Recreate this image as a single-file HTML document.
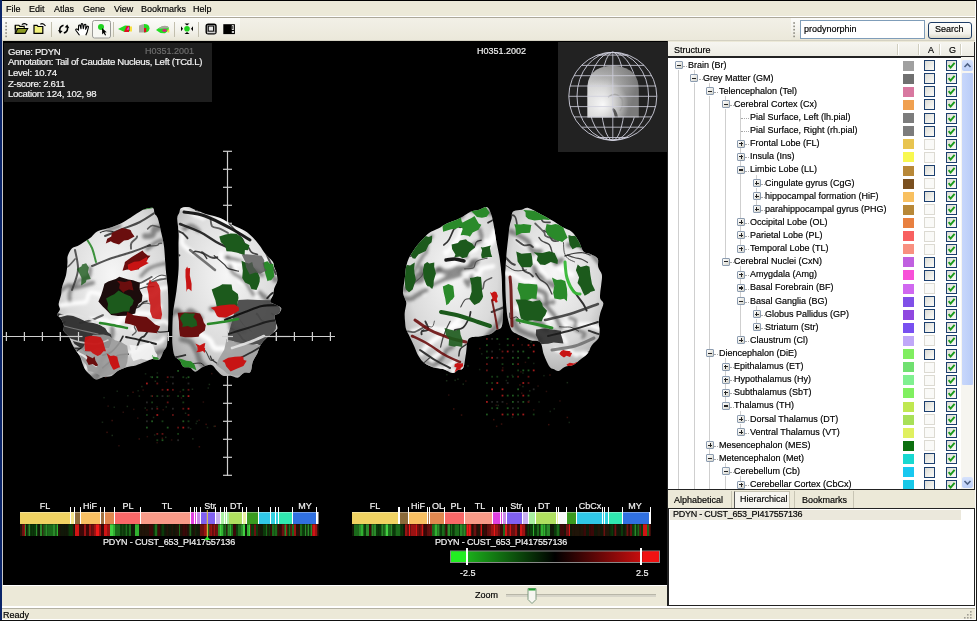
<!DOCTYPE html><html><head><meta charset="utf-8"><style>
*{margin:0;padding:0;box-sizing:border-box}
html,body{width:977px;height:621px;overflow:hidden;background:#ece9d8}
body{position:relative;font-family:"Liberation Sans",sans-serif;font-size:9px;color:#000}
.ab{position:absolute}
.t{position:absolute;white-space:nowrap;line-height:1;will-change:transform;-webkit-text-stroke:0.18px currentColor}
.sw{position:absolute;width:11px;height:10px}
.cb{position:absolute;width:11px;height:11px;border:1px solid #1c3f6e;background:linear-gradient(135deg,#dcdcd6,#fbfbf8)}
.cbf{position:absolute;width:11px;height:11px;border:1px solid #dcdad2;background:#fafaf8}
.ex{position:absolute;width:8px;height:8px;border:1px solid #8c9cb0;border-radius:1px;background:linear-gradient(135deg,#fff,#d4d4cc)}
.ex:after{content:"";position:absolute;left:1px;top:2.5px;width:4px;height:1.2px;background:#222}
.ex.p:before{content:"";position:absolute;left:2.5px;top:1px;width:1.2px;height:4px;background:#222}
.vl{position:absolute;width:1px;background:#cfcfcf}
.hl{position:absolute;height:1px;border-top:1px dotted #a8a8a8}
svg{position:absolute;overflow:visible}
</style></head><body>
<div class="ab" style="left:0px;top:0px;width:977px;height:1px;background:#000"></div>
<div class="ab" style="left:0px;top:0px;width:2px;height:621px;background:#0a2468"></div>
<div class="ab" style="left:976px;top:0px;width:1px;height:621px;background:#1a1a1a"></div>
<div class="ab" style="left:975px;top:1px;width:1px;height:619px;background:#fbfbf8"></div>
<div class="ab" style="left:0px;top:620px;width:977px;height:1px;background:#111"></div>
<div class="ab" style="left:2px;top:1px;width:973px;height:15px;background:#ece9d8"></div>
<div class="ab" style="left:2px;top:16px;width:973px;height:1px;background:#fff"></div>
<div class="ab" style="left:2px;top:17px;width:973px;height:1px;background:#aca899"></div>
<div class="t" style="left:6px;top:4.9px;">File</div>
<div class="t" style="left:29px;top:4.9px;">Edit</div>
<div class="t" style="left:54px;top:4.9px;">Atlas</div>
<div class="t" style="left:83px;top:4.9px;">Gene</div>
<div class="t" style="left:114px;top:4.9px;">View</div>
<div class="t" style="left:141px;top:4.9px;">Bookmarks</div>
<div class="t" style="left:193px;top:4.9px;">Help</div>
<div class="ab" style="left:2px;top:18px;width:973px;height:23px;background:linear-gradient(#f2f0e7,#ebe8da)"></div>
<div class="ab" style="left:2px;top:18px;width:238px;height:23px;background:linear-gradient(#fcfcfa,#f3f2eb 55%,#e7e4d4)"></div>
<div class="ab" style="left:791px;top:18px;width:184px;height:23px;background:linear-gradient(#fcfcfa,#f3f2eb 55%,#e7e4d4)"></div>
<div class="ab" style="left:2px;top:40px;width:973px;height:1px;background:#d4d1c2"></div>

<svg width="977" height="41" style="left:0;top:0">
 <g fill="#8c8a80">
  <rect x="5.3" y="22.20" width="1.6" height="1.6"/><rect x="5.3" y="25.55" width="1.6" height="1.6"/><rect x="5.3" y="28.90" width="1.6" height="1.6"/><rect x="5.3" y="32.25" width="1.6" height="1.6"/><rect x="5.3" y="35.60" width="1.6" height="1.6"/><rect x="793.3" y="22.20" width="1.6" height="1.6"/><rect x="793.3" y="25.55" width="1.6" height="1.6"/><rect x="793.3" y="28.90" width="1.6" height="1.6"/><rect x="793.3" y="32.25" width="1.6" height="1.6"/><rect x="793.3" y="35.60" width="1.6" height="1.6"/>
 </g>
 <g stroke="#c2bfae" stroke-width="1">
  <line x1="51.5" y1="22" x2="51.5" y2="37"/><line x1="113.5" y1="22" x2="113.5" y2="37"/>
  <line x1="174.5" y1="22" x2="174.5" y2="37"/><line x1="198.5" y1="22" x2="198.5" y2="37"/>
 </g>
 <!-- open folder -->
 <path d="M15.3 25.3 h3.6 l1 1.1 h4.3 v2.6 h-8.9 z" fill="#f6f6b0" stroke="#000" stroke-width="1.1"/>
 <path d="M15.3 33.4 l2.4 -4.9 h10 l-2.6 4.9 z" fill="#8c9a24" stroke="#000" stroke-width="1.1"/>
 <path d="M15.3 25.3 v8.1" stroke="#000" stroke-width="1.1"/>
 <path d="M21.8 24.6 q2.2 -1.6 4.2 -0.6" stroke="#000" stroke-width="1.1" fill="none"/>
 <circle cx="26.6" cy="24.6" r="0.9" fill="#000"/>
 <!-- closed folder -->
 <path d="M34 25.4 h3 l1 1.1 h4.8 v6.9 h-8.8 z" fill="#f2f27c" stroke="#000" stroke-width="1.2"/>
 <path d="M40.3 24.2 q2.8 -1.6 5.2 1.8" stroke="#000" stroke-width="1.1" fill="none"/>
 <!-- refresh -->
 <path d="M63.5 25.3 Q59.3 26.5 59.8 30.8" stroke="#000" stroke-width="1.5" fill="none"/>
 <path d="M58 30 L60 33.8 L62.6 31 Z" fill="#000"/>
 <path d="M63.8 33 Q68 31.8 67.5 27.5" stroke="#000" stroke-width="1.5" fill="none"/>
 <path d="M69.3 28.3 L67.3 24.5 L64.7 27.3 Z" fill="#000"/>
 <!-- hand -->
 <path d="M79.5 35.3 L76 30.5 Q75.3 29.3 76.5 29 Q77.5 28.9 78.5 30.2 L78.6 25.8 Q79 24.7 80 25.2 L81 28.8 L81.2 24.2 Q81.8 23.2 82.7 24 L83.3 28.6 L84.3 24.6 Q85.2 23.9 85.9 24.8 L85.6 29.2 L87 26.4 Q88 25.8 88.5 26.8 L87.2 32 L85.8 35.3" fill="#fff" stroke="#000" stroke-width="1.1" stroke-linejoin="round"/>
 <!-- selected button -->
 <rect x="92.5" y="20.5" width="18" height="17.5" rx="2" fill="#f7f7f3" stroke="#9a9a96" stroke-width="1"/>
 <circle cx="101" cy="27" r="3" fill="#1ed21e"/>
 <path d="M102 28 l0.2 6.5 l1.4 -1.4 l1.5 2.4 l1 -0.6 l-1.4 -2.3 l2 -0.3 z" fill="#000"/>
 <!-- brain icons -->
 <path d="M118 29 l7 -3.5 l5 0.2 l0 5.5 l-6 0.5 z" fill="#22dd22"/>
 <path d="M124 32 l2.5 -6 l3 0 l-0.5 6 z" fill="#e01020"/>
 <path d="M126.5 30 l2 -3.5 l1 3 z" fill="#ff30e0"/>
 <rect x="130" y="26.5" width="2" height="5" fill="#f8e040"/>
 <path d="M139 25.5 q3 -1.5 6 -1.5 v8.5 h-6 z" fill="#a8a49c"/>
 <path d="M144 24 q5.5 0 5.5 4.3 q0 4.2 -5.5 4.2 z" fill="#22dd22"/>
 <rect x="144" y="28" width="2.2" height="4.2" fill="#e01020"/>
 <path d="M156 30 q6 -5.5 12.5 -3 l0.5 3.3 l-4 3 q-5 0.5 -9 -3.3 z" fill="#22dd22"/>
 <path d="M159 28 q4 -3.5 9 -1.8 l0.3 2 l-9 0.5 z" fill="#a8a49c"/>
 <ellipse cx="164.5" cy="30.5" rx="2.2" ry="1.4" fill="#e01880"/>
 <rect x="167.5" y="29.5" width="1.8" height="3" fill="#f0e040"/>
 <!-- move -->
 <circle cx="187" cy="28.7" r="2.8" fill="#1ed21e"/>
 <path d="M184.5 23.5 h5 l-2.5 2 z M184.5 34 h5 l-2.5 -2 z M181 26.2 v5 l2 -2.5 z M193 26.2 v5 l-2 -2.5 z" fill="#000"/>
 <!-- square icon -->
 <rect x="206.2" y="24.2" width="9.8" height="9.6" rx="2" fill="#9a9a9a" stroke="#000" stroke-width="1.4"/>
 <rect x="208.3" y="26.1" width="5.2" height="5" fill="#e8e8e8" stroke="#000" stroke-width="0.9"/>
 <line x1="207" y1="32.8" x2="215.5" y2="32.8" stroke="#fff" stroke-width="0.8"/>
 <!-- black panel icon -->
 <rect x="223.3" y="24.2" width="11.6" height="9.9" fill="#000"/>
 <rect x="231.8" y="25.2" width="2" height="4.8" fill="#fff"/>
 <rect x="232.4" y="26" width="0.8" height="3.2" fill="#000"/>
 <rect x="231.8" y="31.2" width="2.2" height="1.6" fill="#fff"/>
</svg>

<div class="ab" style="left:800px;top:20px;width:125px;height:19px;background:#fff;border:1px solid #7f9db9"></div>
<div class="t" style="left:804px;top:24.6px;">prodynorphin</div>
<div class="ab" style="left:928px;top:21.5px;width:44px;height:17.5px;background:linear-gradient(#fefefd,#f2f1ea 70%,#dcd9c9);border:1px solid #1e3d66;border-radius:3px"></div>
<div class="t" style="left:935px;top:25.4px;">Search</div>
<div class="ab" style="left:2px;top:41px;width:666px;height:544px;background:#000"></div>
<div class="ab" style="left:2px;top:41px;width:1px;height:544px;background:#c8c8c8"></div>
<div class="ab" style="left:4px;top:43px;width:208px;height:59px;background:#1e1e1e"></div>
<div class="t" style="left:7.6px;top:46.6px;color:#f4f4f4;font-size:9.6px;letter-spacing:-0.3px">Gene: PDYN</div>
<div class="t" style="left:7.6px;top:57.32px;color:#f4f4f4;font-size:9.6px;letter-spacing:-0.3px">Annotation: Tail of Caudate Nucleus, Left (TCd.L)</div>
<div class="t" style="left:7.6px;top:68.04px;color:#f4f4f4;font-size:9.6px;letter-spacing:-0.3px">Level: 10.74</div>
<div class="t" style="left:7.6px;top:78.76px;color:#f4f4f4;font-size:9.6px;letter-spacing:-0.3px">Z-score: 2.611</div>
<div class="t" style="left:7.6px;top:89.48px;color:#f4f4f4;font-size:9.6px;letter-spacing:-0.3px">Location: 124, 102, 98</div>
<div class="t" style="left:145px;top:46.9px;color:#6e6e6e">H0351.2001</div>
<div class="t" style="left:476.5px;top:46.6px;color:#f0f0f0">H0351.2002</div>
<div class="ab" style="left:558px;top:42px;width:109px;height:110px;background:#222"></div>
<svg width="110" height="111" style="left:558px;top:42px"><defs><linearGradient id="hg" x1="0" y1="0" x2="1" y2="0.3"><stop offset="0" stop-color="#d8d8d8"/><stop offset="0.45" stop-color="#c4c4c4"/><stop offset="1" stop-color="#7a7a7a"/></linearGradient><radialGradient id="hg2" cx="0.3" cy="0.75" r="0.5"><stop offset="0" stop-color="#ffffff" stop-opacity="0.9"/><stop offset="1" stop-color="#ffffff" stop-opacity="0"/></radialGradient><linearGradient id="hg3" x1="0" y1="0" x2="0" y2="1"><stop offset="0" stop-color="#606060" stop-opacity="0.5"/><stop offset="0.4" stop-color="#606060" stop-opacity="0"/></linearGradient></defs><g stroke="#cfcfdc" stroke-width="0.9" fill="none"><circle cx="54.8" cy="54.3" r="44"/><ellipse cx="54.8" cy="54.3" rx="12.0" ry="44"/><ellipse cx="54.8" cy="54.3" rx="24.5" ry="44"/><ellipse cx="54.8" cy="54.3" rx="35.8" ry="44"/></g><path d="M29.4 75.5 L29.4 44 Q30 34 38 28 Q46 23.8 56 23.8 Q69 24.5 76 32 Q80.8 38 80.8 48 L80.8 75.5 Z" fill="url(#hg)"/><path d="M29.4 75.5 L29.4 44 Q30 34 38 28 Q46 23.8 56 23.8 Q69 24.5 76 32 Q80.8 38 80.8 48 L80.8 75.5 Z" fill="url(#hg2)"/><path d="M29.4 75.5 L29.4 44 Q30 34 38 28 Q46 23.8 56 23.8 Q69 24.5 76 32 Q80.8 38 80.8 48 L80.8 75.5 Z" fill="url(#hg3)"/><path d="M50 55 q8 -6 14 2 q2 6 -2 12" stroke="#9a9a9a" stroke-width="1.5" fill="none" opacity="0.7"/><path d="M55 66 q4 2 5 9.5 h-3 q-1 -5 -3 -8 z" fill="#3a3a3a" opacity="0.8"/><g stroke="#cfcfdc" stroke-width="0.9" fill="none" opacity="0.9"><line x1="39.4" y1="13.1" x2="70.2" y2="13.1"/><line x1="23.5" y1="23.4" x2="86.1" y2="23.4"/><line x1="15.9" y1="33.7" x2="93.7" y2="33.7"/><line x1="12.0" y1="44.0" x2="97.6" y2="44.0"/><line x1="10.8" y1="54.3" x2="98.8" y2="54.3"/><line x1="12.0" y1="64.6" x2="97.6" y2="64.6"/><line x1="15.9" y1="74.9" x2="93.7" y2="74.9"/><line x1="23.5" y1="85.2" x2="86.1" y2="85.2"/><line x1="39.4" y1="95.5" x2="70.2" y2="95.5"/><line x1="54.8" y1="10.299999999999997" x2="54.8" y2="98.3"/></g></svg>
<svg width="977" height="621" style="left:0;top:0"><g stroke="#cfcfcf" stroke-width="1.2"><line x1="227.5" y1="151" x2="227.5" y2="476"/><line x1="223" y1="151.3" x2="232" y2="151.3"/><line x1="223" y1="169.3" x2="232" y2="169.3"/><line x1="223" y1="187.3" x2="232" y2="187.3"/><line x1="223" y1="205.3" x2="232" y2="205.3"/><line x1="223" y1="223.3" x2="232" y2="223.3"/><line x1="223" y1="241.3" x2="232" y2="241.3"/><line x1="223" y1="259.3" x2="232" y2="259.3"/><line x1="223" y1="277.3" x2="232" y2="277.3"/><line x1="223" y1="295.3" x2="232" y2="295.3"/><line x1="223" y1="313.3" x2="232" y2="313.3"/><line x1="223" y1="331.3" x2="232" y2="331.3"/><line x1="223" y1="349.3" x2="232" y2="349.3"/><line x1="223" y1="367.3" x2="232" y2="367.3"/><line x1="223" y1="385.3" x2="232" y2="385.3"/><line x1="223" y1="403.3" x2="232" y2="403.3"/><line x1="223" y1="421.3" x2="232" y2="421.3"/><line x1="223" y1="439.3" x2="232" y2="439.3"/><line x1="223" y1="457.3" x2="232" y2="457.3"/><line x1="223" y1="475.3" x2="232" y2="475.3"/><line x1="3" y1="336.5" x2="335" y2="336.5"/><line x1="6.4" y1="332" x2="6.4" y2="341"/><line x1="24.4" y1="332" x2="24.4" y2="341"/><line x1="42.4" y1="332" x2="42.4" y2="341"/><line x1="60.4" y1="332" x2="60.4" y2="341"/><line x1="78.4" y1="332" x2="78.4" y2="341"/><line x1="96.4" y1="332" x2="96.4" y2="341"/><line x1="114.4" y1="332" x2="114.4" y2="341"/><line x1="132.4" y1="332" x2="132.4" y2="341"/><line x1="150.4" y1="332" x2="150.4" y2="341"/><line x1="168.4" y1="332" x2="168.4" y2="341"/><line x1="186.4" y1="332" x2="186.4" y2="341"/><line x1="204.4" y1="332" x2="204.4" y2="341"/><line x1="222.4" y1="332" x2="222.4" y2="341"/><line x1="240.4" y1="332" x2="240.4" y2="341"/><line x1="258.4" y1="332" x2="258.4" y2="341"/><line x1="276.4" y1="332" x2="276.4" y2="341"/><line x1="294.4" y1="332" x2="294.4" y2="341"/><line x1="312.4" y1="332" x2="312.4" y2="341"/><line x1="330.4" y1="332" x2="330.4" y2="341"/></g></svg>
<svg width="977" height="621" style="left:0;top:0"><defs><radialGradient id="bg1" cx="0.5" cy="0.4" r="0.7"><stop offset="0" stop-color="#f6f6f6"/><stop offset="0.6" stop-color="#dadada"/><stop offset="1" stop-color="#9a9a9a"/></radialGradient><linearGradient id="tg" x1="0" y1="0" x2="0" y2="1"><stop offset="0" stop-color="#5a5a5a"/><stop offset="1" stop-color="#bdbdbd"/></linearGradient><filter id="soft" x="-20%" y="-20%" width="140%" height="140%"><feGaussianBlur stdDeviation="1.6"/></filter></defs><clipPath id="cL1"><path d="M153.9,207.6 C151.2,206.3 146.8,208.4 141.7,210.7 C136.6,213.0 130.5,218.1 123.4,221.4 C116.3,224.7 105.5,227.0 98.9,230.6 C92.3,234.2 88.2,239.8 83.6,242.8 C79.0,245.9 74.2,245.3 71.4,248.9 C68.6,252.5 68.3,258.1 66.8,264.2 C65.3,270.3 63.5,279.0 62.2,285.6 C60.9,292.2 60.0,299.1 59.2,303.9 C58.4,308.7 57.1,311.8 57.6,314.6 C58.1,317.4 61.2,317.9 62.2,320.7 C63.2,323.5 62.3,327.6 63.8,331.4 C65.3,335.2 68.6,339.5 71.4,343.6 C74.2,347.7 78.0,351.3 80.6,355.9 C83.1,360.5 84.2,367.3 86.7,371.1 C89.2,374.9 91.7,378.0 95.8,378.8 C99.9,379.6 106.0,377.7 111.1,375.7 C116.2,373.7 120.8,368.9 126.4,366.6 C132.0,364.3 139.1,363.3 144.7,362.0 C150.3,360.7 156.2,362.0 160.0,358.9 C163.8,355.8 166.4,354.8 167.7,343.6 C169.0,332.4 168.3,308.0 167.7,291.7 C167.1,275.4 165.6,258.0 164.0,245.8 C162.4,233.6 159.7,224.7 158.0,218.3 C156.3,211.9 156.6,208.9 153.9,207.6 Z"/></clipPath><clipPath id="cR1"><path d="M180.3,207.6 C183.4,206.1 189.0,207.4 195.6,209.2 C202.2,211.0 211.8,214.7 220.0,218.3 C228.2,221.9 237.9,226.0 244.5,230.6 C251.1,235.2 255.1,240.7 259.7,245.8 C264.3,250.9 269.2,256.4 272.0,261.0 C274.8,265.6 276.1,268.7 276.6,273.3 C277.1,277.9 276.0,284.0 275.0,288.6 C274.0,293.2 269.4,297.6 270.4,300.9 C271.4,304.2 280.3,306.0 281.1,308.5 C281.9,311.0 275.8,312.8 275.0,316.1 C274.2,319.4 278.1,324.8 276.6,328.4 C275.1,332.0 269.2,333.4 265.9,337.5 C262.6,341.6 259.2,347.2 256.7,352.8 C254.1,358.4 253.7,367.0 250.6,371.1 C247.5,375.2 242.9,376.5 238.3,377.3 C233.7,378.1 227.6,377.8 223.0,375.7 C218.4,373.6 215.4,365.8 210.8,365.0 C206.2,364.2 200.2,370.8 195.6,371.1 C191.0,371.4 186.9,369.1 183.3,366.6 C179.7,364.1 176.0,361.2 174.2,355.9 C172.4,350.5 172.3,345.2 172.6,334.5 C172.8,323.8 174.7,306.5 175.7,291.7 C176.7,276.9 178.6,258.0 178.8,245.8 C179.1,233.6 176.9,224.7 177.2,218.3 C177.4,211.9 177.2,209.1 180.3,207.6 Z"/></clipPath><clipPath id="cL2"><path d="M487.7,207.2 C483.9,205.3 477.1,208.9 470.3,211.6 C463.5,214.3 453.9,219.8 447.1,223.2 C440.4,226.6 434.6,228.5 429.8,231.9 C425.0,235.3 421.6,239.2 418.2,243.5 C414.8,247.8 411.7,252.6 409.5,257.9 C407.3,263.2 406.1,269.5 405.1,275.3 C404.1,281.1 403.4,287.9 403.7,292.7 C403.9,297.5 406.4,299.5 406.6,304.3 C406.8,309.1 404.6,316.4 405.1,321.7 C405.6,327.0 407.3,330.4 409.5,336.2 C411.7,342.0 414.3,351.1 418.2,356.4 C422.1,361.7 426.9,365.3 432.7,368.0 C438.5,370.7 447.8,372.4 452.9,372.4 C458.0,372.4 460.4,373.6 463.1,368.0 C465.8,362.4 464.3,344.8 468.9,339.0 C473.5,333.2 485.2,335.5 490.6,333.3 C496.0,331.1 499.1,332.3 501.0,326.0 C502.9,319.7 502.3,306.9 502.0,295.6 C501.7,284.3 500.5,270.1 499.0,258.0 C497.5,245.9 494.9,231.7 493.0,223.2 C491.1,214.7 491.5,209.1 487.7,207.2 Z"/></clipPath><clipPath id="cR2"><path d="M514.5,211.6 C517.4,210.1 522.7,207.2 529.0,208.7 C535.3,210.1 544.9,216.4 552.1,220.3 C559.3,224.2 567.1,226.6 572.4,231.9 C577.7,237.2 579.9,247.8 584.0,252.1 C588.1,256.4 594.1,254.1 597.0,258.0 C599.9,261.9 600.9,269.5 601.4,275.3 C601.9,281.1 599.8,287.9 600.0,292.7 C600.2,297.5 603.0,299.5 602.8,304.3 C602.5,309.1 599.2,315.9 598.5,321.7 C597.8,327.5 600.4,333.7 598.5,339.0 C596.6,344.3 591.4,349.2 587.0,353.5 C582.6,357.8 577.2,362.1 572.4,365.0 C567.6,367.9 561.9,370.7 558.0,371.0 C554.1,371.3 552.1,371.4 549.2,366.6 C546.3,361.8 544.9,347.1 540.6,342.0 C536.3,336.9 528.0,338.1 523.2,336.2 C518.4,334.3 514.5,334.8 511.6,330.4 C508.7,326.0 506.8,319.7 505.8,310.0 C504.8,300.3 505.3,284.9 505.8,272.4 C506.3,259.9 507.7,244.0 508.7,234.8 C509.7,225.6 510.6,221.3 511.6,217.4 C512.6,213.5 511.6,213.1 514.5,211.6 Z"/></clipPath><rect x="177.2" y="370.0" width="1.8" height="1.8" fill="#1f561f"/><rect x="151.2" y="376.3" width="1.8" height="1.8" fill="#1f561f"/><rect x="156.4" y="376.3" width="1.8" height="1.8" fill="#1f561f"/><rect x="166.8" y="376.3" width="1.8" height="1.8" fill="#601212"/><rect x="172.0" y="376.3" width="1.8" height="1.8" fill="#262626"/><rect x="182.4" y="376.3" width="1.8" height="1.8" fill="#163c16"/><rect x="187.6" y="376.3" width="1.8" height="1.8" fill="#1f561f"/><rect x="146.0" y="382.6" width="1.8" height="1.8" fill="#a01a1a"/><rect x="156.4" y="382.6" width="1.8" height="1.8" fill="#601212"/><rect x="172.0" y="382.6" width="1.8" height="1.8" fill="#262626"/><rect x="187.6" y="382.6" width="1.8" height="1.8" fill="#262626"/><rect x="161.6" y="388.9" width="1.8" height="1.8" fill="#601212"/><rect x="166.8" y="388.9" width="1.8" height="1.8" fill="#a01a1a"/><rect x="172.0" y="388.9" width="1.8" height="1.8" fill="#601212"/><rect x="182.4" y="388.9" width="1.8" height="1.8" fill="#163c16"/><rect x="187.6" y="388.9" width="1.8" height="1.8" fill="#601212"/><rect x="151.2" y="395.2" width="1.8" height="1.8" fill="#601212"/><rect x="156.4" y="395.2" width="1.8" height="1.8" fill="#163c16"/><rect x="161.6" y="395.2" width="1.8" height="1.8" fill="#262626"/><rect x="166.8" y="395.2" width="1.8" height="1.8" fill="#163c16"/><rect x="177.2" y="395.2" width="1.8" height="1.8" fill="#163c16"/><rect x="182.4" y="395.2" width="1.8" height="1.8" fill="#1f561f"/><rect x="187.6" y="395.2" width="1.8" height="1.8" fill="#a01a1a"/><rect x="146.0" y="401.5" width="1.8" height="1.8" fill="#262626"/><rect x="151.2" y="401.5" width="1.8" height="1.8" fill="#163c16"/><rect x="166.8" y="401.5" width="1.8" height="1.8" fill="#601212"/><rect x="182.4" y="401.5" width="1.8" height="1.8" fill="#163c16"/><rect x="151.2" y="407.8" width="1.8" height="1.8" fill="#262626"/><rect x="156.4" y="407.8" width="1.8" height="1.8" fill="#601212"/><rect x="172.0" y="407.8" width="1.8" height="1.8" fill="#262626"/><rect x="182.4" y="407.8" width="1.8" height="1.8" fill="#601212"/><rect x="187.6" y="407.8" width="1.8" height="1.8" fill="#a01a1a"/><rect x="146.0" y="414.1" width="1.8" height="1.8" fill="#163c16"/><rect x="156.4" y="414.1" width="1.8" height="1.8" fill="#a01a1a"/><rect x="172.0" y="414.1" width="1.8" height="1.8" fill="#601212"/><rect x="187.6" y="414.1" width="1.8" height="1.8" fill="#601212"/><rect x="146.0" y="420.4" width="1.8" height="1.8" fill="#262626"/><rect x="151.2" y="420.4" width="1.8" height="1.8" fill="#1f561f"/><rect x="161.6" y="420.4" width="1.8" height="1.8" fill="#163c16"/><rect x="182.4" y="420.4" width="1.8" height="1.8" fill="#1f561f"/><rect x="187.6" y="420.4" width="1.8" height="1.8" fill="#163c16"/><rect x="146.0" y="426.7" width="1.8" height="1.8" fill="#1f561f"/><rect x="166.8" y="426.7" width="1.8" height="1.8" fill="#1f561f"/><rect x="177.2" y="426.7" width="1.8" height="1.8" fill="#601212"/><rect x="182.4" y="426.7" width="1.8" height="1.8" fill="#a01a1a"/><rect x="187.6" y="426.7" width="1.8" height="1.8" fill="#262626"/><rect x="156.4" y="433.0" width="1.8" height="1.8" fill="#601212"/><rect x="161.6" y="433.0" width="1.8" height="1.8" fill="#601212"/><rect x="177.2" y="433.0" width="1.8" height="1.8" fill="#163c16"/><rect x="156.4" y="439.3" width="1.8" height="1.8" fill="#163c16"/><rect x="161.6" y="439.3" width="1.8" height="1.8" fill="#1f561f"/><rect x="177.2" y="439.3" width="1.8" height="1.8" fill="#262626"/><rect x="486.0" y="338.0" width="1.8" height="1.8" fill="#601212"/><rect x="491.2" y="338.0" width="1.8" height="1.8" fill="#262626"/><rect x="496.4" y="338.0" width="1.8" height="1.8" fill="#1f561f"/><rect x="506.8" y="338.0" width="1.8" height="1.8" fill="#1f561f"/><rect x="517.2" y="338.0" width="1.8" height="1.8" fill="#601212"/><rect x="527.6" y="338.0" width="1.8" height="1.8" fill="#163c16"/><rect x="532.8" y="338.0" width="1.8" height="1.8" fill="#601212"/><rect x="486.0" y="344.3" width="1.8" height="1.8" fill="#1f561f"/><rect x="506.8" y="344.3" width="1.8" height="1.8" fill="#163c16"/><rect x="512.0" y="344.3" width="1.8" height="1.8" fill="#601212"/><rect x="527.6" y="344.3" width="1.8" height="1.8" fill="#a01a1a"/><rect x="532.8" y="344.3" width="1.8" height="1.8" fill="#a01a1a"/><rect x="486.0" y="350.6" width="1.8" height="1.8" fill="#163c16"/><rect x="491.2" y="350.6" width="1.8" height="1.8" fill="#262626"/><rect x="501.6" y="350.6" width="1.8" height="1.8" fill="#601212"/><rect x="506.8" y="350.6" width="1.8" height="1.8" fill="#a01a1a"/><rect x="512.0" y="350.6" width="1.8" height="1.8" fill="#262626"/><rect x="517.2" y="350.6" width="1.8" height="1.8" fill="#1f561f"/><rect x="522.4" y="350.6" width="1.8" height="1.8" fill="#1f561f"/><rect x="532.8" y="350.6" width="1.8" height="1.8" fill="#a01a1a"/><rect x="486.0" y="356.9" width="1.8" height="1.8" fill="#1f561f"/><rect x="491.2" y="356.9" width="1.8" height="1.8" fill="#a01a1a"/><rect x="496.4" y="356.9" width="1.8" height="1.8" fill="#262626"/><rect x="501.6" y="356.9" width="1.8" height="1.8" fill="#601212"/><rect x="512.0" y="356.9" width="1.8" height="1.8" fill="#1f561f"/><rect x="517.2" y="356.9" width="1.8" height="1.8" fill="#1f561f"/><rect x="527.6" y="356.9" width="1.8" height="1.8" fill="#1f561f"/><rect x="486.0" y="363.2" width="1.8" height="1.8" fill="#601212"/><rect x="501.6" y="363.2" width="1.8" height="1.8" fill="#163c16"/><rect x="512.0" y="363.2" width="1.8" height="1.8" fill="#1f561f"/><rect x="517.2" y="363.2" width="1.8" height="1.8" fill="#601212"/><rect x="486.0" y="369.5" width="1.8" height="1.8" fill="#601212"/><rect x="501.6" y="369.5" width="1.8" height="1.8" fill="#601212"/><rect x="517.2" y="369.5" width="1.8" height="1.8" fill="#163c16"/><rect x="522.4" y="369.5" width="1.8" height="1.8" fill="#1f561f"/><rect x="527.6" y="369.5" width="1.8" height="1.8" fill="#1f561f"/><rect x="532.8" y="369.5" width="1.8" height="1.8" fill="#a01a1a"/><rect x="491.2" y="375.8" width="1.8" height="1.8" fill="#163c16"/><rect x="496.4" y="375.8" width="1.8" height="1.8" fill="#163c16"/><rect x="506.8" y="375.8" width="1.8" height="1.8" fill="#163c16"/><rect x="512.0" y="375.8" width="1.8" height="1.8" fill="#163c16"/><rect x="517.2" y="375.8" width="1.8" height="1.8" fill="#601212"/><rect x="527.6" y="375.8" width="1.8" height="1.8" fill="#601212"/><rect x="486.0" y="382.1" width="1.8" height="1.8" fill="#163c16"/><rect x="491.2" y="382.1" width="1.8" height="1.8" fill="#163c16"/><rect x="496.4" y="382.1" width="1.8" height="1.8" fill="#a01a1a"/><rect x="506.8" y="382.1" width="1.8" height="1.8" fill="#262626"/><rect x="522.4" y="382.1" width="1.8" height="1.8" fill="#a01a1a"/><rect x="527.6" y="382.1" width="1.8" height="1.8" fill="#601212"/><rect x="491.2" y="388.4" width="1.8" height="1.8" fill="#a01a1a"/><rect x="501.6" y="388.4" width="1.8" height="1.8" fill="#a01a1a"/><rect x="517.2" y="388.4" width="1.8" height="1.8" fill="#1f561f"/><rect x="532.8" y="388.4" width="1.8" height="1.8" fill="#262626"/><rect x="486.0" y="394.7" width="1.8" height="1.8" fill="#163c16"/><rect x="501.6" y="394.7" width="1.8" height="1.8" fill="#a01a1a"/><rect x="506.8" y="394.7" width="1.8" height="1.8" fill="#1f561f"/><rect x="512.0" y="394.7" width="1.8" height="1.8" fill="#1f561f"/><rect x="517.2" y="394.7" width="1.8" height="1.8" fill="#163c16"/><rect x="522.4" y="394.7" width="1.8" height="1.8" fill="#a01a1a"/><rect x="527.6" y="394.7" width="1.8" height="1.8" fill="#1f561f"/><rect x="486.0" y="401.0" width="1.8" height="1.8" fill="#a01a1a"/><rect x="491.2" y="401.0" width="1.8" height="1.8" fill="#262626"/><rect x="496.4" y="401.0" width="1.8" height="1.8" fill="#262626"/><rect x="501.6" y="401.0" width="1.8" height="1.8" fill="#262626"/><rect x="512.0" y="401.0" width="1.8" height="1.8" fill="#1f561f"/><rect x="517.2" y="401.0" width="1.8" height="1.8" fill="#262626"/><rect x="522.4" y="401.0" width="1.8" height="1.8" fill="#1f561f"/><rect x="527.6" y="401.0" width="1.8" height="1.8" fill="#601212"/><rect x="491.2" y="407.3" width="1.8" height="1.8" fill="#163c16"/><rect x="496.4" y="407.3" width="1.8" height="1.8" fill="#1f561f"/><rect x="506.8" y="407.3" width="1.8" height="1.8" fill="#1f561f"/><rect x="512.0" y="407.3" width="1.8" height="1.8" fill="#262626"/><rect x="517.2" y="407.3" width="1.8" height="1.8" fill="#163c16"/><rect x="486.0" y="413.6" width="1.8" height="1.8" fill="#1f561f"/><rect x="501.6" y="413.6" width="1.8" height="1.8" fill="#a01a1a"/><rect x="506.8" y="413.6" width="1.8" height="1.8" fill="#1f561f"/><rect x="512.0" y="413.6" width="1.8" height="1.8" fill="#a01a1a"/><rect x="517.2" y="413.6" width="1.8" height="1.8" fill="#1f561f"/><rect x="522.4" y="413.6" width="1.8" height="1.8" fill="#a01a1a"/><rect x="532.8" y="413.6" width="1.8" height="1.8" fill="#163c16"/><rect x="211.0" y="372.9" width="1.5" height="1.5" fill="#2a0e0c"/><rect x="118.2" y="445.0" width="1.5" height="1.5" fill="#2a0e0c"/><rect x="106.3" y="431.6" width="1.5" height="1.5" fill="#3a100c"/><rect x="198.6" y="446.0" width="1.5" height="1.5" fill="#3a100c"/><rect x="113.5" y="406.5" width="1.5" height="1.5" fill="#142414"/><rect x="132.3" y="391.5" width="1.5" height="1.5" fill="#3a100c"/><rect x="207.5" y="387.3" width="1.5" height="1.5" fill="#142414"/><rect x="191.7" y="388.5" width="1.5" height="1.5" fill="#1a2c18"/><rect x="126.6" y="405.7" width="1.5" height="1.5" fill="#1a2c18"/><rect x="156.3" y="406.1" width="1.5" height="1.5" fill="#142414"/><rect x="150.5" y="395.3" width="1.5" height="1.5" fill="#1a2c18"/><rect x="146.6" y="435.9" width="1.5" height="1.5" fill="#2a0e0c"/><rect x="156.4" y="441.9" width="1.5" height="1.5" fill="#2a0e0c"/><rect x="122.5" y="411.5" width="1.5" height="1.5" fill="#2a0e0c"/><rect x="133.0" y="408.6" width="1.5" height="1.5" fill="#2a0e0c"/><rect x="202.6" y="401.3" width="1.5" height="1.5" fill="#2a0e0c"/><rect x="153.9" y="434.2" width="1.5" height="1.5" fill="#142414"/><rect x="146.2" y="409.2" width="1.5" height="1.5" fill="#3a100c"/><rect x="162.5" y="409.0" width="1.5" height="1.5" fill="#2a0e0c"/><rect x="127.1" y="395.0" width="1.5" height="1.5" fill="#142414"/><rect x="144.5" y="407.3" width="1.5" height="1.5" fill="#1a2c18"/><rect x="189.9" y="428.0" width="1.5" height="1.5" fill="#142414"/><rect x="154.6" y="380.5" width="1.5" height="1.5" fill="#1a2c18"/><rect x="144.8" y="373.1" width="1.5" height="1.5" fill="#142414"/><rect x="206.7" y="426.8" width="1.5" height="1.5" fill="#142414"/><rect x="107.4" y="405.4" width="1.5" height="1.5" fill="#2a0e0c"/><rect x="208.6" y="383.7" width="1.5" height="1.5" fill="#1a2c18"/><rect x="165.0" y="436.6" width="1.5" height="1.5" fill="#1a2c18"/><rect x="105.0" y="376.6" width="1.5" height="1.5" fill="#2a0e0c"/><rect x="165.5" y="406.2" width="1.5" height="1.5" fill="#1a2c18"/><rect x="179.6" y="390.9" width="1.5" height="1.5" fill="#2a0e0c"/><rect x="170.2" y="376.2" width="1.5" height="1.5" fill="#1a2c18"/><rect x="149.9" y="376.1" width="1.5" height="1.5" fill="#142414"/><rect x="168.5" y="395.1" width="1.5" height="1.5" fill="#2a0e0c"/><rect x="192.1" y="438.1" width="1.5" height="1.5" fill="#1a2c18"/><rect x="101.7" y="421.5" width="1.5" height="1.5" fill="#142414"/><rect x="170.9" y="439.2" width="1.5" height="1.5" fill="#2a0e0c"/><rect x="116.5" y="390.5" width="1.5" height="1.5" fill="#142414"/><rect x="137.4" y="390.0" width="1.5" height="1.5" fill="#142414"/><rect x="156.6" y="372.2" width="1.5" height="1.5" fill="#142414"/><rect x="180.7" y="397.2" width="1.5" height="1.5" fill="#2a0e0c"/><rect x="198.4" y="419.5" width="1.5" height="1.5" fill="#2a0e0c"/><rect x="213.5" y="425.6" width="1.5" height="1.5" fill="#1a2c18"/><rect x="138.5" y="438.2" width="1.5" height="1.5" fill="#3a100c"/><rect x="138.6" y="395.3" width="1.5" height="1.5" fill="#1a2c18"/><rect x="184.8" y="412.5" width="1.5" height="1.5" fill="#1a2c18"/><rect x="165.8" y="381.0" width="1.5" height="1.5" fill="#2a0e0c"/><rect x="111.5" y="434.7" width="1.5" height="1.5" fill="#1a2c18"/><rect x="196.4" y="420.5" width="1.5" height="1.5" fill="#142414"/><rect x="142.4" y="389.3" width="1.5" height="1.5" fill="#2a0e0c"/><rect x="214.5" y="425.5" width="1.5" height="1.5" fill="#3a100c"/><rect x="195.5" y="422.7" width="1.5" height="1.5" fill="#142414"/><rect x="152.8" y="416.7" width="1.5" height="1.5" fill="#1a2c18"/><rect x="103.3" y="396.9" width="1.5" height="1.5" fill="#142414"/><rect x="141.1" y="385.8" width="1.5" height="1.5" fill="#1a2c18"/><rect x="205.4" y="423.6" width="1.5" height="1.5" fill="#3a100c"/><rect x="111.4" y="419.8" width="1.5" height="1.5" fill="#3a100c"/><rect x="185.7" y="377.2" width="1.5" height="1.5" fill="#1a2c18"/><rect x="161.6" y="437.5" width="1.5" height="1.5" fill="#3a100c"/><rect x="137.0" y="417.4" width="1.5" height="1.5" fill="#2a0e0c"/><rect x="533.0" y="409.1" width="1.5" height="1.5" fill="#2a0e0c"/><rect x="511.5" y="374.6" width="1.5" height="1.5" fill="#142414"/><rect x="521.0" y="392.4" width="1.5" height="1.5" fill="#2a0e0c"/><rect x="478.9" y="368.8" width="1.5" height="1.5" fill="#142414"/><rect x="553.5" y="408.1" width="1.5" height="1.5" fill="#142414"/><rect x="448.0" y="394.3" width="1.5" height="1.5" fill="#2a0e0c"/><rect x="564.7" y="350.0" width="1.5" height="1.5" fill="#1a2c18"/><rect x="495.5" y="404.5" width="1.5" height="1.5" fill="#2a0e0c"/><rect x="498.9" y="348.7" width="1.5" height="1.5" fill="#1a2c18"/><rect x="543.2" y="374.9" width="1.5" height="1.5" fill="#142414"/><rect x="519.2" y="384.2" width="1.5" height="1.5" fill="#3a100c"/><rect x="548.0" y="423.9" width="1.5" height="1.5" fill="#3a100c"/><rect x="545.7" y="390.7" width="1.5" height="1.5" fill="#2a0e0c"/><rect x="549.2" y="374.3" width="1.5" height="1.5" fill="#3a100c"/><rect x="462.5" y="383.4" width="1.5" height="1.5" fill="#1a2c18"/><rect x="445.9" y="380.0" width="1.5" height="1.5" fill="#1a2c18"/><rect x="522.2" y="385.8" width="1.5" height="1.5" fill="#1a2c18"/><rect x="493.0" y="418.9" width="1.5" height="1.5" fill="#3a100c"/><rect x="560.8" y="361.5" width="1.5" height="1.5" fill="#2a0e0c"/><rect x="505.6" y="379.8" width="1.5" height="1.5" fill="#142414"/><rect x="566.6" y="381.9" width="1.5" height="1.5" fill="#1a2c18"/><rect x="497.4" y="404.7" width="1.5" height="1.5" fill="#1a2c18"/><rect x="502.0" y="367.1" width="1.5" height="1.5" fill="#2a0e0c"/><rect x="455.0" y="367.4" width="1.5" height="1.5" fill="#1a2c18"/><rect x="458.2" y="345.8" width="1.5" height="1.5" fill="#1a2c18"/><rect x="530.3" y="341.4" width="1.5" height="1.5" fill="#1a2c18"/><rect x="529.4" y="346.6" width="1.5" height="1.5" fill="#3a100c"/><rect x="467.2" y="365.2" width="1.5" height="1.5" fill="#1a2c18"/><rect x="553.1" y="357.8" width="1.5" height="1.5" fill="#1a2c18"/><rect x="559.2" y="400.2" width="1.5" height="1.5" fill="#2a0e0c"/><rect x="500.8" y="423.3" width="1.5" height="1.5" fill="#3a100c"/><rect x="446.1" y="373.9" width="1.5" height="1.5" fill="#142414"/><rect x="568.5" y="421.7" width="1.5" height="1.5" fill="#142414"/><rect x="569.6" y="358.5" width="1.5" height="1.5" fill="#142414"/><rect x="453.0" y="408.2" width="1.5" height="1.5" fill="#3a100c"/><rect x="453.3" y="365.9" width="1.5" height="1.5" fill="#1a2c18"/><rect x="542.7" y="352.0" width="1.5" height="1.5" fill="#142414"/><rect x="549.5" y="410.7" width="1.5" height="1.5" fill="#142414"/><rect x="528.3" y="400.0" width="1.5" height="1.5" fill="#142414"/><rect x="529.0" y="390.1" width="1.5" height="1.5" fill="#1a2c18"/><rect x="566.6" y="416.7" width="1.5" height="1.5" fill="#3a100c"/><rect x="465.1" y="380.3" width="1.5" height="1.5" fill="#2a0e0c"/><rect x="511.7" y="416.4" width="1.5" height="1.5" fill="#142414"/><rect x="538.3" y="401.2" width="1.5" height="1.5" fill="#142414"/><rect x="487.8" y="356.5" width="1.5" height="1.5" fill="#142414"/><rect x="571.2" y="348.3" width="1.5" height="1.5" fill="#1a2c18"/><rect x="498.7" y="343.6" width="1.5" height="1.5" fill="#142414"/><rect x="457.2" y="378.4" width="1.5" height="1.5" fill="#1a2c18"/><rect x="522.2" y="372.3" width="1.5" height="1.5" fill="#142414"/><rect x="479.1" y="347.8" width="1.5" height="1.5" fill="#3a100c"/><rect x="495.9" y="425.6" width="1.5" height="1.5" fill="#3a100c"/><rect x="506.1" y="402.9" width="1.5" height="1.5" fill="#2a0e0c"/><rect x="537.3" y="385.3" width="1.5" height="1.5" fill="#2a0e0c"/><rect x="521.4" y="344.1" width="1.5" height="1.5" fill="#3a100c"/><rect x="524.7" y="361.6" width="1.5" height="1.5" fill="#2a0e0c"/><rect x="481.0" y="353.1" width="1.5" height="1.5" fill="#142414"/><rect x="460.8" y="414.3" width="1.5" height="1.5" fill="#3a100c"/><rect x="454.4" y="379.6" width="1.5" height="1.5" fill="#1a2c18"/><rect x="520.2" y="371.1" width="1.5" height="1.5" fill="#2a0e0c"/><rect x="533.0" y="362.7" width="1.5" height="1.5" fill="#142414"/><clipPath id="cbL1"><path d="M153.3,208.2 C152.2,207.3 149.6,207.9 147.6,208.3 C145.6,208.8 143.8,209.4 141.3,210.7 C138.8,212.0 135.6,214.3 132.6,216.2 C129.7,218.1 127.1,220.0 123.6,221.9 C120.1,223.7 115.9,225.7 111.6,227.2 C107.4,228.8 101.5,229.5 98.1,231.1 C94.8,232.7 93.7,235.1 91.4,236.9 C89.0,238.7 86.3,240.5 84.0,242.0 C81.7,243.5 79.6,244.9 77.6,246.0 C75.5,247.1 73.4,246.8 71.8,248.5 C70.1,250.2 68.5,253.6 67.7,256.1 C67.0,258.6 67.7,260.3 67.4,263.4 C67.2,266.6 66.8,271.4 66.0,275.2 C65.1,279.0 63.1,283.0 62.3,286.3 C61.4,289.6 61.7,291.9 61.1,294.8 C60.5,297.7 58.9,301.3 58.7,303.8 C58.5,306.2 60.2,307.7 59.9,309.5 C59.6,311.3 57.2,313.1 57.2,314.5 C57.2,315.9 59.1,316.7 59.9,317.6 C60.7,318.6 61.1,318.9 61.8,320.3 C62.4,321.6 63.6,324.1 63.9,325.9 C64.2,327.7 62.9,329.3 63.7,331.1 C64.6,332.9 67.5,334.6 68.9,336.7 C70.3,338.8 70.8,341.5 71.9,343.7 C73.1,345.9 74.3,347.9 75.6,350.0 C77.0,352.2 78.9,354.4 80.1,356.7 C81.3,359.0 81.6,361.6 82.6,363.9 C83.6,366.3 84.7,368.9 86.1,370.8 C87.5,372.8 89.1,374.0 90.8,375.5 C92.5,376.9 94.0,379.2 96.1,379.5 C98.2,379.8 100.8,377.6 103.4,377.0 C106.0,376.4 109.1,377.0 111.6,376.0 C114.1,374.9 115.9,372.1 118.4,370.6 C120.9,369.1 123.6,368.1 126.5,367.2 C129.4,366.3 132.8,366.2 135.8,365.4 C138.8,364.5 142.0,363.2 144.7,362.1 C147.4,361.1 149.6,359.5 152.1,359.0 C154.5,358.5 157.7,360.7 159.6,359.4 C161.5,358.1 162.3,353.7 163.6,351.1 C164.9,348.5 166.4,349.3 167.2,343.7 C168.0,338.1 168.2,326.3 168.3,317.6 C168.5,309.0 168.4,299.6 168.0,291.5 C167.5,283.4 166.3,276.3 165.7,268.8 C165.0,261.2 164.8,252.4 164.0,246.2 C163.2,240.1 162.1,236.7 161.1,232.0 C160.0,227.4 158.9,221.4 157.8,218.3 C156.7,215.2 155.3,215.2 154.5,213.5 C153.8,211.8 154.5,209.0 153.3,208.2 Z"/></clipPath><g clip-path="url(#cbL1)"><rect x="53.6" y="203.6" width="118.1" height="179.20000000000002" fill="url(#bg1)"/><g filter="url(#soft)"><path d="M68.2,387.7 C70.3,386.2 78.4,381.3 81.0,378.7 C83.6,376.1 82.6,374.5 83.7,372.0 C84.8,369.5 86.5,366.0 87.7,363.6 C89.0,361.2 90.6,358.7 91.2,357.7 " stroke="#ffffff" stroke-width="3.2686968703217687" fill="none" stroke-linecap="round" opacity="0.9"/><path d="M76.0,222.2 C75.9,221.0 73.1,217.6 75.0,215.2 C76.9,212.7 84.9,209.4 87.3,207.5 C89.8,205.7 88.3,205.6 89.6,204.0 C91.0,202.3 94.3,198.6 95.2,197.6 " stroke="#606060" stroke-width="5.073901714817916" fill="none" stroke-linecap="round" opacity="0.7"/><path d="M91.1,318.9 C93.7,319.2 103.6,319.9 106.8,320.5 C109.9,321.1 107.4,322.7 109.9,322.4 C112.5,322.1 118.2,320.4 122.2,318.9 C126.2,317.4 131.9,314.5 133.8,313.6 " stroke="#ffffff" stroke-width="4.070090216138353" fill="none" stroke-linecap="round" opacity="0.9"/><path d="M145.0,236.1 C146.2,236.0 150.9,236.6 152.5,235.3 C154.0,234.0 153.6,229.3 154.3,228.3 C155.0,227.2 155.1,229.9 156.9,229.1 C158.7,228.3 163.8,224.4 165.2,223.5 " stroke="#606060" stroke-width="5.709661890344068" fill="none" stroke-linecap="round" opacity="0.7"/><path d="M101.1,337.1 C102.2,336.4 105.5,333.6 107.4,332.4 C109.3,331.3 110.2,332.5 112.5,330.3 C114.7,328.2 119.4,322.4 120.8,319.7 C122.3,317.0 121.0,315.2 121.1,314.3 " stroke="#ffffff" stroke-width="4.989514273079683" fill="none" stroke-linecap="round" opacity="0.9"/><path d="M147.3,249.0 C148.9,247.8 154.0,243.4 156.8,241.9 C159.7,240.4 162.0,240.4 164.4,240.0 C166.8,239.6 168.8,239.7 171.1,239.4 C173.3,239.0 176.8,238.3 178.0,238.1 " stroke="#606060" stroke-width="3.8662328954825704" fill="none" stroke-linecap="round" opacity="0.7"/><path d="M57.7,239.9 C58.6,238.5 61.1,235.0 63.5,231.5 C65.8,227.9 71.0,222.0 71.9,218.7 C72.8,215.4 68.1,213.6 68.8,211.7 C69.6,209.9 75.2,208.3 76.4,207.6 " stroke="#ffffff" stroke-width="5.231255813674874" fill="none" stroke-linecap="round" opacity="0.9"/><path d="M84.4,396.2 C85.0,394.6 85.4,390.0 87.8,386.7 C90.1,383.5 96.0,381.2 98.4,376.7 C100.7,372.3 99.8,364.2 101.7,360.0 C103.6,355.9 108.3,353.3 109.6,351.9 " stroke="#606060" stroke-width="3.250064407299298" fill="none" stroke-linecap="round" opacity="0.7"/><path d="M111.3,300.7 C112.6,299.5 116.9,294.4 118.9,293.4 C121.0,292.4 121.8,295.3 123.8,294.5 C125.8,293.8 129.3,290.5 130.9,288.8 C132.5,287.1 132.9,285.0 133.3,284.3 " stroke="#ffffff" stroke-width="3.676558950191577" fill="none" stroke-linecap="round" opacity="0.9"/><path d="M70.1,302.7 C70.1,300.9 68.6,295.5 70.1,291.8 C71.5,288.1 75.7,283.2 78.8,280.7 C81.9,278.3 86.6,279.3 88.5,277.1 C90.5,275.0 90.0,269.4 90.3,267.8 " stroke="#606060" stroke-width="3.6020289771600615" fill="none" stroke-linecap="round" opacity="0.7"/><path d="M60.4,305.4 C63.2,305.0 72.6,303.6 76.9,303.0 C81.2,302.3 84.1,303.2 86.3,301.5 C88.4,299.7 87.3,293.7 89.9,292.5 C92.5,291.4 99.7,294.2 101.7,294.6 " stroke="#ffffff" stroke-width="4.107761259528544" fill="none" stroke-linecap="round" opacity="0.9"/><path d="M148.8,366.3 C149.3,365.5 149.9,363.7 151.6,361.4 C153.2,359.0 155.3,354.0 158.8,352.2 C162.4,350.4 170.1,352.5 172.9,350.6 C175.8,348.6 175.3,342.3 175.8,340.7 " stroke="#606060" stroke-width="4.839100317287608" fill="none" stroke-linecap="round" opacity="0.7"/><path d="M132.3,328.8 C133.4,328.3 135.9,326.4 138.9,325.8 C141.9,325.1 146.2,325.7 150.3,325.0 C154.4,324.2 160.5,321.6 163.4,321.3 C166.3,321.0 166.9,323.1 167.6,323.4 " stroke="#ffffff" stroke-width="3.8126502332556735" fill="none" stroke-linecap="round" opacity="0.9"/><path d="M88.5,233.8 C90.0,232.8 94.0,228.9 97.0,227.7 C100.1,226.6 104.8,226.6 106.9,226.9 C109.0,227.2 107.4,229.7 109.5,229.5 C111.6,229.3 118.0,226.5 119.7,225.9 " stroke="#606060" stroke-width="3.7496969603202657" fill="none" stroke-linecap="round" opacity="0.7"/><path d="M134.4,316.2 C135.1,315.6 136.3,313.4 138.8,313.0 C141.3,312.6 146.2,314.2 149.4,313.7 C152.6,313.2 156.4,311.2 158.0,310.0 C159.6,308.8 159.0,307.1 159.2,306.5 " stroke="#ffffff" stroke-width="5.055117918505532" fill="none" stroke-linecap="round" opacity="0.9"/><path d="M47.6,288.8 C49.1,289.4 53.1,292.9 56.5,292.4 C60.0,291.8 65.3,286.2 68.4,285.4 C71.5,284.6 70.9,288.0 75.0,287.5 C79.1,287.1 90.0,283.6 93.0,282.8 " stroke="#606060" stroke-width="4.098749130851241" fill="none" stroke-linecap="round" opacity="0.7"/><path d="M129.7,352.4 C131.2,351.9 135.6,350.6 138.8,349.2 C142.0,347.8 145.5,345.1 149.0,344.0 C152.4,342.9 157.0,343.4 159.4,342.4 C161.9,341.4 163.0,338.9 163.8,338.2 " stroke="#ffffff" stroke-width="4.167877081381411" fill="none" stroke-linecap="round" opacity="0.9"/><path d="M96.6,350.4 C97.7,349.3 102.8,345.5 103.6,344.1 C104.5,342.7 100.4,342.9 101.5,342.0 C102.6,341.0 108.6,340.6 110.4,338.4 C112.2,336.2 112.1,330.3 112.4,328.7 " stroke="#606060" stroke-width="5.6457030156758075" fill="none" stroke-linecap="round" opacity="0.7"/><path d="M122.1,305.5 C122.6,303.7 122.8,297.5 125.4,294.4 C128.1,291.3 133.6,289.4 137.9,286.9 C142.2,284.5 147.0,281.4 151.0,279.8 C155.1,278.3 160.4,278.1 162.3,277.8 " stroke="#ffffff" stroke-width="4.841288796529364" fill="none" stroke-linecap="round" opacity="0.9"/><path d="M86.4,381.3 C88.2,380.0 94.4,375.5 97.0,373.8 C99.7,372.0 99.4,372.9 102.2,370.7 C105.0,368.5 109.8,362.9 113.6,360.5 C117.4,358.0 123.1,356.7 125.0,355.9 " stroke="#606060" stroke-width="3.3836689182884485" fill="none" stroke-linecap="round" opacity="0.7"/><path d="M135.5,293.6 C136.0,293.7 135.9,294.1 138.6,294.5 C141.4,294.8 148.4,296.7 152.0,295.8 C155.5,294.9 157.5,290.5 160.0,289.1 C162.4,287.7 165.7,287.7 166.9,287.4 " stroke="#ffffff" stroke-width="4.1144573652730365" fill="none" stroke-linecap="round" opacity="0.9"/><path d="M141.0,276.1 C142.4,274.8 145.8,270.3 149.4,268.3 C152.9,266.3 158.1,265.0 162.3,264.0 C166.4,263.1 171.2,262.8 174.2,262.6 C177.3,262.5 179.4,263.1 180.4,263.2 " stroke="#606060" stroke-width="3.324121006713451" fill="none" stroke-linecap="round" opacity="0.7"/></g><path d="M160.1,219.3 C161.2,218.9 165.0,218.7 166.8,217.2 C168.6,215.7 169.3,212.0 170.9,210.5 C172.5,208.9 175.5,208.3 176.4,207.8 " stroke="#2c2c2c" stroke-width="2.112489732230213" fill="none" stroke-linecap="round" opacity="0.85"/><path d="M130.7,287.9 C131.9,287.2 135.9,284.3 137.8,283.4 C139.6,282.5 139.3,283.6 141.7,282.5 C144.0,281.4 150.2,277.8 151.9,276.8 " stroke="#484848" stroke-width="1.6299462409694883" fill="none" stroke-linecap="round" opacity="0.85"/><path d="M79.8,322.9 C80.7,322.7 82.9,322.4 85.2,321.8 C87.6,321.1 90.8,320.3 93.7,319.2 C96.6,318.1 101.4,315.8 102.9,315.1 " stroke="#484848" stroke-width="2.0675116952510106" fill="none" stroke-linecap="round" opacity="0.85"/><path d="M100.3,232.7 C100.7,232.5 101.7,231.9 102.8,231.6 C103.8,231.2 104.7,230.7 106.4,230.7 C108.2,230.7 112.2,231.6 113.4,231.7 " stroke="#101010" stroke-width="1.0150393226195715" fill="none" stroke-linecap="round" opacity="0.85"/><path d="M136.2,349.1 C137.0,347.3 139.3,340.5 140.7,338.3 C142.1,336.1 142.9,337.6 144.5,335.8 C146.2,333.9 149.4,328.6 150.4,327.2 " stroke="#101010" stroke-width="1.8569022642195194" fill="none" stroke-linecap="round" opacity="0.85"/><path d="M135.2,307.9 C135.9,307.7 137.8,307.5 139.1,306.6 C140.4,305.7 141.8,303.2 143.1,302.3 C144.4,301.4 146.5,301.2 147.1,301.0 " stroke="#1a1a1a" stroke-width="1.5259959965261283" fill="none" stroke-linecap="round" opacity="0.85"/><path d="M151.7,329.7 C153.0,330.1 155.7,331.9 159.4,332.1 C163.0,332.3 170.3,331.3 173.6,330.8 C176.9,330.4 178.4,329.6 179.3,329.4 " stroke="#101010" stroke-width="1.2289088065381717" fill="none" stroke-linecap="round" opacity="0.85"/><path d="M131.0,248.7 C131.1,247.8 130.5,244.8 131.4,243.0 C132.2,241.3 135.2,239.4 136.2,238.3 C137.1,237.2 136.9,236.7 137.1,236.4 " stroke="#484848" stroke-width="1.933084621064204" fill="none" stroke-linecap="round" opacity="0.85"/><path d="M132.4,335.1 C133.0,334.4 135.9,332.7 136.2,331.3 C136.6,329.9 134.1,328.0 134.4,326.7 C134.6,325.3 137.2,324.0 137.7,323.5 " stroke="#484848" stroke-width="1.349667305207978" fill="none" stroke-linecap="round" opacity="0.85"/><path d="M102.6,367.8 C103.8,366.8 107.2,363.9 109.7,361.8 C112.2,359.8 114.4,356.9 117.4,355.6 C120.5,354.3 126.3,354.4 128.1,354.1 " stroke="#1a1a1a" stroke-width="1.6218481951350325" fill="none" stroke-linecap="round" opacity="0.85"/><path d="M147.3,284.1 C149.2,283.4 155.7,280.7 158.6,279.9 C161.5,279.0 161.8,279.6 164.6,278.9 C167.4,278.3 173.5,276.4 175.3,275.9 " stroke="#484848" stroke-width="1.9919064985778627" fill="none" stroke-linecap="round" opacity="0.85"/><path d="M151.7,280.4 C152.7,279.7 156.1,277.3 157.8,276.4 C159.5,275.5 160.5,275.2 161.9,275.1 C163.3,275.0 165.4,275.8 166.1,276.0 " stroke="#1a1a1a" stroke-width="0.9212503111481881" fill="none" stroke-linecap="round" opacity="0.85"/><path d="M52.4,334.0 C52.7,332.9 53.0,328.7 54.2,327.4 C55.3,326.2 57.5,327.6 59.3,326.7 C61.1,325.7 64.0,322.6 64.9,321.8 " stroke="#1a1a1a" stroke-width="1.7207729317049107" fill="none" stroke-linecap="round" opacity="0.85"/><path d="M59.2,268.8 C59.9,268.8 62.0,269.2 63.6,268.7 C65.2,268.3 66.9,267.5 68.8,265.9 C70.7,264.2 74.0,260.1 75.1,259.0 " stroke="#484848" stroke-width="1.6597301557005788" fill="none" stroke-linecap="round" opacity="0.85"/><path d="M69.1,348.4 C71.1,348.4 77.9,348.7 81.3,348.5 C84.6,348.3 86.3,347.4 89.2,347.2 C92.1,346.9 97.1,346.9 98.7,346.9 " stroke="#1a1a1a" stroke-width="2.0905215973296336" fill="none" stroke-linecap="round" opacity="0.85"/><path d="M126.8,304.3 C127.8,304.7 129.8,307.0 132.8,306.9 C135.8,306.7 141.9,303.7 144.9,303.2 C147.8,302.7 149.4,303.9 150.3,304.1 " stroke="#2c2c2c" stroke-width="0.9917306056973276" fill="none" stroke-linecap="round" opacity="0.85"/><path d="M73.3,354.2 C74.6,353.2 79.2,348.5 81.2,348.1 C83.3,347.7 83.7,351.8 85.5,351.9 C87.4,351.9 91.2,348.8 92.3,348.2 " stroke="#101010" stroke-width="1.1366009752419135" fill="none" stroke-linecap="round" opacity="0.85"/><path d="M130.3,268.1 C131.1,267.4 133.8,264.9 135.2,263.7 C136.5,262.4 137.9,262.3 138.5,260.8 C139.1,259.2 138.8,255.5 138.8,254.4 " stroke="#2c2c2c" stroke-width="1.2310773009589966" fill="none" stroke-linecap="round" opacity="0.85"/><path d="M147.7,228.9 C148.5,228.3 150.1,225.7 152.2,225.5 C154.2,225.2 157.5,227.2 160.1,227.3 C162.8,227.4 166.8,226.2 168.2,225.9 " stroke="#484848" stroke-width="1.6730862240777888" fill="none" stroke-linecap="round" opacity="0.85"/><path d="M132.9,289.6 C133.9,289.5 137.0,289.5 139.2,289.1 C141.3,288.7 143.2,287.5 145.6,287.1 C148.1,286.7 152.5,286.7 153.9,286.6 " stroke="#1a1a1a" stroke-width="1.1754116277764477" fill="none" stroke-linecap="round" opacity="0.85"/><path d="M102.5,355.2 C103.8,354.8 108.0,354.2 110.6,352.5 C113.2,350.8 115.8,347.8 117.9,345.1 C120.0,342.4 122.1,337.8 123.0,336.3 " stroke="#101010" stroke-width="1.6695462647040722" fill="none" stroke-linecap="round" opacity="0.85"/><path d="M147.6,246.0 C149.1,245.9 155.2,245.8 157.0,245.4 C158.9,245.0 158.2,243.9 158.9,243.6 C159.7,243.2 161.1,243.3 161.5,243.3 " stroke="#484848" stroke-width="1.4663085634634143" fill="none" stroke-linecap="round" opacity="0.85"/><path d="M56.7,313.0 L63.6,314.5 L73.2,315.9 L79.6,318.6 L86.8,322.1 L93.3,323.1 L100.4,325.1 L105.3,328.3 L107.6,331.9 L110.9,334.5 L111.8,338.2 L110.8,343.4 L108.9,347.9 L102.4,347.9 L95.8,348.4 L93.6,350.1 L86.2,349.6 L81.0,348.2 L74.5,344.1 L72.0,339.6 L67.3,336.6 L63.5,333.4 L60.8,324.5 L57.1,319.9Z" fill="#2c2c2c" opacity="0.95"/><path d="M93.0,334.7 L97.8,334.7 L103.4,334.4 L109.5,336.1 L115.0,340.3 L120.6,341.7 L127.2,345.7 L128.2,352.9 L127.3,362.0 L124.8,369.2 L119.0,372.1 L111.7,374.4 L102.7,376.9 L97.6,374.3 L92.2,371.7 L88.2,370.9 L86.3,365.1 L81.4,359.0 L79.0,350.6 L83.3,346.9 L86.6,340.4Z" fill="#9a9a9a" opacity="0.9"/><path d="M60.0,316.0 C62.0,315.7 67.3,313.7 72.0,314.0 C76.7,314.3 82.7,316.0 88.0,318.0 C93.3,320.0 101.3,324.7 104.0,326.0 " stroke="#e0e0e0" stroke-width="2.2" fill="none" stroke-linecap="round" opacity="0.95"/><path d="M66.0,338.0 C68.3,338.7 75.0,341.0 80.0,342.0 C85.0,343.0 91.3,344.3 96.0,344.0 C100.7,343.7 106.0,340.7 108.0,340.0 " stroke="#d0d0d0" stroke-width="1.6" fill="none" stroke-linecap="round" opacity="0.9"/><path d="M70.0,350.0 C72.3,351.0 79.7,353.3 84.0,356.0 C88.3,358.7 94.0,364.3 96.0,366.0 " stroke="#e8e8e8" stroke-width="2.2" fill="none" stroke-linecap="round" opacity="0.9"/><path d="M64.0,326.0 C66.7,326.7 74.3,328.7 80.0,330.0 C85.7,331.3 95.0,333.3 98.0,334.0 " stroke="#808080" stroke-width="1.2" fill="none" stroke-linecap="round" opacity="0.9"/><path d="M156.0,212.0 C153.3,213.7 145.2,219.3 140.0,222.0 C134.8,224.7 130.8,225.7 125.0,228.0 C119.2,230.3 108.3,234.7 105.0,236.0 " stroke="#3a3a3a" stroke-width="2" fill="none" stroke-linecap="round" opacity="0.9"/><path d="M150.0,245.0 C147.0,246.2 138.3,249.8 132.0,252.0 C125.7,254.2 118.7,255.7 112.0,258.0 C105.3,260.3 95.3,264.7 92.0,266.0 " stroke="#2a2a2a" stroke-width="2" fill="none" stroke-linecap="round" opacity="0.8"/><path d="M75.0,250.0 C75.5,253.3 78.5,263.3 78.0,270.0 C77.5,276.7 73.0,286.7 72.0,290.0 " stroke="#333" stroke-width="2" fill="none" stroke-linecap="round" opacity="0.8"/><path d="M111.7,233.0 L117.0,230.4 L122.3,228.0 L129.2,229.4 L130.7,230.3 L131.8,232.7 L134.5,236.5 L128.1,239.9 L124.0,240.4 L119.0,244.6 L113.2,242.7 L110.8,241.3 L105.8,243.5 L107.2,238.7 L111.3,236.5Z" fill="#6a0e0e" opacity="1"/><path d="M124.9,262.1 L131.4,257.2 L137.2,253.7 L142.5,250.4 L144.0,252.6 L147.7,255.6 L150.5,255.8 L145.6,261.2 L141.5,264.5 L138.6,269.5 L131.7,269.2 L126.3,269.8 L122.5,270.8 L123.8,266.5 L124.5,264.2Z" fill="#6a0e0e" opacity="1"/><path d="M127.7,264.8 L134.1,261.7 L139.4,261.2 L146.8,256.9 L147.6,259.5 L146.4,262.1 L148.8,262.9 L142.1,266.4 L136.4,269.8 L130.9,271.0 L127.8,268.7 L128.1,268.3Z" fill="#c81414" opacity="1"/><path d="M104.5,283.7 L108.2,281.5 L115.8,278.9 L119.3,276.8 L128.2,279.6 L133.0,280.3 L139.9,282.8 L139.5,289.2 L142.5,295.3 L141.7,301.5 L138.3,303.9 L135.9,309.6 L135.2,313.6 L127.0,315.7 L117.9,315.9 L111.2,314.9 L105.6,309.3 L102.5,306.2 L98.4,301.5 L101.0,295.5 L102.7,290.2Z" fill="#1c0c0c" opacity="1"/><path d="M106.1,298.4 L110.9,295.7 L114.3,294.3 L118.6,290.5 L124.2,293.8 L130.2,296.2 L133.8,300.6 L132.4,305.0 L130.1,306.9 L129.3,311.6 L123.5,311.4 L116.9,313.3 L110.5,314.0 L107.3,308.6 L108.1,304.0Z" fill="#1c5a1c" opacity="1"/><path d="M116.9,280.7 L122.8,281.8 L124.9,281.9 L130.7,280.4 L132.2,283.7 L132.2,285.2 L133.5,290.4 L129.0,289.6 L124.8,291.3 L123.5,292.7 L119.1,288.3 L119.9,284.0Z" fill="#6a0e0e" opacity="1"/><path d="M149.9,279.2 L151.8,282.3 L156.2,281.3 L159.0,285.2 L160.4,290.2 L160.3,294.1 L160.5,299.7 L160.7,305.6 L162.1,314.6 L161.0,319.3 L156.1,319.1 L153.3,318.2 L152.3,317.4 L150.1,311.4 L150.4,304.5 L149.0,300.4 L148.5,294.0 L147.1,287.8Z" fill="#c81414" opacity="0.9"/><path d="M127.3,311.7 L133.7,315.3 L138.5,316.1 L146.6,317.1 L150.5,320.3 L155.2,324.5 L160.2,326.5 L157.7,331.3 L156.3,331.4 L157.6,333.2 L150.3,332.4 L142.4,331.8 L138.0,331.4 L135.5,326.0 L130.3,324.2 L124.8,323.3 L125.4,318.7 L126.5,315.6Z" fill="#6a0e0e" opacity="1"/><path d="M100.0,323.0 C102.0,323.3 107.5,324.2 112.0,325.0 C116.5,325.8 124.5,327.5 127.0,328.0 " stroke="#2a8a2a" stroke-width="2.5" fill="none" stroke-linecap="round" opacity="1"/><path d="M85.1,337.1 L90.5,335.7 L96.3,336.2 L100.8,337.2 L103.1,341.2 L104.5,346.6 L106.0,351.2 L103.5,351.2 L100.7,354.6 L97.7,356.1 L92.6,353.2 L90.9,351.5 L85.0,350.9 L84.5,343.9 L84.6,339.7Z" fill="#c81414" opacity="0.95"/><path d="M106.6,353.3 L110.6,356.0 L113.9,355.6 L117.3,356.7 L117.8,359.5 L118.9,363.4 L120.2,367.8 L119.4,367.2 L114.1,369.7 L113.1,369.6 L110.2,364.1 L108.9,359.5Z" fill="#c81414" opacity="1"/><path d="M85.9,354.5 L87.6,355.8 L92.7,358.2 L94.6,356.4 L95.4,360.5 L97.9,364.8 L97.6,365.8 L95.9,366.2 L92.6,363.9 L88.7,365.0 L86.3,360.5 L87.4,357.8Z" fill="#6a0e0e" opacity="1"/><path d="M126.0,337.0 C128.3,337.5 135.0,338.8 140.0,340.0 C145.0,341.2 153.3,343.3 156.0,344.0 " stroke="#101010" stroke-width="2" fill="none" stroke-linecap="round" opacity="0.9"/><path d="M129.4,344.7 L137.9,345.7 L142.5,344.5 L149.8,342.5 L153.4,346.0 L155.0,351.4 L157.3,354.8 L157.3,356.7 L153.8,359.4 L151.4,361.6 L146.3,360.1 L141.2,358.7 L133.3,360.9 L131.3,356.7 L131.2,350.6Z" fill="#f4f4f4" opacity="0.9"/><path d="M152.6,354.7 L151.8,356.2 L156.1,357.2 L157.0,357.2 L158.8,358.6 L157.1,361.6 L158.1,363.5 L158.2,361.4 L154.1,364.4 L151.3,364.1 L152.7,361.3 L152.9,359.0Z" fill="#2a8a2a" opacity="1"/><path d="M86.0,238.0 C87.0,239.7 90.3,244.0 92.0,248.0 C93.7,252.0 95.3,259.7 96.0,262.0 " stroke="#2a8a2a" stroke-width="2" fill="none" stroke-linecap="round" opacity="0.9"/><path d="M140.0,209.0 C142.0,208.7 150.0,207.3 152.0,207.0 " stroke="#2a8a2a" stroke-width="2.5" fill="none" stroke-linecap="round" opacity="1"/><path d="M76.7,269.1 L81.5,266.3 L82.0,264.6 L86.1,263.2 L88.9,267.6 L87.9,272.1 L90.8,279.1 L86.5,279.7 L85.9,282.3 L81.1,285.6 L81.5,278.0 L79.2,273.3Z" fill="#1c5a1c" opacity="0.8"/></g><clipPath id="cbR1"><path d="M181.0,208.3 C182.5,207.3 185.8,206.8 188.1,207.0 C190.4,207.2 191.7,208.5 194.9,209.7 C198.2,211.0 203.3,213.1 207.5,214.5 C211.8,215.8 216.2,216.3 220.3,218.0 C224.4,219.7 228.0,222.6 232.1,224.8 C236.2,226.9 241.2,228.6 244.7,230.7 C248.1,232.8 250.4,234.9 252.9,237.4 C255.4,239.9 257.5,242.9 259.6,245.6 C261.7,248.4 263.1,251.2 265.3,253.8 C267.5,256.5 271.3,259.5 272.8,261.7 C274.3,263.9 273.5,265.3 274.2,267.2 C274.8,269.1 276.0,270.6 276.5,272.9 C277.0,275.2 277.7,278.5 277.3,281.1 C276.9,283.7 274.9,286.2 274.2,288.5 C273.6,290.9 273.9,292.8 273.2,295.0 C272.6,297.1 269.8,299.9 270.2,301.5 C270.6,303.2 273.9,303.7 275.7,304.8 C277.5,305.9 280.6,306.7 281.2,308.1 C281.8,309.5 280.3,312.0 279.2,313.3 C278.2,314.5 275.3,314.0 274.7,315.5 C274.1,317.0 275.3,320.1 275.8,322.3 C276.2,324.4 278.0,326.8 277.4,328.7 C276.8,330.6 273.7,332.2 271.9,333.7 C270.1,335.3 268.4,336.1 266.5,338.0 C264.7,339.8 262.2,342.2 260.7,344.8 C259.1,347.3 258.7,350.4 257.4,353.2 C256.0,356.0 253.9,358.5 252.8,361.7 C251.6,364.8 251.9,370.0 250.4,371.9 C248.9,373.7 245.9,371.9 243.8,372.9 C241.7,373.9 239.9,377.2 237.8,377.7 C235.6,378.2 233.2,376.1 230.7,375.8 C228.3,375.5 225.2,376.7 222.9,375.7 C220.6,374.8 218.8,372.2 216.9,370.4 C215.0,368.6 213.8,365.6 211.5,365.0 C209.1,364.4 205.5,365.9 202.8,367.1 C200.1,368.2 197.5,371.6 195.4,371.7 C193.2,371.8 191.9,368.5 189.9,367.6 C187.9,366.8 184.9,367.9 183.2,366.7 C181.6,365.5 181.2,362.2 179.8,360.4 C178.3,358.6 175.8,358.4 174.6,355.9 C173.3,353.4 172.9,348.8 172.5,345.3 C172.1,341.8 172.2,340.2 172.3,334.8 C172.4,329.4 172.4,320.3 173.1,313.0 C173.8,305.8 175.4,298.7 176.4,291.3 C177.3,284.0 178.2,276.3 178.6,268.8 C178.9,261.4 178.5,252.7 178.5,246.5 C178.5,240.4 178.9,236.7 178.7,232.0 C178.4,227.3 177.1,221.5 177.2,218.3 C177.3,215.2 178.6,214.8 179.2,213.1 C179.9,211.4 179.5,209.3 181.0,208.3 Z"/></clipPath><g clip-path="url(#cbR1)"><rect x="168.6" y="203.6" width="116.50000000000003" height="177.70000000000002" fill="url(#bg1)"/><g filter="url(#soft)"><path d="M272.3,197.1 C272.9,198.7 274.6,204.0 275.9,206.7 C277.2,209.5 279.6,212.6 280.2,213.6 C280.8,214.6 278.4,212.1 279.7,212.6 C281.0,213.1 286.5,215.8 287.9,216.4 " stroke="#ffffff" stroke-width="3.789942771442382" fill="none" stroke-linecap="round" opacity="0.9"/><path d="M181.8,339.2 C183.3,339.7 188.3,340.1 190.8,342.3 C193.3,344.5 195.4,349.2 197.0,352.5 C198.7,355.9 198.6,359.3 200.7,362.4 C202.8,365.5 208.2,369.7 209.7,371.2 " stroke="#606060" stroke-width="5.790652104333619" fill="none" stroke-linecap="round" opacity="0.7"/><path d="M227.2,260.3 C227.8,260.9 228.9,260.4 231.1,263.7 C233.2,266.9 236.6,275.8 240.0,279.9 C243.5,283.9 249.2,285.2 251.9,287.9 C254.6,290.6 255.6,294.6 256.3,295.9 " stroke="#ffffff" stroke-width="5.6611941946050335" fill="none" stroke-linecap="round" opacity="0.9"/><path d="M169.2,226.9 C170.0,226.9 172.2,226.3 174.1,226.9 C176.1,227.6 178.1,231.1 180.9,230.9 C183.6,230.7 187.8,225.7 190.8,225.6 C193.8,225.6 197.6,229.9 198.9,230.8 " stroke="#606060" stroke-width="3.9548026931336153" fill="none" stroke-linecap="round" opacity="0.7"/><path d="M264.1,262.1 C264.3,261.6 264.5,258.8 265.6,259.1 C266.7,259.4 268.6,261.7 270.7,263.7 C272.9,265.6 276.5,269.8 278.5,270.6 C280.5,271.3 281.9,268.3 282.6,267.9 " stroke="#ffffff" stroke-width="3.124136510133946" fill="none" stroke-linecap="round" opacity="0.9"/><path d="M252.2,368.8 C253.0,367.8 253.9,363.0 257.3,362.9 C260.7,362.9 268.9,367.0 272.3,368.4 C275.8,369.9 275.4,370.9 277.9,371.5 C280.5,372.2 286.0,372.2 287.6,372.3 " stroke="#606060" stroke-width="3.7668751108257297" fill="none" stroke-linecap="round" opacity="0.7"/><path d="M162.3,201.2 C164.2,202.2 170.1,206.3 173.5,207.4 C176.9,208.5 179.2,206.4 182.6,207.6 C185.9,208.9 190.2,213.0 193.7,214.9 C197.1,216.8 201.9,218.3 203.5,219.0 " stroke="#ffffff" stroke-width="3.0451137697756616" fill="none" stroke-linecap="round" opacity="0.9"/><path d="M226.0,257.6 C228.5,258.3 237.2,260.1 240.9,261.8 C244.7,263.6 246.7,267.0 248.5,268.1 C250.3,269.3 249.6,267.5 251.9,268.7 C254.2,269.9 260.6,274.2 262.4,275.3 " stroke="#606060" stroke-width="4.020107230371092" fill="none" stroke-linecap="round" opacity="0.7"/><path d="M162.9,223.1 C164.6,223.8 169.9,225.5 173.1,227.3 C176.3,229.1 180.6,231.1 182.2,233.9 C183.7,236.6 180.3,240.5 182.3,243.8 C184.2,247.1 192.0,252.0 193.9,253.6 " stroke="#ffffff" stroke-width="4.452634012071865" fill="none" stroke-linecap="round" opacity="0.9"/><path d="M266.4,264.3 C266.8,265.8 267.8,271.7 268.8,273.5 C269.8,275.3 271.2,274.0 272.2,275.1 C273.2,276.2 274.0,279.4 274.8,280.2 C275.6,280.9 276.4,279.8 276.8,279.7 " stroke="#606060" stroke-width="4.6712819705872555" fill="none" stroke-linecap="round" opacity="0.7"/><path d="M211.9,220.0 C213.9,220.3 220.7,219.7 224.1,221.6 C227.4,223.4 229.7,229.6 232.0,231.2 C234.2,232.8 236.0,230.7 237.6,231.1 C239.2,231.4 241.0,233.0 241.7,233.3 " stroke="#ffffff" stroke-width="3.819021672542344" fill="none" stroke-linecap="round" opacity="0.9"/><path d="M271.5,197.9 C272.3,199.4 274.5,203.4 276.3,207.1 C278.1,210.8 280.3,217.0 282.4,220.2 C284.4,223.4 286.4,224.5 288.6,226.5 C290.8,228.6 294.6,231.5 295.8,232.4 " stroke="#606060" stroke-width="3.4711616101953586" fill="none" stroke-linecap="round" opacity="0.7"/><path d="M254.8,209.1 C255.6,209.9 257.8,212.3 259.7,213.6 C261.6,214.9 264.0,215.6 266.3,216.8 C268.7,218.1 271.2,220.2 273.6,221.3 C276.0,222.4 279.5,223.0 280.7,223.3 " stroke="#ffffff" stroke-width="5.774492124657926" fill="none" stroke-linecap="round" opacity="0.9"/><path d="M271.5,244.1 C271.8,244.5 271.2,245.5 273.1,246.5 C274.9,247.6 281.2,249.8 282.5,250.4 C283.8,251.0 280.8,248.9 281.1,250.1 C281.3,251.4 283.4,256.6 283.8,257.9 " stroke="#606060" stroke-width="5.366363419485558" fill="none" stroke-linecap="round" opacity="0.7"/><path d="M199.2,333.6 C201.0,334.7 207.1,337.5 209.7,339.9 C212.3,342.3 212.3,346.7 214.8,348.1 C217.2,349.5 221.8,348.2 224.4,348.5 C227.0,348.9 229.5,349.9 230.5,350.1 " stroke="#ffffff" stroke-width="5.281634164263318" fill="none" stroke-linecap="round" opacity="0.9"/><path d="M211.0,308.8 C212.4,309.0 216.3,307.8 219.5,310.0 C222.8,312.3 228.4,319.4 230.4,322.6 C232.5,325.8 229.7,327.8 232.0,329.2 C234.3,330.6 242.1,330.7 244.1,331.0 " stroke="#606060" stroke-width="4.725432029219459" fill="none" stroke-linecap="round" opacity="0.7"/><path d="M259.3,228.3 C261.3,228.6 268.8,229.6 271.4,230.3 C274.0,231.0 274.0,231.1 275.0,232.5 C276.0,233.9 275.5,236.8 277.3,238.6 C279.1,240.5 284.2,242.8 285.6,243.7 " stroke="#ffffff" stroke-width="4.409233703818661" fill="none" stroke-linecap="round" opacity="0.9"/><path d="M227.7,257.2 C228.4,259.5 230.1,267.8 232.1,271.1 C234.1,274.5 237.6,275.5 239.7,277.3 C241.9,279.0 242.8,278.7 245.1,281.6 C247.4,284.5 252.3,292.4 253.7,294.6 " stroke="#606060" stroke-width="3.683574882978749" fill="none" stroke-linecap="round" opacity="0.7"/><path d="M226.5,204.3 C227.8,205.7 231.7,210.8 234.2,213.1 C236.7,215.4 238.1,215.0 241.4,217.8 C244.7,220.7 251.5,227.6 254.0,230.2 C256.5,232.9 256.1,233.1 256.5,233.7 " stroke="#ffffff" stroke-width="4.976468374164331" fill="none" stroke-linecap="round" opacity="0.9"/><path d="M259.6,292.9 C260.9,294.0 265.4,297.4 267.4,299.4 C269.5,301.3 269.4,303.4 271.9,304.7 C274.5,306.0 279.0,305.5 282.5,307.1 C286.1,308.7 291.3,312.9 293.1,314.1 " stroke="#606060" stroke-width="4.770220726082994" fill="none" stroke-linecap="round" opacity="0.7"/><path d="M221.3,253.1 C221.6,254.3 220.1,258.7 223.1,260.5 C226.1,262.3 235.5,263.4 239.4,264.1 C243.3,264.7 244.6,263.0 246.6,264.3 C248.6,265.7 250.5,270.7 251.2,272.0 " stroke="#ffffff" stroke-width="4.309240694436576" fill="none" stroke-linecap="round" opacity="0.9"/><path d="M170.9,315.3 C171.9,314.6 174.6,310.7 176.9,310.8 C179.2,311.0 182.4,316.2 184.6,316.2 C186.9,316.2 187.9,310.8 190.5,311.1 C193.2,311.4 198.8,316.8 200.5,318.0 " stroke="#606060" stroke-width="5.649825957027925" fill="none" stroke-linecap="round" opacity="0.7"/></g><path d="M271.7,213.9 C272.3,214.2 273.8,215.2 275.3,215.7 C276.8,216.2 279.4,216.7 280.7,217.0 C282.0,217.4 282.8,217.7 283.2,217.9 " stroke="#1a1a1a" stroke-width="2.1758919986660983" fill="none" stroke-linecap="round" opacity="0.85"/><path d="M270.1,352.9 C271.2,354.0 274.8,356.6 276.9,359.4 C279.0,362.2 281.6,366.9 282.7,369.6 C283.9,372.4 283.7,375.0 283.8,376.1 " stroke="#101010" stroke-width="2.0402535464859795" fill="none" stroke-linecap="round" opacity="0.85"/><path d="M267.2,298.1 C268.3,297.2 271.4,292.8 273.6,292.8 C275.8,292.9 278.8,297.6 280.6,298.4 C282.4,299.2 283.7,297.7 284.3,297.5 " stroke="#101010" stroke-width="1.8510525669431424" fill="none" stroke-linecap="round" opacity="0.85"/><path d="M229.1,223.7 C230.1,224.8 232.9,227.5 235.2,230.2 C237.5,232.9 241.3,236.9 243.1,239.9 C244.9,242.9 245.5,246.7 246.0,248.1 " stroke="#101010" stroke-width="1.0766762016045606" fill="none" stroke-linecap="round" opacity="0.85"/><path d="M235.3,307.2 C235.6,308.5 235.5,311.6 237.0,314.6 C238.4,317.7 241.5,322.6 243.9,325.4 C246.4,328.2 250.3,330.3 251.5,331.3 " stroke="#484848" stroke-width="0.9726198665607604" fill="none" stroke-linecap="round" opacity="0.85"/><path d="M214.2,255.7 C215.9,257.2 222.1,262.5 224.5,264.6 C226.8,266.7 225.8,267.3 228.1,268.4 C230.4,269.6 236.7,270.7 238.4,271.2 " stroke="#1a1a1a" stroke-width="1.2603170192536692" fill="none" stroke-linecap="round" opacity="0.85"/><path d="M267.2,245.7 C267.0,246.0 265.6,246.5 266.1,247.2 C266.6,247.9 268.2,249.8 270.3,250.0 C272.3,250.3 277.1,248.9 278.5,248.7 " stroke="#484848" stroke-width="0.9233343060225733" fill="none" stroke-linecap="round" opacity="0.85"/><path d="M256.6,314.3 C256.7,314.2 256.5,312.9 257.2,313.8 C257.9,314.6 259.7,318.2 260.8,319.5 C262.0,320.9 263.4,321.6 263.9,322.0 " stroke="#101010" stroke-width="1.8212233053933244" fill="none" stroke-linecap="round" opacity="0.85"/><path d="M210.4,356.2 C210.7,356.8 210.8,358.3 212.1,359.7 C213.4,361.0 217.2,363.4 218.1,364.1 C219.0,364.8 217.5,363.9 217.3,363.9 " stroke="#1a1a1a" stroke-width="1.3037056042825865" fill="none" stroke-linecap="round" opacity="0.85"/><path d="M200.1,349.8 C200.9,350.0 203.6,349.0 205.2,350.7 C206.9,352.3 208.8,358.3 210.2,359.8 C211.6,361.3 213.2,359.8 213.7,359.8 " stroke="#2c2c2c" stroke-width="1.000207908558534" fill="none" stroke-linecap="round" opacity="0.85"/><path d="M182.7,361.4 C183.7,361.8 185.5,363.5 188.5,363.8 C191.5,364.1 198.1,362.6 200.8,363.2 C203.5,363.7 204.1,366.6 204.8,367.2 " stroke="#1a1a1a" stroke-width="0.978714479279903" fill="none" stroke-linecap="round" opacity="0.85"/><path d="M231.4,328.4 C232.5,329.2 235.9,330.9 237.9,332.8 C239.8,334.7 241.8,338.4 243.1,339.7 C244.4,341.1 245.4,340.7 245.8,340.9 " stroke="#1a1a1a" stroke-width="1.6950628666361176" fill="none" stroke-linecap="round" opacity="0.85"/><path d="M263.5,211.9 C264.0,212.2 264.9,214.1 266.4,213.7 C267.8,213.4 270.0,209.7 272.4,209.7 C274.7,209.7 279.1,213.2 280.5,213.9 " stroke="#101010" stroke-width="1.0721783154965496" fill="none" stroke-linecap="round" opacity="0.85"/><path d="M171.3,246.9 C171.1,247.2 169.2,247.6 170.0,248.7 C170.8,249.9 174.4,252.5 176.0,253.6 C177.5,254.7 178.8,255.1 179.4,255.4 " stroke="#1a1a1a" stroke-width="2.0070048167980876" fill="none" stroke-linecap="round" opacity="0.85"/><path d="M193.1,252.9 C193.5,252.6 193.7,251.2 195.3,251.2 C196.9,251.3 200.9,252.2 202.8,253.4 C204.7,254.6 206.1,257.6 206.8,258.5 " stroke="#1a1a1a" stroke-width="1.3885184624418139" fill="none" stroke-linecap="round" opacity="0.85"/><path d="M271.7,313.5 C272.5,314.0 275.3,315.8 276.1,316.6 C277.0,317.3 276.1,317.4 276.8,318.1 C277.6,318.8 280.0,320.2 280.6,320.6 " stroke="#2c2c2c" stroke-width="1.7062056496577895" fill="none" stroke-linecap="round" opacity="0.85"/><path d="M242.5,245.2 C243.3,245.4 246.0,244.8 247.4,246.0 C248.9,247.1 249.7,250.7 251.4,252.1 C253.0,253.6 256.4,254.1 257.4,254.5 " stroke="#2c2c2c" stroke-width="1.7042411742449233" fill="none" stroke-linecap="round" opacity="0.85"/><path d="M201.7,252.2 C203.2,253.0 208.4,256.1 210.5,257.1 C212.7,258.0 213.5,258.0 214.6,258.0 C215.7,258.0 216.8,257.3 217.3,257.2 " stroke="#2c2c2c" stroke-width="1.9178093106231735" fill="none" stroke-linecap="round" opacity="0.85"/><path d="M266.5,335.7 C267.6,337.0 271.4,341.7 272.9,343.4 C274.4,345.1 274.0,344.5 275.6,345.9 C277.2,347.3 281.1,351.0 282.3,352.0 " stroke="#1a1a1a" stroke-width="1.9411319202408697" fill="none" stroke-linecap="round" opacity="0.85"/><path d="M174.6,225.2 C175.0,226.0 175.3,228.6 176.7,230.0 C178.2,231.3 181.3,232.1 183.1,233.4 C184.9,234.8 186.7,237.4 187.5,238.2 " stroke="#1a1a1a" stroke-width="1.9187452799772076" fill="none" stroke-linecap="round" opacity="0.85"/><path d="M169.9,355.7 C170.0,356.0 169.3,356.9 170.4,357.1 C171.5,357.4 174.0,357.5 176.4,357.1 C178.9,356.8 183.7,355.5 185.2,355.1 " stroke="#1a1a1a" stroke-width="1.9750005183026245" fill="none" stroke-linecap="round" opacity="0.85"/><path d="M210.6,218.5 C210.8,219.8 210.6,224.6 212.2,226.3 C213.9,228.0 217.8,227.7 220.4,228.8 C223.1,229.9 226.7,232.3 228.0,233.0 " stroke="#484848" stroke-width="1.8635874253493447" fill="none" stroke-linecap="round" opacity="0.85"/><path d="M238.4,299.9 L247.5,299.5 L258.1,300.0 L270.4,300.3 L272.3,302.8 L278.2,305.6 L280.5,308.9 L279.0,316.3 L276.1,321.3 L275.9,328.7 L270.4,336.4 L267.6,339.4 L260.8,345.7 L257.0,344.0 L250.8,345.5 L243.7,343.8 L237.8,344.4 L233.0,341.1 L226.5,340.5 L230.5,326.8 L234.2,312.8Z" fill="#4a4a4a" opacity="0.95"/><path d="M226.5,339.4 L240.7,343.1 L252.0,344.5 L263.0,345.4 L258.3,354.7 L255.5,363.3 L250.2,372.7 L246.1,373.8 L238.5,375.7 L234.5,375.8 L226.9,373.4 L223.1,369.9 L216.1,365.0 L218.8,358.8 L224.3,349.4Z" fill="#a0a0a0" opacity="0.9"/><path d="M225.0,320.0 C228.3,318.7 238.8,314.3 245.0,312.0 C251.2,309.7 256.2,307.2 262.0,306.0 C267.8,304.8 277.0,305.2 280.0,305.0 " stroke="#111" stroke-width="2.2" fill="none" stroke-linecap="round" opacity="0.95"/><path d="M228.0,334.0 C231.3,333.0 241.7,330.0 248.0,328.0 C254.3,326.0 261.0,323.3 266.0,322.0 C271.0,320.7 276.0,320.3 278.0,320.0 " stroke="#1a1a1a" stroke-width="2" fill="none" stroke-linecap="round" opacity="0.9"/><path d="M232.0,348.0 C235.0,347.0 244.7,344.0 250.0,342.0 C255.3,340.0 261.7,337.0 264.0,336.0 " stroke="#e6e6e6" stroke-width="2.5" fill="none" stroke-linecap="round" opacity="0.9"/><path d="M236.0,360.0 C238.7,358.7 247.7,354.3 252.0,352.0 C256.3,349.7 260.3,347.0 262.0,346.0 " stroke="#222" stroke-width="1.8" fill="none" stroke-linecap="round" opacity="0.9"/><path d="M184.0,212.0 C187.5,212.7 197.3,213.3 205.0,216.0 C212.7,218.7 222.5,224.0 230.0,228.0 C237.5,232.0 246.7,238.0 250.0,240.0 " stroke="#111" stroke-width="3" fill="none" stroke-linecap="round" opacity="0.95"/><path d="M180.0,224.0 C183.3,225.3 193.3,228.7 200.0,232.0 C206.7,235.3 213.3,240.7 220.0,244.0 C226.7,247.3 236.7,250.7 240.0,252.0 " stroke="#1a1a1a" stroke-width="2.5" fill="none" stroke-linecap="round" opacity="0.9"/><path d="M196.0,210.0 C199.2,210.7 208.3,212.0 215.0,214.0 C221.7,216.0 228.8,218.0 236.0,222.0 C243.2,226.0 254.3,235.3 258.0,238.0 " stroke="#222" stroke-width="2" fill="none" stroke-linecap="round" opacity="0.9"/><path d="M264.0,248.0 C265.0,250.3 268.0,257.7 270.0,262.0 C272.0,266.3 275.0,272.0 276.0,274.0 " stroke="#222" stroke-width="2" fill="none" stroke-linecap="round" opacity="0.8"/><path d="M190.0,250.0 C192.5,252.0 200.8,258.7 205.0,262.0 C209.2,265.3 213.3,268.7 215.0,270.0 " stroke="#555" stroke-width="2.5" fill="none" stroke-linecap="round" opacity="0.8"/><path d="M219.3,236.5 L225.5,234.4 L230.9,233.6 L236.7,233.7 L242.5,238.1 L244.3,242.5 L249.4,245.2 L248.0,250.2 L244.9,249.9 L244.6,255.3 L237.6,252.7 L231.2,251.5 L226.5,251.3 L225.4,246.4 L220.8,241.9Z" fill="#1c5a1c" opacity="1"/><path d="M241.5,260.8 L245.5,262.5 L248.9,263.4 L252.2,262.1 L253.5,267.0 L257.5,271.9 L259.8,277.6 L259.7,281.5 L258.6,285.1 L256.5,290.0 L251.4,288.9 L249.6,284.8 L245.0,282.6 L242.2,278.1 L242.8,270.7Z" fill="#1c5a1c" opacity="1"/><path d="M262.5,262.8 L267.5,261.3 L270.1,264.1 L273.4,263.8 L273.5,269.5 L274.0,274.0 L274.1,276.5 L271.1,280.2 L268.8,280.6 L267.5,281.3 L265.2,273.3 L264.3,268.9Z" fill="#2a8a2a" opacity="1"/><path d="M241.7,254.5 L246.6,254.2 L254.2,255.0 L261.6,255.8 L264.2,260.0 L264.2,267.6 L266.6,270.5 L260.1,273.7 L255.4,272.4 L249.7,274.6 L246.0,267.2 L245.1,261.6Z" fill="#555" opacity="0.8"/><path d="M211.7,289.6 L219.5,286.0 L222.4,284.3 L231.5,284.6 L232.5,290.0 L237.9,294.0 L238.5,298.1 L237.8,301.2 L237.0,305.7 L237.2,309.6 L228.3,308.2 L222.6,308.0 L217.1,308.4 L215.4,300.3 L213.5,295.3Z" fill="#1c5a1c" opacity="1"/><path d="M210.6,307.7 L220.5,305.6 L229.5,304.4 L234.8,304.6 L238.9,307.5 L238.8,308.8 L239.1,310.6 L232.4,314.4 L225.9,317.6 L218.9,317.2 L217.0,316.1 L214.2,310.3Z" fill="#c81414" opacity="1"/><path d="M177.7,312.7 L184.6,312.4 L193.9,312.5 L200.0,313.5 L202.5,318.2 L203.8,322.5 L205.8,325.3 L204.8,330.4 L199.5,334.2 L198.6,336.8 L191.9,337.2 L185.0,337.3 L180.0,336.3 L179.1,329.0 L178.9,321.3Z" fill="#6a0e0e" opacity="1"/><path d="M181.5,315.3 L184.5,312.8 L189.3,313.6 L195.2,313.4 L193.3,317.0 L196.5,320.8 L197.3,325.8 L191.5,327.5 L187.8,326.1 L182.3,327.0 L182.8,324.2 L179.9,318.2Z" fill="#1c5a1c" opacity="1"/><path d="M185.5,269.5 L187.2,266.5 L187.8,268.3 L190.1,268.1 L189.8,275.2 L191.6,283.7 L191.5,291.3 L188.8,288.8 L187.2,289.6 L186.5,292.0 L186.1,282.4 L185.5,277.0Z" fill="#c81414" opacity="1"/><path d="M208.0,324.0 C210.3,323.7 217.0,322.8 222.0,322.0 C227.0,321.2 235.3,319.5 238.0,319.0 " stroke="#2a8a2a" stroke-width="2.5" fill="none" stroke-linecap="round" opacity="1"/><path d="M222.3,361.0 L228.2,357.7 L234.9,356.8 L239.4,356.5 L243.1,356.4 L243.8,360.1 L246.7,360.7 L243.4,366.1 L236.7,368.7 L230.6,371.4 L226.1,366.3 L224.9,362.8Z" fill="#c81414" opacity="1"/><path d="M195.3,343.4 L199.8,345.4 L203.4,343.6 L205.3,343.1 L204.4,348.0 L205.1,348.0 L204.9,352.9 L202.9,351.1 L199.3,352.1 L196.1,352.2 L197.7,350.2 L197.3,346.7Z" fill="#c81414" opacity="1"/><path d="M178.1,358.4 L181.5,359.0 L186.3,360.8 L191.0,361.2 L194.3,364.2 L194.5,364.6 L196.5,370.6 L191.9,367.9 L185.3,369.2 L179.2,369.4 L178.2,365.9 L177.8,362.1Z" fill="#2a8a2a" opacity="1"/></g><clipPath id="cbL2"><path d="M487.3,207.3 C485.2,206.4 481.9,209.0 479.1,209.8 C476.3,210.6 473.8,210.3 470.5,211.8 C467.2,213.3 463.3,216.7 459.3,218.6 C455.3,220.6 449.7,222.1 446.3,223.7 C442.9,225.3 441.6,226.7 438.8,228.2 C436.0,229.7 431.8,231.1 429.4,232.7 C426.9,234.3 425.8,236.0 424.1,237.8 C422.3,239.6 420.5,241.3 418.7,243.5 C417.0,245.6 415.1,248.0 413.5,250.5 C411.8,252.9 410.2,255.5 408.9,258.1 C407.7,260.8 406.8,263.4 406.2,266.3 C405.5,269.2 405.5,272.7 405.1,275.7 C404.8,278.6 404.2,281.1 403.9,284.0 C403.5,286.9 402.8,290.7 403.0,293.1 C403.2,295.5 404.3,296.8 404.9,298.6 C405.4,300.3 406.3,301.2 406.3,303.5 C406.3,305.9 404.9,309.8 404.7,312.9 C404.5,316.0 404.8,319.3 405.1,322.1 C405.3,324.8 405.3,326.8 406.1,329.3 C406.9,331.8 408.5,334.1 409.8,336.9 C411.2,339.7 412.7,342.9 414.2,346.2 C415.6,349.4 416.9,353.5 418.7,356.3 C420.4,359.2 422.1,361.4 424.6,363.3 C427.0,365.1 430.2,366.4 433.3,367.4 C436.4,368.3 439.9,368.1 443.0,369.1 C446.2,370.0 450.0,373.0 452.4,373.1 C454.9,373.3 456.1,370.9 457.9,370.0 C459.7,369.1 462.0,370.4 463.3,367.7 C464.7,364.9 465.1,358.3 466.0,353.5 C466.9,348.7 466.4,341.6 468.7,338.8 C471.0,335.9 476.1,337.2 479.8,336.4 C483.5,335.6 488.0,335.0 490.7,333.9 C493.5,332.9 494.3,331.4 496.1,330.1 C498.0,328.9 500.5,329.8 501.7,326.6 C502.8,323.4 503.0,316.1 503.1,310.9 C503.2,305.6 502.5,300.8 502.3,295.1 C502.0,289.4 502.1,282.8 501.7,276.7 C501.2,270.6 500.6,264.7 499.7,258.6 C498.8,252.6 497.3,246.5 496.2,240.6 C495.2,234.6 494.2,227.0 493.3,222.7 C492.5,218.5 492.4,217.4 491.4,214.9 C490.3,212.3 489.3,208.1 487.3,207.3 Z"/></clipPath><g clip-path="url(#cbL2)"><rect x="399.7" y="203.2" width="106.30000000000001" height="173.2" fill="url(#bg1)"/><g filter="url(#soft)"><path d="M484.3,249.7 C485.8,248.2 490.8,243.9 493.5,240.3 C496.3,236.8 498.7,232.0 501.0,228.2 C503.3,224.5 505.7,220.6 507.1,217.8 C508.6,215.0 509.4,212.5 509.8,211.5 " stroke="#ffffff" stroke-width="5.055781105156132" fill="none" stroke-linecap="round" opacity="0.9"/><path d="M484.4,343.2 C484.7,342.2 484.8,339.8 486.6,337.2 C488.4,334.7 492.6,331.0 495.2,327.7 C497.8,324.4 500.4,321.3 502.1,317.6 C503.9,313.9 505.3,307.3 505.9,305.2 " stroke="#606060" stroke-width="4.836973860892948" fill="none" stroke-linecap="round" opacity="0.7"/><path d="M417.7,382.1 C417.9,381.1 416.6,378.9 418.7,375.7 C420.9,372.5 428.1,365.7 430.4,362.7 C432.8,359.7 431.3,359.3 433.0,357.7 C434.7,356.0 439.1,353.7 440.4,353.0 " stroke="#ffffff" stroke-width="4.518839060163683" fill="none" stroke-linecap="round" opacity="0.9"/><path d="M431.5,284.0 C433.7,283.0 440.5,279.8 444.5,278.3 C448.4,276.8 451.9,276.4 455.3,275.2 C458.7,274.0 461.3,273.4 464.8,271.1 C468.2,268.8 474.3,263.0 476.2,261.4 " stroke="#606060" stroke-width="5.989452446484624" fill="none" stroke-linecap="round" opacity="0.7"/><path d="M424.2,294.3 C424.9,292.4 425.9,286.2 428.8,283.1 C431.8,280.1 438.6,278.2 441.8,275.9 C445.0,273.6 445.8,271.9 448.1,269.5 C450.4,267.1 454.2,263.0 455.4,261.7 " stroke="#ffffff" stroke-width="3.5737810010519224" fill="none" stroke-linecap="round" opacity="0.9"/><path d="M386.1,303.0 C387.5,302.2 390.4,298.5 394.3,297.9 C398.3,297.2 406.3,299.4 410.0,299.0 C413.6,298.6 413.7,297.0 416.4,295.5 C419.1,294.0 424.5,290.9 426.1,290.0 " stroke="#606060" stroke-width="4.753629467283291" fill="none" stroke-linecap="round" opacity="0.7"/><path d="M485.5,341.4 C487.1,340.9 492.3,340.1 495.0,338.8 C497.8,337.6 500.2,336.1 502.0,333.6 C503.8,331.1 502.8,326.7 505.7,323.8 C508.5,320.9 516.8,317.6 519.0,316.3 " stroke="#ffffff" stroke-width="3.514136365704588" fill="none" stroke-linecap="round" opacity="0.9"/><path d="M468.5,285.8 C467.9,284.9 465.0,281.3 465.2,280.7 C465.4,280.0 468.5,283.1 469.8,281.9 C471.0,280.6 471.7,275.0 472.7,273.2 C473.6,271.3 475.0,271.1 475.5,270.7 " stroke="#606060" stroke-width="3.623140083315154" fill="none" stroke-linecap="round" opacity="0.7"/><path d="M411.6,331.3 C414.6,330.6 425.3,327.2 429.2,326.7 C433.1,326.3 432.1,328.2 435.2,328.5 C438.2,328.9 443.3,329.4 447.7,328.8 C452.1,328.1 459.2,325.3 461.5,324.6 " stroke="#ffffff" stroke-width="3.7470541273645064" fill="none" stroke-linecap="round" opacity="0.9"/><path d="M414.0,271.8 C415.4,269.2 420.7,259.7 422.7,256.4 C424.8,253.1 425.6,254.4 426.4,252.0 C427.2,249.7 426.6,245.0 427.6,242.3 C428.5,239.6 431.5,236.9 432.3,235.8 " stroke="#606060" stroke-width="3.012206782743327" fill="none" stroke-linecap="round" opacity="0.7"/><path d="M453.0,370.4 C453.8,371.1 455.5,375.3 458.0,374.6 C460.6,373.9 466.1,366.9 468.4,366.1 C470.6,365.2 470.1,369.0 471.4,369.5 C472.7,370.0 475.5,369.2 476.3,369.1 " stroke="#ffffff" stroke-width="5.6792190362750015" fill="none" stroke-linecap="round" opacity="0.9"/><path d="M438.2,269.5 C439.6,269.9 443.3,272.0 446.6,271.9 C449.9,271.7 454.2,269.1 458.0,268.6 C461.7,268.0 466.6,269.8 469.0,268.7 C471.5,267.5 472.0,263.1 472.6,262.0 " stroke="#606060" stroke-width="5.622608316141756" fill="none" stroke-linecap="round" opacity="0.7"/><path d="M464.2,273.1 C465.5,272.9 469.4,271.5 471.8,271.8 C474.2,272.1 477.1,275.3 478.7,274.8 C480.4,274.3 479.2,270.2 481.6,268.8 C484.0,267.3 491.2,266.7 493.1,266.3 " stroke="#ffffff" stroke-width="4.581580355488682" fill="none" stroke-linecap="round" opacity="0.9"/><path d="M461.5,216.3 C462.3,215.0 463.4,209.7 465.9,208.8 C468.4,207.9 472.1,210.2 476.6,210.8 C481.1,211.5 489.1,213.0 492.7,212.7 C496.4,212.3 497.6,209.6 498.6,208.9 " stroke="#606060" stroke-width="5.219493528061256" fill="none" stroke-linecap="round" opacity="0.7"/><path d="M418.9,373.0 C420.3,372.1 424.6,368.9 427.3,367.6 C429.9,366.4 432.0,365.1 434.6,365.4 C437.3,365.7 439.7,370.2 443.2,369.4 C446.6,368.6 453.4,362.1 455.4,360.6 " stroke="#ffffff" stroke-width="3.948299246566113" fill="none" stroke-linecap="round" opacity="0.9"/><path d="M404.7,289.0 C405.3,288.8 407.0,289.0 408.2,287.7 C409.5,286.4 410.1,282.4 412.3,281.1 C414.5,279.8 419.7,282.1 421.3,279.9 C422.9,277.8 421.7,270.1 421.8,268.1 " stroke="#606060" stroke-width="5.8514096501460156" fill="none" stroke-linecap="round" opacity="0.7"/><path d="M445.4,251.7 C445.6,251.9 445.1,254.8 447.0,252.8 C448.9,250.9 455.0,242.2 456.8,240.1 C458.6,237.9 457.0,241.8 457.8,239.8 C458.6,237.9 461.0,230.2 461.6,228.3 " stroke="#ffffff" stroke-width="4.018942397969114" fill="none" stroke-linecap="round" opacity="0.9"/><path d="M427.5,363.1 C428.8,363.4 432.8,366.0 435.3,365.0 C437.8,364.0 440.6,359.6 442.5,357.2 C444.4,354.7 445.1,351.8 446.7,350.1 C448.4,348.5 451.4,347.6 452.4,347.1 " stroke="#606060" stroke-width="4.359810451127965" fill="none" stroke-linecap="round" opacity="0.7"/><path d="M465.6,250.9 C467.3,250.7 473.6,251.2 475.7,249.6 C477.9,247.9 476.3,242.5 478.6,241.0 C480.9,239.5 486.9,242.4 489.6,240.7 C492.2,239.0 493.7,232.3 494.6,230.6 " stroke="#ffffff" stroke-width="4.671343864115394" fill="none" stroke-linecap="round" opacity="0.9"/><path d="M405.4,275.5 C407.0,275.9 412.6,278.3 414.8,278.1 C417.0,277.9 415.9,275.3 418.7,274.5 C421.5,273.7 427.9,274.2 431.4,273.3 C434.9,272.3 438.4,269.7 439.8,269.0 " stroke="#606060" stroke-width="4.661742662819822" fill="none" stroke-linecap="round" opacity="0.7"/><path d="M421.0,353.6 C422.3,352.0 425.6,347.4 428.8,344.4 C432.0,341.4 437.2,337.9 440.4,335.4 C443.7,332.8 445.4,331.8 448.5,329.1 C451.6,326.4 457.2,320.9 458.9,319.3 " stroke="#ffffff" stroke-width="5.0412968585401465" fill="none" stroke-linecap="round" opacity="0.9"/><path d="M466.6,256.9 C466.5,256.0 464.1,254.1 465.7,251.8 C467.4,249.5 473.7,245.1 476.4,243.0 C479.0,240.9 481.1,241.5 481.6,239.2 C482.2,237.0 480.0,231.0 479.6,229.4 " stroke="#606060" stroke-width="4.11238369616227" fill="none" stroke-linecap="round" opacity="0.7"/></g><path d="M443.8,245.0 C444.6,244.2 447.0,242.7 448.5,240.4 C450.0,238.2 451.9,233.4 452.7,231.6 C453.6,229.7 453.7,229.7 453.9,229.3 " stroke="#101010" stroke-width="1.6984238874918978" fill="none" stroke-linecap="round" opacity="0.85"/><path d="M426.6,219.6 C428.5,218.5 435.6,215.0 438.0,213.1 C440.4,211.2 438.3,210.6 441.1,208.3 C443.8,206.0 452.3,200.9 454.5,199.4 " stroke="#2c2c2c" stroke-width="1.6983137937514377" fill="none" stroke-linecap="round" opacity="0.85"/><path d="M421.4,331.0 C422.4,330.3 425.6,327.4 427.4,326.7 C429.3,326.0 431.3,327.6 432.5,326.6 C433.6,325.7 434.1,322.1 434.4,321.1 " stroke="#484848" stroke-width="0.9957336453251852" fill="none" stroke-linecap="round" opacity="0.85"/><path d="M458.8,355.9 C459.1,354.8 459.0,351.1 460.4,349.0 C461.9,347.0 465.5,345.0 467.6,343.8 C469.6,342.5 472.0,342.0 472.9,341.6 " stroke="#1a1a1a" stroke-width="1.4913220920282533" fill="none" stroke-linecap="round" opacity="0.85"/><path d="M417.1,219.3 C417.5,218.0 418.4,213.2 419.3,211.6 C420.2,210.0 421.7,211.2 422.4,209.4 C423.1,207.6 423.4,202.2 423.6,200.8 " stroke="#484848" stroke-width="2.166143291358564" fill="none" stroke-linecap="round" opacity="0.85"/><path d="M411.8,289.5 C412.2,288.4 412.6,285.4 414.3,283.1 C416.0,280.8 420.2,278.5 422.0,275.8 C423.8,273.0 424.4,268.1 424.9,266.6 " stroke="#484848" stroke-width="1.146423665677576" fill="none" stroke-linecap="round" opacity="0.85"/><path d="M421.6,334.3 C421.6,333.8 420.8,332.0 421.9,331.2 C423.0,330.4 427.6,331.1 428.2,329.4 C428.8,327.8 425.9,322.8 425.4,321.5 " stroke="#1a1a1a" stroke-width="1.915686852165242" fill="none" stroke-linecap="round" opacity="0.85"/><path d="M454.7,330.1 C456.2,329.6 461.0,329.4 463.4,327.3 C465.8,325.3 467.9,320.4 469.1,317.8 C470.3,315.2 470.3,312.8 470.6,311.8 " stroke="#101010" stroke-width="1.7693226359510448" fill="none" stroke-linecap="round" opacity="0.85"/><path d="M460.7,307.0 C461.5,305.8 463.4,300.9 465.5,299.4 C467.7,298.0 471.6,299.7 473.6,298.4 C475.7,297.1 477.2,292.9 477.9,291.8 " stroke="#2c2c2c" stroke-width="1.0451299075463747" fill="none" stroke-linecap="round" opacity="0.85"/><path d="M440.6,347.2 C441.0,345.6 442.0,340.9 443.0,337.7 C444.0,334.6 445.5,331.0 446.7,328.2 C447.9,325.5 449.6,322.5 450.2,321.3 " stroke="#2c2c2c" stroke-width="1.2433694605395393" fill="none" stroke-linecap="round" opacity="0.85"/><path d="M427.4,224.7 C428.1,224.8 429.5,226.2 431.1,225.3 C432.7,224.4 434.1,220.8 436.8,219.2 C439.5,217.5 445.5,215.9 447.3,215.3 " stroke="#101010" stroke-width="1.6540100483764664" fill="none" stroke-linecap="round" opacity="0.85"/><path d="M394.7,260.1 C396.5,259.5 403.1,256.8 405.1,256.3 C407.1,255.8 404.7,257.2 406.8,256.9 C408.8,256.6 415.6,254.8 417.3,254.4 " stroke="#1a1a1a" stroke-width="1.68121702446295" fill="none" stroke-linecap="round" opacity="0.85"/><path d="M413.3,381.4 C413.9,380.6 416.0,378.6 417.2,376.7 C418.5,374.9 419.8,372.5 420.6,370.1 C421.5,367.7 422.0,363.6 422.3,362.3 " stroke="#2c2c2c" stroke-width="1.2512659346440376" fill="none" stroke-linecap="round" opacity="0.85"/><path d="M397.2,332.4 C399.0,332.3 405.1,331.5 408.0,331.4 C411.0,331.3 412.2,332.7 415.1,331.8 C418.0,330.9 423.8,327.1 425.5,326.2 " stroke="#484848" stroke-width="1.7513931297949699" fill="none" stroke-linecap="round" opacity="0.85"/><path d="M477.8,288.5 C478.6,288.5 481.6,289.7 482.8,288.6 C483.9,287.4 483.2,283.5 484.6,281.7 C486.1,279.9 490.5,278.5 491.6,277.8 " stroke="#484848" stroke-width="1.600057601153292" fill="none" stroke-linecap="round" opacity="0.85"/><path d="M491.8,312.0 C492.7,311.6 494.9,310.6 497.1,309.7 C499.3,308.9 502.6,308.3 504.8,306.9 C507.0,305.5 509.3,302.4 510.2,301.5 " stroke="#2c2c2c" stroke-width="2.154299083526648" fill="none" stroke-linecap="round" opacity="0.85"/><path d="M464.6,268.9 C466.1,268.7 471.5,268.9 473.5,267.7 C475.5,266.4 474.2,263.0 476.5,261.4 C478.8,259.8 485.3,258.6 487.1,258.1 " stroke="#484848" stroke-width="1.1358972257330862" fill="none" stroke-linecap="round" opacity="0.85"/><path d="M416.5,243.8 C417.8,244.3 422.1,247.1 424.0,246.7 C425.8,246.4 427.1,242.6 427.6,241.6 C428.2,240.7 427.5,241.0 427.5,240.9 " stroke="#1a1a1a" stroke-width="1.563163667915751" fill="none" stroke-linecap="round" opacity="0.85"/><path d="M455.1,228.7 C455.4,228.2 456.0,225.8 456.9,225.6 C457.8,225.4 458.5,227.6 460.4,227.3 C462.3,227.0 466.9,224.5 468.2,224.0 " stroke="#1a1a1a" stroke-width="1.6081180978592675" fill="none" stroke-linecap="round" opacity="0.85"/><path d="M465.4,249.2 C466.9,248.8 472.3,248.1 474.1,246.9 C475.9,245.7 475.1,243.2 476.3,242.1 C477.5,240.9 480.4,240.5 481.2,240.2 " stroke="#2c2c2c" stroke-width="1.2239562467060772" fill="none" stroke-linecap="round" opacity="0.85"/><path d="M488.0,222.8 C488.9,222.2 491.8,220.9 493.6,219.3 C495.4,217.6 498.0,214.4 499.1,212.7 C500.1,211.0 499.7,209.7 499.9,209.1 " stroke="#101010" stroke-width="1.6776767910926011" fill="none" stroke-linecap="round" opacity="0.85"/><path d="M402.8,371.1 C404.7,370.1 411.3,366.0 414.3,365.1 C417.2,364.1 418.0,366.5 420.5,365.3 C423.0,364.1 428.0,359.2 429.5,358.0 " stroke="#2c2c2c" stroke-width="1.0196253357883442" fill="none" stroke-linecap="round" opacity="0.85"/><path d="M440.3,221.0 L446.0,219.4 L454.6,217.4 L460.6,215.8 L461.7,221.5 L462.6,222.1 L461.8,226.0 L455.3,229.1 L451.2,229.2 L443.1,231.8 L442.7,228.0 L442.5,225.2Z" fill="#2a8a2a" opacity="1"/><path d="M470.9,208.1 L475.5,208.7 L479.6,208.6 L485.3,207.1 L486.1,207.3 L487.8,210.0 L489.6,212.7 L486.7,216.7 L482.0,217.7 L476.9,217.0 L473.6,213.6 L471.0,211.0Z" fill="#2a8a2a" opacity="1"/><path d="M460.9,223.4 L465.5,220.9 L471.5,218.0 L474.5,216.1 L476.7,220.0 L478.7,223.5 L481.4,224.8 L478.5,229.7 L472.7,232.5 L469.9,236.8 L468.1,235.7 L463.6,235.1 L460.6,235.3 L462.8,228.7 L460.5,227.1Z" fill="#2a8a2a" opacity="1"/><path d="M409.9,252.1 L413.2,247.1 L416.7,243.0 L420.8,239.5 L424.1,235.5 L428.9,236.9 L432.1,235.4 L432.1,238.8 L431.6,242.3 L428.7,244.8 L425.8,251.1 L418.3,254.5 L415.2,258.8 L412.6,258.2 L410.0,253.1Z" fill="#1c5a1c" opacity="1"/><path d="M451.6,244.5 L457.9,243.0 L460.0,240.4 L466.0,239.2 L467.5,240.9 L472.2,243.5 L475.1,247.5 L471.5,250.2 L469.1,252.6 L467.1,257.0 L462.4,258.3 L460.0,256.5 L454.3,257.2 L455.4,254.6 L452.1,249.1Z" fill="#1c5a1c" opacity="1"/><path d="M480.8,247.1 L482.6,247.5 L485.1,247.1 L490.8,245.4 L489.9,248.0 L491.0,253.7 L492.2,257.0 L488.3,256.9 L483.8,258.0 L481.9,258.3 L481.1,254.9 L482.1,250.3Z" fill="#1c5a1c" opacity="1"/><path d="M446.0,260.0 C447.5,259.8 452.0,258.8 455.0,259.0 C458.0,259.2 462.5,260.7 464.0,261.0 " stroke="#181818" stroke-width="3.5" fill="none" stroke-linecap="round" opacity="1"/><path d="M424.3,264.1 L427.3,262.1 L429.3,263.6 L434.3,262.6 L434.2,266.7 L435.9,273.5 L434.8,276.9 L433.8,280.6 L433.5,285.6 L432.2,288.9 L429.1,286.3 L427.9,286.4 L426.3,284.7 L423.6,277.6 L423.0,269.7Z" fill="#1c5a1c" opacity="1"/><path d="M442.8,286.4 L445.1,285.4 L448.4,284.1 L453.2,286.1 L453.6,288.9 L454.4,296.4 L452.6,299.2 L450.7,300.4 L448.9,303.4 L446.3,305.3 L445.3,298.7 L443.8,292.8Z" fill="#2a8a2a" opacity="1"/><path d="M469.9,277.9 L473.5,277.6 L477.3,276.6 L481.0,277.1 L481.7,284.1 L482.1,291.2 L483.1,296.6 L482.1,299.1 L479.5,302.4 L474.5,305.1 L473.2,303.8 L470.9,301.1 L469.4,298.5 L471.6,291.8 L471.3,284.9Z" fill="#1c5a1c" opacity="1"/><path d="M403.2,265.9 L407.5,265.1 L410.0,265.6 L414.8,262.4 L414.1,268.8 L414.6,273.5 L415.9,279.9 L414.4,283.7 L412.9,288.8 L411.4,290.5 L409.0,292.2 L406.0,289.4 L405.3,287.4 L404.7,280.5 L404.5,274.1Z" fill="#1c5a1c" opacity="1"/><path d="M441.0,312.0 C444.2,312.7 453.8,314.3 460.0,316.0 C466.2,317.7 473.0,320.3 478.0,322.0 C483.0,323.7 488.0,325.3 490.0,326.0 " stroke="#1c5a1c" stroke-width="4" fill="none" stroke-linecap="round" opacity="1"/><path d="M489.9,291.9 L491.7,293.1 L494.1,291.4 L496.3,291.9 L497.9,296.1 L496.8,299.0 L497.7,302.1 L495.8,302.7 L494.3,300.8 L492.0,301.8 L492.0,300.3 L492.3,297.5Z" fill="#c81414" opacity="1"/><path d="M492.0,300.0 C492.5,302.5 494.0,309.7 495.0,315.0 C496.0,320.3 497.5,329.2 498.0,332.0 " stroke="#6a0e0e" stroke-width="2" fill="none" stroke-linecap="round" opacity="0.9"/><path d="M415.0,320.0 C417.5,321.7 424.2,327.0 430.0,330.0 C435.8,333.0 444.0,336.0 450.0,338.0 C456.0,340.0 463.3,341.3 466.0,342.0 " stroke="#6a0e0e" stroke-width="3" fill="none" stroke-linecap="round" opacity="0.9"/><path d="M412.0,336.0 C414.7,337.3 422.5,340.8 428.0,344.0 C433.5,347.2 439.7,352.0 445.0,355.0 C450.3,358.0 457.5,360.8 460.0,362.0 " stroke="#6a0e0e" stroke-width="2.5" fill="none" stroke-linecap="round" opacity="0.9"/><path d="M444.6,328.1 L450.7,329.7 L455.2,330.7 L459.8,328.9 L460.6,334.8 L462.7,340.3 L462.2,347.1 L456.7,346.0 L454.4,346.7 L448.6,345.6 L449.1,338.8 L445.8,334.9Z" fill="#1c5a1c" opacity="0.9"/><path d="M420.0,350.0 C422.5,351.7 430.0,357.0 435.0,360.0 C440.0,363.0 447.5,366.7 450.0,368.0 " stroke="#222" stroke-width="2" fill="none" stroke-linecap="round" opacity="0.9"/><path d="M454.8,364.0 L457.5,363.1 L461.1,363.6 L462.7,363.1 L463.2,365.9 L460.6,368.2 L460.9,372.3 L460.5,372.0 L457.5,370.7 L454.4,372.4 L456.6,367.5 L454.3,366.8Z" fill="#c81414" opacity="1"/></g><clipPath id="cbR2"><path d="M514.1,211.0 C515.7,210.3 519.3,210.3 521.7,209.8 C524.1,209.3 525.3,207.3 528.4,208.0 C531.6,208.7 536.6,212.1 540.7,214.2 C544.7,216.3 549.2,218.7 552.8,220.8 C556.3,222.9 558.6,225.0 561.8,226.8 C565.0,228.7 569.1,229.5 572.0,232.0 C574.8,234.4 576.9,238.4 578.8,241.6 C580.7,244.9 581.5,249.4 583.5,251.5 C585.5,253.6 588.5,253.0 590.9,254.2 C593.2,255.4 596.5,256.4 597.7,258.5 C598.9,260.6 597.5,264.2 598.2,266.9 C598.9,269.6 601.4,272.0 601.9,274.8 C602.4,277.7 601.6,281.0 601.3,284.0 C601.0,287.1 600.4,290.6 600.2,293.1 C600.0,295.5 599.8,297.0 600.3,298.8 C600.8,300.5 603.4,301.3 603.4,303.6 C603.4,306.0 601.1,309.9 600.3,312.9 C599.5,315.9 598.9,318.8 598.8,321.7 C598.6,324.6 599.6,327.6 599.5,330.4 C599.5,333.1 599.8,335.8 598.5,338.3 C597.1,340.8 593.5,342.8 591.7,345.4 C589.8,347.9 589.5,351.2 587.6,353.6 C585.7,356.0 582.5,357.8 580.1,359.8 C577.7,361.7 575.6,363.9 573.1,365.1 C570.5,366.3 567.1,365.9 564.7,366.9 C562.3,367.9 560.4,370.7 558.6,371.0 C556.7,371.4 555.0,369.8 553.5,369.0 C551.9,368.3 551.0,368.9 549.4,366.5 C547.8,364.1 545.4,358.7 543.9,354.7 C542.4,350.7 542.4,344.9 540.3,342.5 C538.2,340.1 534.4,341.5 531.4,340.5 C528.5,339.5 524.9,337.5 522.5,336.4 C520.1,335.3 518.9,334.9 517.1,333.9 C515.3,332.9 513.1,332.6 511.7,330.4 C510.2,328.1 509.1,323.8 508.2,320.3 C507.4,316.9 507.0,314.4 506.6,309.5 C506.1,304.7 505.7,297.4 505.5,291.2 C505.3,285.0 505.2,278.9 505.3,272.6 C505.5,266.3 506.0,259.8 506.5,253.5 C507.1,247.3 508.0,239.8 508.5,235.2 C509.0,230.6 509.0,228.9 509.6,226.0 C510.1,223.1 511.3,220.1 511.7,218.0 C512.1,216.0 511.5,215.1 511.9,213.9 C512.3,212.7 512.4,211.6 514.1,211.0 Z"/></clipPath><g clip-path="url(#cbR2)"><rect x="501.8" y="204.7" width="104.99999999999994" height="170.3" fill="url(#bg1)"/><g filter="url(#soft)"><path d="M550.0,252.5 C550.6,254.3 552.8,261.1 553.8,263.1 C554.7,265.1 554.5,263.4 555.8,264.4 C557.1,265.4 558.6,267.5 561.3,269.2 C564.0,270.9 570.2,273.7 572.0,274.5 " stroke="#ffffff" stroke-width="4.823333357474243" fill="none" stroke-linecap="round" opacity="0.9"/><path d="M534.8,320.8 C536.2,321.5 541.7,323.6 543.2,324.9 C544.8,326.2 542.9,327.8 544.1,328.6 C545.3,329.5 548.6,329.6 550.5,330.2 C552.4,330.8 554.6,331.9 555.5,332.2 " stroke="#606060" stroke-width="5.358339417111051" fill="none" stroke-linecap="round" opacity="0.7"/><path d="M543.8,316.6 C544.8,318.2 548.7,323.4 550.2,326.3 C551.6,329.3 550.8,332.9 552.6,334.3 C554.5,335.7 559.1,333.2 561.4,334.6 C563.6,336.0 565.4,341.5 566.2,342.9 " stroke="#ffffff" stroke-width="3.207797718467717" fill="none" stroke-linecap="round" opacity="0.9"/><path d="M534.7,266.6 C535.0,267.8 534.5,271.5 536.4,273.7 C538.3,275.9 543.2,277.9 546.0,279.8 C548.7,281.7 551.3,284.3 552.8,285.2 C554.4,286.1 554.8,285.1 555.2,285.1 " stroke="#606060" stroke-width="5.9169214760149655" fill="none" stroke-linecap="round" opacity="0.7"/><path d="M498.2,352.1 C499.8,352.9 506.2,355.2 508.1,356.7 C510.0,358.1 509.4,360.2 509.7,360.7 C510.0,361.2 508.8,357.8 509.9,359.6 C510.9,361.4 514.9,369.5 515.9,371.5 " stroke="#ffffff" stroke-width="5.846831404534519" fill="none" stroke-linecap="round" opacity="0.9"/><path d="M537.1,203.2 C538.4,204.1 542.4,207.9 545.0,208.5 C547.7,209.2 550.0,207.1 552.8,207.0 C555.5,206.8 557.7,206.3 561.3,207.8 C564.9,209.4 572.3,214.7 574.5,216.0 " stroke="#606060" stroke-width="3.6052861780677725" fill="none" stroke-linecap="round" opacity="0.7"/><path d="M555.8,349.2 C556.7,349.6 559.0,351.3 561.0,351.4 C563.0,351.4 565.4,348.8 567.9,349.4 C570.4,350.1 574.3,354.4 576.0,355.1 C577.8,355.7 577.9,353.6 578.3,353.3 " stroke="#ffffff" stroke-width="3.88296343927753" fill="none" stroke-linecap="round" opacity="0.9"/><path d="M578.2,244.7 C580.0,245.9 586.5,250.1 588.7,251.4 C590.8,252.7 589.5,251.1 590.9,252.7 C592.3,254.2 594.4,257.7 596.8,260.6 C599.3,263.5 604.1,268.6 605.5,270.2 " stroke="#606060" stroke-width="3.9747110277056423" fill="none" stroke-linecap="round" opacity="0.7"/><path d="M582.9,353.9 C583.9,354.1 585.9,354.7 588.4,354.7 C591.0,354.7 596.4,352.9 598.2,353.9 C600.0,354.8 598.0,359.1 599.2,360.6 C600.4,362.1 604.3,362.5 605.3,362.9 " stroke="#ffffff" stroke-width="5.914284193359337" fill="none" stroke-linecap="round" opacity="0.9"/><path d="M534.9,254.7 C536.6,255.5 542.2,259.1 545.2,259.4 C548.1,259.6 550.7,255.5 552.5,256.2 C554.3,256.9 554.5,262.9 556.0,263.6 C557.5,264.2 560.4,260.5 561.3,259.9 " stroke="#606060" stroke-width="5.453789721929724" fill="none" stroke-linecap="round" opacity="0.7"/><path d="M515.9,235.0 C516.7,236.1 518.6,239.5 521.0,241.4 C523.3,243.3 527.2,245.9 529.9,246.5 C532.6,247.1 536.1,243.5 537.3,245.3 C538.4,247.0 536.9,254.9 536.9,256.8 " stroke="#ffffff" stroke-width="5.394099245296218" fill="none" stroke-linecap="round" opacity="0.9"/><path d="M568.7,244.9 C569.2,244.9 569.4,245.4 571.5,245.1 C573.6,244.8 579.5,242.6 581.4,243.1 C583.4,243.6 581.1,247.2 583.4,248.2 C585.7,249.2 593.3,249.0 595.2,249.1 " stroke="#606060" stroke-width="5.228232720980358" fill="none" stroke-linecap="round" opacity="0.7"/><path d="M516.4,307.7 C518.5,308.7 524.6,313.0 529.1,313.8 C533.6,314.6 540.5,311.7 543.7,312.3 C546.9,312.9 544.4,314.9 548.3,317.2 C552.1,319.5 563.7,324.4 566.8,325.9 " stroke="#ffffff" stroke-width="5.11813906807985" fill="none" stroke-linecap="round" opacity="0.9"/><path d="M511.0,231.5 C512.6,232.5 518.0,235.4 520.8,237.1 C523.6,238.8 525.9,239.5 527.8,241.7 C529.8,243.9 530.5,248.6 532.5,250.2 C534.5,251.8 538.7,251.1 539.9,251.3 " stroke="#606060" stroke-width="5.625640986085427" fill="none" stroke-linecap="round" opacity="0.7"/><path d="M567.1,318.9 C569.1,319.8 575.2,323.3 578.9,324.3 C582.6,325.2 587.0,324.4 589.3,324.7 C591.6,325.0 589.7,324.7 592.7,325.9 C595.6,327.1 604.5,330.8 606.8,331.8 " stroke="#ffffff" stroke-width="4.928641483315649" fill="none" stroke-linecap="round" opacity="0.9"/><path d="M535.4,298.7 C536.1,299.0 538.6,299.5 539.6,300.6 C540.7,301.6 539.4,304.7 541.7,304.9 C543.9,305.0 551.2,301.8 553.0,301.5 C554.9,301.2 552.9,302.8 552.8,303.1 " stroke="#606060" stroke-width="3.3380368657495496" fill="none" stroke-linecap="round" opacity="0.7"/><path d="M584.2,210.2 C586.0,210.3 592.2,210.3 595.0,211.0 C597.8,211.8 599.4,213.8 601.1,214.8 C602.8,215.8 604.0,216.9 605.2,217.0 C606.4,217.2 607.7,215.9 608.2,215.7 " stroke="#ffffff" stroke-width="5.1787407081628976" fill="none" stroke-linecap="round" opacity="0.9"/><path d="M569.5,318.1 C570.5,318.6 574.7,319.3 575.7,321.0 C576.6,322.8 573.8,326.7 575.2,328.8 C576.7,330.8 583.2,331.8 584.4,333.3 C585.7,334.7 583.2,336.7 582.9,337.3 " stroke="#606060" stroke-width="3.623347407960589" fill="none" stroke-linecap="round" opacity="0.7"/><path d="M528.1,255.6 C528.7,256.4 530.3,258.5 531.9,260.0 C533.4,261.5 535.9,263.1 537.4,264.6 C538.9,266.1 539.1,266.7 540.8,269.0 C542.5,271.3 546.6,276.9 547.8,278.5 " stroke="#ffffff" stroke-width="3.7103886853240824" fill="none" stroke-linecap="round" opacity="0.9"/><path d="M533.3,288.9 C535.3,289.6 543.0,290.7 545.2,293.6 C547.5,296.5 545.3,302.6 546.7,306.2 C548.2,309.8 551.4,311.6 553.8,315.2 C556.2,318.7 559.9,325.4 561.1,327.5 " stroke="#606060" stroke-width="4.623110320435034" fill="none" stroke-linecap="round" opacity="0.7"/><path d="M483.3,269.2 C485.5,269.8 491.8,272.1 496.5,272.9 C501.3,273.7 507.2,272.5 511.8,273.9 C516.5,275.3 520.5,280.0 524.2,281.2 C528.0,282.4 532.6,281.2 534.3,281.2 " stroke="#ffffff" stroke-width="4.547252367757695" fill="none" stroke-linecap="round" opacity="0.9"/><path d="M513.9,320.8 C514.6,322.2 515.1,326.7 517.9,329.1 C520.8,331.6 528.8,334.4 531.1,335.4 C533.4,336.3 530.1,334.0 531.6,334.7 C533.1,335.3 538.6,338.7 540.0,339.5 " stroke="#606060" stroke-width="5.375309055668316" fill="none" stroke-linecap="round" opacity="0.7"/></g><path d="M521.6,263.2 C522.0,264.4 522.3,268.6 523.7,270.3 C525.0,272.0 528.1,272.5 529.7,273.5 C531.2,274.5 532.4,276.0 533.0,276.5 " stroke="#2c2c2c" stroke-width="1.8960026230903555" fill="none" stroke-linecap="round" opacity="0.85"/><path d="M509.8,313.0 C509.9,313.9 509.2,317.9 510.4,318.6 C511.6,319.3 515.4,316.1 517.0,317.0 C518.6,317.8 519.5,322.6 520.0,323.7 " stroke="#101010" stroke-width="0.9000468830935585" fill="none" stroke-linecap="round" opacity="0.85"/><path d="M580.3,207.6 C580.9,207.8 583.3,206.6 583.9,208.4 C584.4,210.1 583.2,216.5 583.5,218.2 C583.7,219.8 584.8,218.1 585.1,218.1 " stroke="#2c2c2c" stroke-width="1.533667652476022" fill="none" stroke-linecap="round" opacity="0.85"/><path d="M563.5,242.6 C563.6,244.2 563.6,249.8 564.3,252.5 C565.1,255.1 566.2,257.0 567.9,258.5 C569.6,260.1 573.4,261.2 574.5,261.8 " stroke="#2c2c2c" stroke-width="0.9359853425915909" fill="none" stroke-linecap="round" opacity="0.85"/><path d="M496.0,261.8 C497.5,262.4 502.2,263.7 505.3,265.2 C508.5,266.7 511.6,269.8 515.1,270.6 C518.6,271.4 524.5,270.1 526.4,269.9 " stroke="#1a1a1a" stroke-width="0.9264932159800384" fill="none" stroke-linecap="round" opacity="0.85"/><path d="M574.3,213.5 C575.4,213.6 579.6,213.3 580.7,214.3 C581.8,215.3 580.5,217.7 580.8,219.4 C581.2,221.0 582.6,223.3 582.9,224.1 " stroke="#1a1a1a" stroke-width="2.1779739868763404" fill="none" stroke-linecap="round" opacity="0.85"/><path d="M588.4,352.0 C590.2,352.4 596.4,354.6 598.9,354.5 C601.4,354.4 602.1,351.7 603.3,351.6 C604.6,351.4 605.9,353.4 606.4,353.7 " stroke="#2c2c2c" stroke-width="1.31800437452792" fill="none" stroke-linecap="round" opacity="0.85"/><path d="M577.8,226.7 C579.3,226.7 583.9,226.5 587.2,226.6 C590.6,226.7 595.6,226.5 598.0,227.0 C600.5,227.6 601.3,229.4 602.0,229.9 " stroke="#1a1a1a" stroke-width="2.187035707881697" fill="none" stroke-linecap="round" opacity="0.85"/><path d="M571.1,287.5 C572.2,289.0 575.8,293.7 577.9,296.6 C580.0,299.4 582.1,302.2 583.6,304.5 C585.0,306.8 586.1,309.5 586.6,310.6 " stroke="#101010" stroke-width="1.9376883891447672" fill="none" stroke-linecap="round" opacity="0.85"/><path d="M498.6,247.3 C499.1,248.1 499.5,249.9 501.5,252.3 C503.4,254.8 508.1,260.1 510.3,262.2 C512.5,264.2 514.0,264.3 514.7,264.7 " stroke="#2c2c2c" stroke-width="2.1340306822617574" fill="none" stroke-linecap="round" opacity="0.85"/><path d="M495.9,209.0 C497.2,209.9 500.2,213.3 503.3,214.4 C506.3,215.5 511.9,214.2 514.2,215.8 C516.5,217.5 516.6,222.8 517.0,224.2 " stroke="#2c2c2c" stroke-width="1.6579653476187337" fill="none" stroke-linecap="round" opacity="0.85"/><path d="M533.5,211.9 C534.4,212.5 537.6,213.9 539.2,215.5 C540.9,217.2 541.5,220.7 543.2,221.8 C545.0,222.9 548.8,222.3 550.0,222.4 " stroke="#2c2c2c" stroke-width="1.6759384351786033" fill="none" stroke-linecap="round" opacity="0.85"/><path d="M567.5,255.1 C568.6,255.5 571.7,256.8 574.2,257.5 C576.7,258.3 580.1,258.7 582.3,259.5 C584.5,260.3 586.7,262.0 587.5,262.5 " stroke="#2c2c2c" stroke-width="1.2872243748322378" fill="none" stroke-linecap="round" opacity="0.85"/><path d="M543.9,230.6 C544.6,231.0 546.8,231.4 548.2,233.1 C549.6,234.7 550.8,239.1 552.4,240.4 C554.1,241.7 557.2,240.8 558.2,240.9 " stroke="#2c2c2c" stroke-width="1.7083133821772942" fill="none" stroke-linecap="round" opacity="0.85"/><path d="M559.5,326.7 C560.3,326.8 562.3,327.0 564.2,327.1 C566.1,327.2 568.6,326.7 571.0,327.3 C573.4,328.0 577.3,330.6 578.6,331.2 " stroke="#2c2c2c" stroke-width="0.9303798508167648" fill="none" stroke-linecap="round" opacity="0.85"/><path d="M588.7,330.7 C590.6,331.3 597.8,334.1 600.3,334.5 C602.8,335.0 601.5,333.6 603.8,333.5 C606.1,333.4 612.2,334.0 613.9,334.1 " stroke="#1a1a1a" stroke-width="1.810660506640849" fill="none" stroke-linecap="round" opacity="0.85"/><path d="M564.7,256.0 C565.9,255.6 569.1,254.3 572.0,253.7 C574.9,253.2 579.2,252.3 582.3,252.6 C585.3,252.8 588.9,254.7 590.2,255.1 " stroke="#1a1a1a" stroke-width="1.1613111050940699" fill="none" stroke-linecap="round" opacity="0.85"/><path d="M535.8,273.5 C536.5,274.5 538.2,277.7 540.1,279.5 C542.0,281.3 545.0,282.1 547.0,284.5 C549.0,286.9 551.1,292.4 551.9,294.0 " stroke="#2c2c2c" stroke-width="1.4084999091985289" fill="none" stroke-linecap="round" opacity="0.85"/><path d="M538.9,237.5 C539.5,238.1 540.6,240.1 542.4,241.3 C544.1,242.5 547.8,242.8 549.4,244.7 C551.1,246.7 551.7,251.5 552.2,252.8 " stroke="#2c2c2c" stroke-width="1.3622167969682666" fill="none" stroke-linecap="round" opacity="0.85"/><path d="M516.4,239.9 C517.7,240.8 521.6,244.3 523.8,245.2 C526.0,246.0 528.1,244.6 529.6,244.9 C531.2,245.2 532.3,246.7 532.9,247.0 " stroke="#2c2c2c" stroke-width="1.8793609860346123" fill="none" stroke-linecap="round" opacity="0.85"/><path d="M550.0,210.2 C551.6,210.0 557.4,208.1 559.7,209.2 C561.9,210.4 560.7,215.8 563.4,217.1 C566.2,218.4 574.2,217.0 576.3,217.0 " stroke="#1a1a1a" stroke-width="2.050041123662651" fill="none" stroke-linecap="round" opacity="0.85"/><path d="M535.2,223.5 C536.6,224.9 542.2,229.9 543.9,232.0 C545.7,234.1 543.8,234.8 545.7,236.1 C547.6,237.3 553.8,238.9 555.4,239.5 " stroke="#484848" stroke-width="1.7745801262020136" fill="none" stroke-linecap="round" opacity="0.85"/><path d="M523.3,210.1 L531.7,210.5 L537.4,211.3 L547.3,211.9 L546.2,213.5 L550.2,217.9 L549.4,220.0 L543.9,219.4 L534.4,220.4 L528.3,219.0 L525.7,216.5 L525.5,212.3Z" fill="#2a8a2a" opacity="1"/><path d="M546.6,224.0 L551.1,225.0 L555.3,223.9 L563.2,225.5 L563.8,229.1 L566.3,234.8 L567.6,237.8 L564.4,240.0 L562.1,242.3 L561.2,241.4 L556.3,240.2 L551.2,237.5 L547.4,234.7 L545.8,230.6 L545.4,229.4Z" fill="#2a8a2a" opacity="1"/><path d="M568.5,235.1 L571.6,236.0 L577.8,235.7 L580.3,238.7 L579.1,239.8 L581.1,243.9 L581.6,248.1 L579.6,247.2 L576.4,247.3 L572.5,249.2 L569.7,244.8 L568.4,237.3Z" fill="#1c5a1c" opacity="1"/><path d="M514.3,224.3 L520.7,224.5 L523.6,224.1 L531.5,225.0 L531.0,226.2 L530.5,230.3 L529.8,232.7 L525.8,233.0 L521.9,232.9 L516.0,235.4 L515.7,230.7 L515.4,228.0Z" fill="#2a8a2a" opacity="1"/><path d="M516.2,251.6 L521.6,253.7 L526.4,253.2 L531.2,253.1 L532.0,256.7 L532.4,260.6 L532.7,264.6 L530.8,267.2 L523.7,267.2 L521.1,266.8 L517.6,261.4 L517.2,257.2Z" fill="#1c5a1c" opacity="1"/><path d="M533.6,252.2 L542.3,252.9 L549.3,251.2 L554.6,253.0 L555.8,255.7 L557.9,260.3 L557.5,264.0 L550.8,262.1 L545.0,264.9 L540.2,264.5 L536.8,260.2 L537.8,256.0Z" fill="#1c5a1c" opacity="1"/><path d="M565.0,262.0 C565.3,264.7 565.5,273.0 567.0,278.0 C568.5,283.0 571.8,289.3 574.0,292.0 C576.2,294.7 579.0,293.7 580.0,294.0 " stroke="#36b836" stroke-width="3" fill="none" stroke-linecap="round" opacity="0.95"/><path d="M577.7,264.5 L580.7,267.0 L586.5,265.5 L589.5,266.8 L590.4,274.9 L592.0,284.0 L595.2,290.4 L590.4,292.0 L589.2,293.3 L584.7,295.7 L583.0,292.7 L580.5,287.1 L577.5,283.0 L579.1,277.6 L575.9,270.3Z" fill="#1c5a1c" opacity="1"/><path d="M551.9,277.4 L557.0,280.0 L561.1,279.6 L565.2,281.1 L566.9,288.2 L567.3,294.7 L566.9,301.3 L564.1,298.8 L560.3,299.4 L554.4,298.6 L553.1,292.4 L554.4,285.6Z" fill="#2a8a2a" opacity="1"/><path d="M518.5,282.8 L524.4,283.8 L528.8,283.8 L537.1,284.5 L537.6,287.7 L536.6,296.3 L536.6,299.0 L531.7,298.6 L525.1,301.3 L520.5,300.5 L520.1,295.9 L517.5,288.6Z" fill="#2a8a2a" opacity="1"/><path d="M515.5,299.5 L525.2,299.5 L532.7,301.6 L539.8,300.3 L542.1,303.2 L542.8,306.3 L547.0,310.8 L545.2,315.3 L543.1,317.7 L541.6,321.5 L532.8,320.3 L525.9,321.3 L520.9,318.6 L519.9,314.7 L518.2,305.4Z" fill="#1c5a1c" opacity="1"/><path d="M517.0,320.0 C520.0,320.7 529.2,322.7 535.0,324.0 C540.8,325.3 549.2,327.3 552.0,328.0 " stroke="#2a8a2a" stroke-width="3" fill="none" stroke-linecap="round" opacity="1"/><path d="M536.1,329.4 L545.0,328.4 L551.9,329.6 L561.3,330.8 L560.6,333.2 L562.5,339.3 L563.4,343.6 L553.7,342.6 L548.1,343.7 L538.4,344.2 L538.4,340.0 L535.8,334.9Z" fill="#2a2a2a" opacity="0.9"/><path d="M545.0,320.0 C549.2,319.0 561.2,316.7 570.0,314.0 C578.8,311.3 593.3,305.7 598.0,304.0 " stroke="#333" stroke-width="2.5" fill="none" stroke-linecap="round" opacity="0.85"/><path d="M548.0,336.0 C552.0,335.0 563.7,332.3 572.0,330.0 C580.3,327.7 593.7,323.3 598.0,322.0 " stroke="#1a1a1a" stroke-width="2" fill="none" stroke-linecap="round" opacity="0.9"/><path d="M552.0,350.0 C555.8,349.3 568.0,348.0 575.0,346.0 C582.0,344.0 590.8,339.3 594.0,338.0 " stroke="#666" stroke-width="3" fill="none" stroke-linecap="round" opacity="0.8"/><path d="M561.3,351.1 L563.3,350.0 L566.2,350.8 L570.7,351.2 L569.7,352.2 L572.1,353.1 L570.1,357.1 L566.5,355.7 L564.0,357.4 L561.3,355.7 L560.0,354.4 L559.4,353.3Z" fill="#c81414" opacity="1"/><path d="M566.5,364.5 L569.8,362.8 L574.1,363.5 L577.1,361.7 L577.2,363.2 L577.1,366.3 L574.7,371.5 L574.0,370.0 L568.5,369.8 L566.0,370.9 L565.8,366.9 L568.6,367.2Z" fill="#c81414" opacity="1"/><path d="M510.0,277.0 C510.2,279.2 510.7,281.8 511.0,290.0 C511.3,298.2 511.8,320.0 512.0,326.0 " stroke="#6a0e0e" stroke-width="3" fill="none" stroke-linecap="round" opacity="0.9"/></g><g stroke="#cfcfcf" stroke-width="1.2"><line x1="60" y1="336.5" x2="82.5" y2="336.5"/><line x1="78.5" y1="332" x2="78.5" y2="341"/><line x1="60.4" y1="332" x2="60.4" y2="341"/><line x1="262" y1="336.5" x2="290" y2="336.5"/><line x1="276.4" y1="332" x2="276.4" y2="341"/><line x1="222" y1="336.5" x2="233" y2="336.5"/><line x1="227.5" y1="331" x2="227.5" y2="342"/></g></svg>
<svg width="977" height="621" style="left:0;top:0"><rect x="20" y="512" width="50.5" height="12" fill="#f0d262"/><rect x="70.5" y="512" width="4.0" height="12" fill="#f4e48a"/><rect x="74.5" y="512" width="6.5" height="12" fill="#8b6a3a"/><rect x="81" y="512" width="19.0" height="12" fill="#f8c062"/><rect x="100" y="512" width="4.5" height="12" fill="#a07040"/><rect x="104.5" y="512" width="10.5" height="12" fill="#e08850"/><rect x="115" y="512" width="26.0" height="12" fill="#f86868"/><rect x="141" y="512" width="50.0" height="12" fill="#f89a88"/><rect x="191" y="512" width="6.0" height="12" fill="#e040e0"/><rect x="197" y="512" width="4.0" height="12" fill="#c888e8"/><rect x="201" y="512" width="14.5" height="12" fill="#8060f0"/><rect x="215.5" y="512" width="5.5" height="12" fill="#c8b0f0"/><rect x="221" y="512" width="8.0" height="12" fill="#a8f0a0"/><rect x="229" y="512" width="14.0" height="12" fill="#b0e060"/><rect x="243" y="512" width="3.0" height="12" fill="#e8f0a0"/><rect x="246" y="512" width="12.3" height="12" fill="#3a9a20"/><rect x="258.3" y="512" width="12.7" height="12" fill="#30c8e8"/><rect x="271" y="512" width="7.3" height="12" fill="#30d0e0"/><rect x="278.3" y="512" width="14.7" height="12" fill="#30e8b0"/><rect x="293" y="512" width="23.0" height="12" fill="#3070e0"/><rect x="316" y="512" width="2.5" height="12" fill="#f8f8f8"/><rect x="20" y="512" width="298.5" height="1" fill="#ffffff" opacity="0.35"/><rect x="70" y="507" width="1" height="17" fill="#fff"/><rect x="74" y="507" width="1" height="17" fill="#fff"/><rect x="80" y="507" width="1" height="17" fill="#fff"/><rect x="100" y="507" width="1" height="17" fill="#fff"/><rect x="104" y="507" width="1" height="17" fill="#fff"/><rect x="114" y="507" width="1" height="17" fill="#fff"/><rect x="140" y="507" width="1" height="17" fill="#fff"/><rect x="190" y="507" width="1" height="17" fill="#fff"/><rect x="194" y="507" width="1" height="17" fill="#fff"/><rect x="196" y="507" width="1" height="17" fill="#fff"/><rect x="200" y="507" width="1" height="17" fill="#fff"/><rect x="215" y="507" width="1" height="17" fill="#fff"/><rect x="220" y="507" width="1" height="17" fill="#fff"/><rect x="224" y="507" width="1" height="17" fill="#fff"/><rect x="226" y="507" width="1" height="17" fill="#fff"/><rect x="242" y="507" width="1" height="17" fill="#fff"/><rect x="246" y="507" width="1" height="17" fill="#fff"/><rect x="258" y="507" width="1" height="17" fill="#fff"/><rect x="270" y="507" width="1" height="17" fill="#fff"/><rect x="275" y="507" width="1" height="17" fill="#fff"/><rect x="278" y="507" width="1" height="17" fill="#fff"/><rect x="292" y="507" width="1" height="17" fill="#fff"/><rect x="316" y="507" width="1" height="17" fill="#fff"/><rect x="20" y="524.3" width="298.5" height="11.7" fill="#140c06"/><rect x="20.0" y="524.3" width="2.0" height="11.7" fill="#201408"/><rect x="22.0" y="524.3" width="2.0" height="11.7" fill="#6a1010"/><rect x="24.0" y="524.3" width="1.0" height="11.7" fill="#9a1212"/><rect x="25.0" y="524.3" width="1.0" height="11.7" fill="#2a8a2a"/><rect x="26.0" y="524.3" width="1.0" height="11.7" fill="#201408"/><rect x="27.0" y="524.3" width="1.5" height="11.7" fill="#0a3a0a"/><rect x="28.5" y="524.3" width="1.5" height="11.7" fill="#2a8a2a"/><rect x="30.0" y="524.3" width="1.5" height="11.7" fill="#0a3a0a"/><rect x="31.5" y="524.3" width="2.0" height="11.7" fill="#0a3a0a"/><rect x="33.5" y="524.3" width="2.5" height="11.7" fill="#0a3a0a"/><rect x="36.0" y="524.3" width="1.5" height="11.7" fill="#2a8a2a"/><rect x="37.5" y="524.3" width="2.5" height="11.7" fill="#101808"/><rect x="40.0" y="524.3" width="2.5" height="11.7" fill="#2a8a2a"/><rect x="42.5" y="524.3" width="1.0" height="11.7" fill="#3a0808"/><rect x="43.5" y="524.3" width="1.0" height="11.7" fill="#2a8a2a"/><rect x="44.5" y="524.3" width="1.5" height="11.7" fill="#1a6a1a"/><rect x="46.0" y="524.3" width="1.5" height="11.7" fill="#2a8a2a"/><rect x="47.5" y="524.3" width="2.5" height="11.7" fill="#1a6a1a"/><rect x="50.0" y="524.3" width="3.0" height="11.7" fill="#1a6a1a"/><rect x="53.0" y="524.3" width="2.5" height="11.7" fill="#2a8a2a"/><rect x="55.5" y="524.3" width="1.5" height="11.7" fill="#1a6a1a"/><rect x="57.0" y="524.3" width="1.0" height="11.7" fill="#30b030"/><rect x="58.0" y="524.3" width="2.5" height="11.7" fill="#201408"/><rect x="60.5" y="524.3" width="1.5" height="11.7" fill="#101808"/><rect x="62.0" y="524.3" width="2.5" height="11.7" fill="#101808"/><rect x="64.5" y="524.3" width="2.0" height="11.7" fill="#101808"/><rect x="66.5" y="524.3" width="2.0" height="11.7" fill="#101808"/><rect x="68.5" y="524.3" width="1.5" height="11.7" fill="#0a3a0a"/><rect x="70.0" y="524.3" width="3.0" height="11.7" fill="#0a3a0a"/><rect x="73.0" y="524.3" width="1.0" height="11.7" fill="#3a0808"/><rect x="74.0" y="524.3" width="1.0" height="11.7" fill="#101808"/><rect x="75.0" y="524.3" width="2.0" height="11.7" fill="#d01414"/><rect x="77.0" y="524.3" width="2.0" height="11.7" fill="#d01414"/><rect x="79.0" y="524.3" width="1.0" height="11.7" fill="#3a0808"/><rect x="80.0" y="524.3" width="2.0" height="11.7" fill="#3a0808"/><rect x="82.0" y="524.3" width="2.0" height="11.7" fill="#3a0808"/><rect x="84.0" y="524.3" width="2.0" height="11.7" fill="#9a1212"/><rect x="86.0" y="524.3" width="3.0" height="11.7" fill="#3a0808"/><rect x="89.0" y="524.3" width="2.5" height="11.7" fill="#9a1212"/><rect x="91.5" y="524.3" width="2.0" height="11.7" fill="#6a1010"/><rect x="93.5" y="524.3" width="2.0" height="11.7" fill="#9a1212"/><rect x="95.5" y="524.3" width="2.5" height="11.7" fill="#ee1818"/><rect x="98.0" y="524.3" width="1.0" height="11.7" fill="#ee1818"/><rect x="99.0" y="524.3" width="2.0" height="11.7" fill="#9a1212"/><rect x="101.0" y="524.3" width="3.0" height="11.7" fill="#3a0808"/><rect x="104.0" y="524.3" width="3.0" height="11.7" fill="#d01414"/><rect x="107.0" y="524.3" width="3.0" height="11.7" fill="#9a1212"/><rect x="110.0" y="524.3" width="3.0" height="11.7" fill="#42d042"/><rect x="113.0" y="524.3" width="2.0" height="11.7" fill="#30b030"/><rect x="115.0" y="524.3" width="3.0" height="11.7" fill="#1a6a1a"/><rect x="118.0" y="524.3" width="2.0" height="11.7" fill="#1a6a1a"/><rect x="120.0" y="524.3" width="2.5" height="11.7" fill="#0a3a0a"/><rect x="122.5" y="524.3" width="1.0" height="11.7" fill="#1a6a1a"/><rect x="123.5" y="524.3" width="2.0" height="11.7" fill="#0a3a0a"/><rect x="125.5" y="524.3" width="1.5" height="11.7" fill="#1a6a1a"/><rect x="127.0" y="524.3" width="2.0" height="11.7" fill="#0a3a0a"/><rect x="129.0" y="524.3" width="2.0" height="11.7" fill="#1a6a1a"/><rect x="131.0" y="524.3" width="2.0" height="11.7" fill="#101808"/><rect x="133.0" y="524.3" width="2.0" height="11.7" fill="#101808"/><rect x="135.0" y="524.3" width="2.0" height="11.7" fill="#30b030"/><rect x="137.0" y="524.3" width="2.0" height="11.7" fill="#30b030"/><rect x="139.0" y="524.3" width="1.0" height="11.7" fill="#101808"/><rect x="140.0" y="524.3" width="1.5" height="11.7" fill="#201408"/><rect x="141.5" y="524.3" width="1.5" height="11.7" fill="#201408"/><rect x="143.0" y="524.3" width="1.5" height="11.7" fill="#201408"/><rect x="144.5" y="524.3" width="2.5" height="11.7" fill="#201408"/><rect x="147.0" y="524.3" width="2.0" height="11.7" fill="#201408"/><rect x="149.0" y="524.3" width="2.0" height="11.7" fill="#3a0808"/><rect x="151.0" y="524.3" width="2.5" height="11.7" fill="#3a0808"/><rect x="153.5" y="524.3" width="1.5" height="11.7" fill="#0a3a0a"/><rect x="155.0" y="524.3" width="2.5" height="11.7" fill="#1a6a1a"/><rect x="157.5" y="524.3" width="3.0" height="11.7" fill="#3a0808"/><rect x="160.5" y="524.3" width="1.0" height="11.7" fill="#101808"/><rect x="161.5" y="524.3" width="3.0" height="11.7" fill="#0a3a0a"/><rect x="164.5" y="524.3" width="2.0" height="11.7" fill="#101808"/><rect x="166.5" y="524.3" width="2.0" height="11.7" fill="#201408"/><rect x="168.5" y="524.3" width="3.0" height="11.7" fill="#101808"/><rect x="171.5" y="524.3" width="1.5" height="11.7" fill="#201408"/><rect x="173.0" y="524.3" width="1.5" height="11.7" fill="#101808"/><rect x="174.5" y="524.3" width="1.0" height="11.7" fill="#101808"/><rect x="175.5" y="524.3" width="1.0" height="11.7" fill="#201408"/><rect x="176.5" y="524.3" width="2.5" height="11.7" fill="#201408"/><rect x="179.0" y="524.3" width="1.0" height="11.7" fill="#1a6a1a"/><rect x="180.0" y="524.3" width="2.5" height="11.7" fill="#201408"/><rect x="182.5" y="524.3" width="1.5" height="11.7" fill="#3a0808"/><rect x="184.0" y="524.3" width="1.5" height="11.7" fill="#3a0808"/><rect x="185.5" y="524.3" width="2.0" height="11.7" fill="#3a0808"/><rect x="187.5" y="524.3" width="2.0" height="11.7" fill="#201408"/><rect x="189.5" y="524.3" width="2.0" height="11.7" fill="#1a6a1a"/><rect x="191.5" y="524.3" width="2.0" height="11.7" fill="#101808"/><rect x="193.5" y="524.3" width="2.0" height="11.7" fill="#201408"/><rect x="195.5" y="524.3" width="1.0" height="11.7" fill="#0a3a0a"/><rect x="196.5" y="524.3" width="3.0" height="11.7" fill="#101808"/><rect x="199.5" y="524.3" width="0.5" height="11.7" fill="#201408"/><rect x="200.0" y="524.3" width="1.0" height="11.7" fill="#6a1010"/><rect x="201.0" y="524.3" width="2.5" height="11.7" fill="#6a1010"/><rect x="203.5" y="524.3" width="3.0" height="11.7" fill="#9a1212"/><rect x="206.5" y="524.3" width="1.0" height="11.7" fill="#d01414"/><rect x="207.5" y="524.3" width="2.0" height="11.7" fill="#1a6a1a"/><rect x="209.5" y="524.3" width="1.0" height="11.7" fill="#d01414"/><rect x="210.5" y="524.3" width="2.0" height="11.7" fill="#9a1212"/><rect x="212.5" y="524.3" width="1.5" height="11.7" fill="#6a1010"/><rect x="214.0" y="524.3" width="1.5" height="11.7" fill="#9a1212"/><rect x="215.5" y="524.3" width="2.5" height="11.7" fill="#6a1010"/><rect x="218.0" y="524.3" width="1.5" height="11.7" fill="#2a8a2a"/><rect x="219.5" y="524.3" width="1.5" height="11.7" fill="#42d042"/><rect x="221.0" y="524.3" width="2.0" height="11.7" fill="#30b030"/><rect x="223.0" y="524.3" width="1.5" height="11.7" fill="#1a6a1a"/><rect x="224.5" y="524.3" width="2.0" height="11.7" fill="#1a6a1a"/><rect x="226.5" y="524.3" width="1.0" height="11.7" fill="#3a0808"/><rect x="227.5" y="524.3" width="2.0" height="11.7" fill="#2a8a2a"/><rect x="229.5" y="524.3" width="1.5" height="11.7" fill="#30b030"/><rect x="231.0" y="524.3" width="2.0" height="11.7" fill="#1a6a1a"/><rect x="233.0" y="524.3" width="3.0" height="11.7" fill="#3a0808"/><rect x="236.0" y="524.3" width="2.0" height="11.7" fill="#0a3a0a"/><rect x="238.0" y="524.3" width="1.0" height="11.7" fill="#1a6a1a"/><rect x="239.0" y="524.3" width="1.5" height="11.7" fill="#1a6a1a"/><rect x="240.5" y="524.3" width="2.0" height="11.7" fill="#2a8a2a"/><rect x="242.5" y="524.3" width="2.5" height="11.7" fill="#42d042"/><rect x="245.0" y="524.3" width="2.0" height="11.7" fill="#101808"/><rect x="247.0" y="524.3" width="2.0" height="11.7" fill="#30b030"/><rect x="249.0" y="524.3" width="1.0" height="11.7" fill="#42d042"/><rect x="250.0" y="524.3" width="1.0" height="11.7" fill="#6a1010"/><rect x="251.0" y="524.3" width="3.0" height="11.7" fill="#0a3a0a"/><rect x="254.0" y="524.3" width="2.0" height="11.7" fill="#6a1010"/><rect x="256.0" y="524.3" width="2.0" height="11.7" fill="#0a3a0a"/><rect x="258.0" y="524.3" width="2.0" height="11.7" fill="#201408"/><rect x="260.0" y="524.3" width="3.0" height="11.7" fill="#101808"/><rect x="263.0" y="524.3" width="2.0" height="11.7" fill="#0a3a0a"/><rect x="265.0" y="524.3" width="1.0" height="11.7" fill="#0a3a0a"/><rect x="266.0" y="524.3" width="1.5" height="11.7" fill="#1a6a1a"/><rect x="267.5" y="524.3" width="1.0" height="11.7" fill="#201408"/><rect x="268.5" y="524.3" width="2.0" height="11.7" fill="#0a3a0a"/><rect x="270.5" y="524.3" width="1.5" height="11.7" fill="#3a0808"/><rect x="272.0" y="524.3" width="2.5" height="11.7" fill="#1a6a1a"/><rect x="274.5" y="524.3" width="3.0" height="11.7" fill="#1a6a1a"/><rect x="277.5" y="524.3" width="1.5" height="11.7" fill="#3a0808"/><rect x="279.0" y="524.3" width="1.5" height="11.7" fill="#201408"/><rect x="280.5" y="524.3" width="1.5" height="11.7" fill="#3a0808"/><rect x="282.0" y="524.3" width="2.5" height="11.7" fill="#6a1010"/><rect x="284.5" y="524.3" width="1.5" height="11.7" fill="#2a8a2a"/><rect x="286.0" y="524.3" width="1.5" height="11.7" fill="#9a1212"/><rect x="287.5" y="524.3" width="1.5" height="11.7" fill="#0a3a0a"/><rect x="289.0" y="524.3" width="1.5" height="11.7" fill="#1a6a1a"/><rect x="290.5" y="524.3" width="1.5" height="11.7" fill="#6a1010"/><rect x="292.0" y="524.3" width="2.0" height="11.7" fill="#1a6a1a"/><rect x="294.0" y="524.3" width="2.0" height="11.7" fill="#9a1212"/><rect x="296.0" y="524.3" width="1.0" height="11.7" fill="#201408"/><rect x="297.0" y="524.3" width="2.0" height="11.7" fill="#201408"/><rect x="299.0" y="524.3" width="1.0" height="11.7" fill="#3a0808"/><rect x="300.0" y="524.3" width="2.5" height="11.7" fill="#1a6a1a"/><rect x="302.5" y="524.3" width="2.5" height="11.7" fill="#0a3a0a"/><rect x="305.0" y="524.3" width="1.5" height="11.7" fill="#2a8a2a"/><rect x="306.5" y="524.3" width="1.0" height="11.7" fill="#101808"/><rect x="307.5" y="524.3" width="1.5" height="11.7" fill="#2a8a2a"/><rect x="309.0" y="524.3" width="1.5" height="11.7" fill="#0a3a0a"/><rect x="310.5" y="524.3" width="1.5" height="11.7" fill="#2a8a2a"/><rect x="312.0" y="524.3" width="1.0" height="11.7" fill="#9a1212"/><rect x="313.0" y="524.3" width="2.0" height="11.7" fill="#d01414"/><rect x="315.0" y="524.3" width="2.5" height="11.7" fill="#9a1212"/><rect x="317.5" y="524.3" width="1.0" height="11.7" fill="#201408"/></svg>
<div class="t" style="left:-4.799999999999997px;top:502px;width:100px;text-align:center;color:#f4f4f4">FL</div>
<div class="t" style="left:40.3px;top:502px;width:100px;text-align:center;color:#f4f4f4">HiF</div>
<div class="t" style="left:78.4px;top:502px;width:100px;text-align:center;color:#f4f4f4">PL</div>
<div class="t" style="left:117px;top:502px;width:100px;text-align:center;color:#f4f4f4">TL</div>
<div class="t" style="left:159.6px;top:502px;width:100px;text-align:center;color:#f4f4f4">Str</div>
<div class="t" style="left:185.7px;top:502px;width:100px;text-align:center;color:#f4f4f4">DT</div>
<div class="t" style="left:255.3px;top:502px;width:100px;text-align:center;color:#f4f4f4">MY</div>
<div class="t" style="left:119.25px;top:537.8px;width:100px;text-align:center;color:#f4f4f4;width:160px;letter-spacing:-0.15px;left:89.2px">PDYN - CUST_653_PI417557136</div>
<svg width="977" height="621" style="left:0;top:0"><rect x="352" y="512" width="46.0" height="12" fill="#f0d262"/><rect x="398" y="512" width="1.5" height="12" fill="#f4e48a"/><rect x="399.5" y="512" width="8.5" height="12" fill="#8b6a3a"/><rect x="408" y="512" width="19.6" height="12" fill="#f8c062"/><rect x="427.6" y="512" width="2.4" height="12" fill="#b07848"/><rect x="430" y="512" width="15.0" height="12" fill="#e08850"/><rect x="445" y="512" width="19.5" height="12" fill="#f86868"/><rect x="464.5" y="512" width="28.5" height="12" fill="#f89a88"/><rect x="493" y="512" width="10.0" height="12" fill="#e040e0"/><rect x="503" y="512" width="4.0" height="12" fill="#c888e8"/><rect x="507" y="512" width="16.0" height="12" fill="#8060f0"/><rect x="523" y="512" width="5.0" height="12" fill="#c8b0f0"/><rect x="528" y="512" width="7.6" height="12" fill="#a8f0a0"/><rect x="535.6" y="512" width="21.4" height="12" fill="#b0e060"/><rect x="557" y="512" width="2.0" height="12" fill="#e8f0a0"/><rect x="559" y="512" width="7.0" height="12" fill="#f8f8f8"/><rect x="566" y="512" width="10.0" height="12" fill="#3a9a20"/><rect x="576" y="512" width="26.0" height="12" fill="#30c8e8"/><rect x="602" y="512" width="7.0" height="12" fill="#30d0e0"/><rect x="609" y="512" width="13.0" height="12" fill="#30e8b0"/><rect x="622" y="512" width="27.0" height="12" fill="#3070e0"/><rect x="649" y="512" width="1.5" height="12" fill="#f8f8f8"/><rect x="352" y="512" width="298.5" height="1" fill="#ffffff" opacity="0.35"/><rect x="398" y="507" width="1" height="17" fill="#fff"/><rect x="399" y="507" width="1" height="17" fill="#fff"/><rect x="408" y="507" width="1" height="17" fill="#fff"/><rect x="427" y="507" width="1" height="17" fill="#fff"/><rect x="429" y="507" width="1" height="17" fill="#fff"/><rect x="444" y="507" width="1" height="17" fill="#fff"/><rect x="464" y="507" width="1" height="17" fill="#fff"/><rect x="492" y="507" width="1" height="17" fill="#fff"/><rect x="500" y="507" width="1" height="17" fill="#fff"/><rect x="502" y="507" width="1" height="17" fill="#fff"/><rect x="506" y="507" width="1" height="17" fill="#fff"/><rect x="522" y="507" width="1" height="17" fill="#fff"/><rect x="528" y="507" width="1" height="17" fill="#fff"/><rect x="535" y="507" width="1" height="17" fill="#fff"/><rect x="556" y="507" width="1" height="17" fill="#fff"/><rect x="558" y="507" width="1" height="17" fill="#fff"/><rect x="566" y="507" width="1" height="17" fill="#fff"/><rect x="576" y="507" width="1" height="17" fill="#fff"/><rect x="602" y="507" width="1" height="17" fill="#fff"/><rect x="604" y="507" width="1" height="17" fill="#fff"/><rect x="608" y="507" width="1" height="17" fill="#fff"/><rect x="622" y="507" width="1" height="17" fill="#fff"/><rect x="650" y="507" width="1" height="17" fill="#fff"/><rect x="352" y="524.3" width="298.5" height="11.7" fill="#140c06"/><rect x="352.0" y="524.3" width="2.0" height="11.7" fill="#101808"/><rect x="354.0" y="524.3" width="2.0" height="11.7" fill="#1a6a1a"/><rect x="356.0" y="524.3" width="2.5" height="11.7" fill="#1a6a1a"/><rect x="358.5" y="524.3" width="2.5" height="11.7" fill="#2a8a2a"/><rect x="361.0" y="524.3" width="2.5" height="11.7" fill="#30b030"/><rect x="363.5" y="524.3" width="1.0" height="11.7" fill="#1a6a1a"/><rect x="364.5" y="524.3" width="1.5" height="11.7" fill="#0a3a0a"/><rect x="366.0" y="524.3" width="3.0" height="11.7" fill="#2a8a2a"/><rect x="369.0" y="524.3" width="2.5" height="11.7" fill="#3a0808"/><rect x="371.5" y="524.3" width="2.0" height="11.7" fill="#2a8a2a"/><rect x="373.5" y="524.3" width="2.5" height="11.7" fill="#2a8a2a"/><rect x="376.0" y="524.3" width="2.5" height="11.7" fill="#0a3a0a"/><rect x="378.5" y="524.3" width="2.5" height="11.7" fill="#0a3a0a"/><rect x="381.0" y="524.3" width="1.0" height="11.7" fill="#1a6a1a"/><rect x="382.0" y="524.3" width="1.5" height="11.7" fill="#2a8a2a"/><rect x="383.5" y="524.3" width="2.0" height="11.7" fill="#1a6a1a"/><rect x="385.5" y="524.3" width="2.5" height="11.7" fill="#42d042"/><rect x="388.0" y="524.3" width="2.5" height="11.7" fill="#1a6a1a"/><rect x="390.5" y="524.3" width="2.0" height="11.7" fill="#2a8a2a"/><rect x="392.5" y="524.3" width="3.0" height="11.7" fill="#0a3a0a"/><rect x="395.5" y="524.3" width="2.5" height="11.7" fill="#1a6a1a"/><rect x="398.0" y="524.3" width="2.5" height="11.7" fill="#1a6a1a"/><rect x="400.5" y="524.3" width="1.0" height="11.7" fill="#0a3a0a"/><rect x="401.5" y="524.3" width="2.0" height="11.7" fill="#0a3a0a"/><rect x="403.5" y="524.3" width="1.5" height="11.7" fill="#101808"/><rect x="405.0" y="524.3" width="1.0" height="11.7" fill="#9a1212"/><rect x="406.0" y="524.3" width="1.0" height="11.7" fill="#9a1212"/><rect x="407.0" y="524.3" width="2.0" height="11.7" fill="#6a1010"/><rect x="409.0" y="524.3" width="1.0" height="11.7" fill="#ee1818"/><rect x="410.0" y="524.3" width="1.0" height="11.7" fill="#6a1010"/><rect x="411.0" y="524.3" width="1.0" height="11.7" fill="#9a1212"/><rect x="412.0" y="524.3" width="3.0" height="11.7" fill="#9a1212"/><rect x="415.0" y="524.3" width="1.0" height="11.7" fill="#9a1212"/><rect x="416.0" y="524.3" width="1.5" height="11.7" fill="#d01414"/><rect x="417.5" y="524.3" width="2.0" height="11.7" fill="#6a1010"/><rect x="419.5" y="524.3" width="2.0" height="11.7" fill="#6a1010"/><rect x="421.5" y="524.3" width="2.0" height="11.7" fill="#d01414"/><rect x="423.5" y="524.3" width="1.0" height="11.7" fill="#3a0808"/><rect x="424.5" y="524.3" width="3.0" height="11.7" fill="#3a0808"/><rect x="427.5" y="524.3" width="1.0" height="11.7" fill="#9a1212"/><rect x="428.5" y="524.3" width="2.0" height="11.7" fill="#6a1010"/><rect x="430.5" y="524.3" width="1.5" height="11.7" fill="#6a1010"/><rect x="432.0" y="524.3" width="2.5" height="11.7" fill="#1a6a1a"/><rect x="434.5" y="524.3" width="3.0" height="11.7" fill="#30b030"/><rect x="437.5" y="524.3" width="2.0" height="11.7" fill="#2a8a2a"/><rect x="439.5" y="524.3" width="1.0" height="11.7" fill="#1a6a1a"/><rect x="440.5" y="524.3" width="1.5" height="11.7" fill="#0a3a0a"/><rect x="442.0" y="524.3" width="2.5" height="11.7" fill="#1a6a1a"/><rect x="444.5" y="524.3" width="1.0" height="11.7" fill="#1a6a1a"/><rect x="445.5" y="524.3" width="2.0" height="11.7" fill="#3a0808"/><rect x="447.5" y="524.3" width="2.5" height="11.7" fill="#2a8a2a"/><rect x="450.0" y="524.3" width="1.0" height="11.7" fill="#0a3a0a"/><rect x="451.0" y="524.3" width="1.5" height="11.7" fill="#1a6a1a"/><rect x="452.5" y="524.3" width="2.0" height="11.7" fill="#0a3a0a"/><rect x="454.5" y="524.3" width="2.5" height="11.7" fill="#1a6a1a"/><rect x="457.0" y="524.3" width="2.0" height="11.7" fill="#1a6a1a"/><rect x="459.0" y="524.3" width="1.0" height="11.7" fill="#0a3a0a"/><rect x="460.0" y="524.3" width="2.5" height="11.7" fill="#2a8a2a"/><rect x="462.5" y="524.3" width="1.0" height="11.7" fill="#2a8a2a"/><rect x="463.5" y="524.3" width="1.5" height="11.7" fill="#2a8a2a"/><rect x="465.0" y="524.3" width="1.5" height="11.7" fill="#1a6a1a"/><rect x="466.5" y="524.3" width="2.0" height="11.7" fill="#ee1818"/><rect x="468.5" y="524.3" width="1.5" height="11.7" fill="#ee1818"/><rect x="470.0" y="524.3" width="1.5" height="11.7" fill="#d01414"/><rect x="471.5" y="524.3" width="2.0" height="11.7" fill="#201408"/><rect x="473.5" y="524.3" width="2.5" height="11.7" fill="#6a1010"/><rect x="476.0" y="524.3" width="1.5" height="11.7" fill="#3a0808"/><rect x="477.5" y="524.3" width="3.0" height="11.7" fill="#201408"/><rect x="480.5" y="524.3" width="1.5" height="11.7" fill="#d01414"/><rect x="482.0" y="524.3" width="2.0" height="11.7" fill="#201408"/><rect x="484.0" y="524.3" width="2.5" height="11.7" fill="#3a0808"/><rect x="486.5" y="524.3" width="1.0" height="11.7" fill="#3a0808"/><rect x="487.5" y="524.3" width="1.0" height="11.7" fill="#9a1212"/><rect x="488.5" y="524.3" width="2.0" height="11.7" fill="#6a1010"/><rect x="490.5" y="524.3" width="3.0" height="11.7" fill="#9a1212"/><rect x="493.5" y="524.3" width="2.0" height="11.7" fill="#ee1818"/><rect x="495.5" y="524.3" width="2.5" height="11.7" fill="#9a1212"/><rect x="498.0" y="524.3" width="2.0" height="11.7" fill="#6a1010"/><rect x="500.0" y="524.3" width="3.0" height="11.7" fill="#3a0808"/><rect x="503.0" y="524.3" width="1.5" height="11.7" fill="#1a6a1a"/><rect x="504.5" y="524.3" width="0.5" height="11.7" fill="#2a8a2a"/><rect x="505.0" y="524.3" width="2.5" height="11.7" fill="#d01414"/><rect x="507.5" y="524.3" width="2.0" height="11.7" fill="#6a1010"/><rect x="509.5" y="524.3" width="1.5" height="11.7" fill="#d01414"/><rect x="511.0" y="524.3" width="1.0" height="11.7" fill="#6a1010"/><rect x="512.0" y="524.3" width="2.0" height="11.7" fill="#6a1010"/><rect x="514.0" y="524.3" width="1.0" height="11.7" fill="#6a1010"/><rect x="515.0" y="524.3" width="2.0" height="11.7" fill="#9a1212"/><rect x="517.0" y="524.3" width="1.5" height="11.7" fill="#3a0808"/><rect x="518.5" y="524.3" width="1.5" height="11.7" fill="#201408"/><rect x="520.0" y="524.3" width="2.0" height="11.7" fill="#d01414"/><rect x="522.0" y="524.3" width="3.0" height="11.7" fill="#9a1212"/><rect x="525.0" y="524.3" width="1.5" height="11.7" fill="#3a0808"/><rect x="526.5" y="524.3" width="1.0" height="11.7" fill="#101808"/><rect x="527.5" y="524.3" width="2.0" height="11.7" fill="#0a3a0a"/><rect x="529.5" y="524.3" width="0.5" height="11.7" fill="#201408"/><rect x="530.0" y="524.3" width="3.0" height="11.7" fill="#0a3a0a"/><rect x="533.0" y="524.3" width="1.0" height="11.7" fill="#30b030"/><rect x="534.0" y="524.3" width="2.0" height="11.7" fill="#0a3a0a"/><rect x="536.0" y="524.3" width="1.0" height="11.7" fill="#0a3a0a"/><rect x="537.0" y="524.3" width="2.5" height="11.7" fill="#1a6a1a"/><rect x="539.5" y="524.3" width="1.0" height="11.7" fill="#101808"/><rect x="540.5" y="524.3" width="3.0" height="11.7" fill="#30b030"/><rect x="543.5" y="524.3" width="1.5" height="11.7" fill="#30b030"/><rect x="545.0" y="524.3" width="2.0" height="11.7" fill="#1a6a1a"/><rect x="547.0" y="524.3" width="3.0" height="11.7" fill="#2a8a2a"/><rect x="550.0" y="524.3" width="1.0" height="11.7" fill="#101808"/><rect x="551.0" y="524.3" width="2.0" height="11.7" fill="#101808"/><rect x="553.0" y="524.3" width="1.0" height="11.7" fill="#101808"/><rect x="554.0" y="524.3" width="2.5" height="11.7" fill="#0a3a0a"/><rect x="556.5" y="524.3" width="3.0" height="11.7" fill="#1a6a1a"/><rect x="559.5" y="524.3" width="0.5" height="11.7" fill="#0a3a0a"/><rect x="560.0" y="524.3" width="1.0" height="11.7" fill="#3a0808"/><rect x="561.0" y="524.3" width="3.0" height="11.7" fill="#3a0808"/><rect x="564.0" y="524.3" width="2.0" height="11.7" fill="#201408"/><rect x="566.0" y="524.3" width="3.0" height="11.7" fill="#6a1010"/><rect x="569.0" y="524.3" width="1.0" height="11.7" fill="#d01414"/><rect x="570.0" y="524.3" width="2.0" height="11.7" fill="#101808"/><rect x="572.0" y="524.3" width="2.5" height="11.7" fill="#201408"/><rect x="574.5" y="524.3" width="2.5" height="11.7" fill="#201408"/><rect x="577.0" y="524.3" width="2.5" height="11.7" fill="#201408"/><rect x="579.5" y="524.3" width="1.0" height="11.7" fill="#201408"/><rect x="580.5" y="524.3" width="3.0" height="11.7" fill="#201408"/><rect x="583.5" y="524.3" width="2.5" height="11.7" fill="#3a0808"/><rect x="586.0" y="524.3" width="2.0" height="11.7" fill="#101808"/><rect x="588.0" y="524.3" width="1.0" height="11.7" fill="#101808"/><rect x="589.0" y="524.3" width="1.5" height="11.7" fill="#3a0808"/><rect x="590.5" y="524.3" width="1.5" height="11.7" fill="#3a0808"/><rect x="592.0" y="524.3" width="2.0" height="11.7" fill="#3a0808"/><rect x="594.0" y="524.3" width="2.0" height="11.7" fill="#101808"/><rect x="596.0" y="524.3" width="1.5" height="11.7" fill="#101808"/><rect x="597.5" y="524.3" width="3.0" height="11.7" fill="#201408"/><rect x="600.5" y="524.3" width="3.0" height="11.7" fill="#101808"/><rect x="603.5" y="524.3" width="1.5" height="11.7" fill="#6a1010"/><rect x="605.0" y="524.3" width="2.0" height="11.7" fill="#201408"/><rect x="607.0" y="524.3" width="2.0" height="11.7" fill="#201408"/><rect x="609.0" y="524.3" width="1.5" height="11.7" fill="#101808"/><rect x="610.5" y="524.3" width="1.0" height="11.7" fill="#0a3a0a"/><rect x="611.5" y="524.3" width="2.0" height="11.7" fill="#0a3a0a"/><rect x="613.5" y="524.3" width="1.0" height="11.7" fill="#101808"/><rect x="614.5" y="524.3" width="2.0" height="11.7" fill="#6a1010"/><rect x="616.5" y="524.3" width="2.0" height="11.7" fill="#101808"/><rect x="618.5" y="524.3" width="2.5" height="11.7" fill="#101808"/><rect x="621.0" y="524.3" width="2.0" height="11.7" fill="#0a3a0a"/><rect x="623.0" y="524.3" width="2.5" height="11.7" fill="#101808"/><rect x="625.5" y="524.3" width="1.0" height="11.7" fill="#0a3a0a"/><rect x="626.5" y="524.3" width="2.0" height="11.7" fill="#6a1010"/><rect x="628.5" y="524.3" width="1.0" height="11.7" fill="#3a0808"/><rect x="629.5" y="524.3" width="0.5" height="11.7" fill="#3a0808"/><rect x="630.0" y="524.3" width="2.0" height="11.7" fill="#6a1010"/><rect x="632.0" y="524.3" width="2.5" height="11.7" fill="#0a3a0a"/><rect x="634.5" y="524.3" width="1.5" height="11.7" fill="#2a8a2a"/><rect x="636.0" y="524.3" width="1.5" height="11.7" fill="#0a3a0a"/><rect x="637.5" y="524.3" width="2.0" height="11.7" fill="#1a6a1a"/><rect x="639.5" y="524.3" width="1.5" height="11.7" fill="#6a1010"/><rect x="641.0" y="524.3" width="2.0" height="11.7" fill="#0a3a0a"/><rect x="643.0" y="524.3" width="1.0" height="11.7" fill="#d01414"/><rect x="644.0" y="524.3" width="3.0" height="11.7" fill="#d01414"/><rect x="647.0" y="524.3" width="2.0" height="11.7" fill="#1a6a1a"/><rect x="649.0" y="524.3" width="1.5" height="11.7" fill="#6a1010"/></svg>
<div class="t" style="left:324.7px;top:502px;width:100px;text-align:center;color:#f4f4f4">FL</div>
<div class="t" style="left:368.3px;top:502px;width:100px;text-align:center;color:#f4f4f4">HiF</div>
<div class="t" style="left:388px;top:502px;width:100px;text-align:center;color:#f4f4f4">OL</div>
<div class="t" style="left:405.5px;top:502px;width:100px;text-align:center;color:#f4f4f4">PL</div>
<div class="t" style="left:429.5px;top:502px;width:100px;text-align:center;color:#f4f4f4">TL</div>
<div class="t" style="left:466px;top:502px;width:100px;text-align:center;color:#f4f4f4">Str</div>
<div class="t" style="left:494.29999999999995px;top:502px;width:100px;text-align:center;color:#f4f4f4">DT</div>
<div class="t" style="left:540px;top:502px;width:100px;text-align:center;color:#f4f4f4">CbCx</div>
<div class="t" style="left:585.3px;top:502px;width:100px;text-align:center;color:#f4f4f4">MY</div>
<div class="t" style="left:451.25px;top:537.8px;width:100px;text-align:center;color:#f4f4f4;width:160px;letter-spacing:-0.15px;left:421.2px">PDYN - CUST_653_PI417557136</div>
<svg width="977" height="621" style="left:0;top:0"><rect x="206.8" y="510" width="1" height="27" fill="#e8d040"/><path d="M204 540 l3.3 -3.5 l3.3 3.5 z" fill="#30e030"/></svg>
<svg width="977" height="621" style="left:0;top:0"><defs><linearGradient id="gsc" x1="0" x2="1"><stop offset="0" stop-color="#20d020"/><stop offset="0.5" stop-color="#000"/><stop offset="1" stop-color="#f01010"/></linearGradient></defs><rect x="450" y="550.5" width="210" height="12.5" fill="#888"/><rect x="451" y="551.5" width="208" height="10.5" fill="url(#gsc)"/><rect x="451" y="551.5" width="15" height="10.5" fill="#22ee22"/><rect x="643" y="551.5" width="16" height="10.5" fill="#f01212"/><rect x="466" y="548" width="2" height="17" fill="#fff"/><rect x="640" y="548" width="2" height="17" fill="#fff"/></svg>
<div class="t" style="left:460px;top:568.6px;color:#f4f4f4">-2.5</div>
<div class="t" style="left:636px;top:568.6px;color:#f4f4f4">2.5</div>
<div class="ab" style="left:667px;top:41px;width:1px;height:565px;background:#222"></div>
<div class="ab" style="left:668px;top:42px;width:307px;height:448px;background:#fff"></div>
<div class="ab" style="left:668px;top:42px;width:307px;height:15px;background:linear-gradient(#f6f5f0,#ecebe2)"></div>
<div class="ab" style="left:668px;top:56px;width:307px;height:1.5px;background:#222"></div>
<div class="t" style="left:674px;top:45.7px;">Structure</div>
<div class="ab" style="left:897px;top:44px;width:1px;height:11px;background:#d0cebf"></div>
<div class="ab" style="left:898px;top:44px;width:1px;height:11px;background:#fff"></div>
<div class="ab" style="left:918px;top:44px;width:1px;height:11px;background:#d0cebf"></div>
<div class="ab" style="left:919px;top:44px;width:1px;height:11px;background:#fff"></div>
<div class="ab" style="left:939px;top:44px;width:1px;height:11px;background:#d0cebf"></div>
<div class="ab" style="left:940px;top:44px;width:1px;height:11px;background:#fff"></div>
<div class="ab" style="left:960px;top:44px;width:1px;height:11px;background:#d0cebf"></div>
<div class="ab" style="left:961px;top:44px;width:1px;height:11px;background:#fff"></div>
<div class="t" style="left:927.5px;top:45.7px;">A</div>
<div class="t" style="left:948.5px;top:45.7px;">G</div>
<div class="ab" style="left:974px;top:42px;width:1px;height:448px;background:#222"></div>
<div class="ab" style="left:668px;top:57px;width:293px;height:432px;overflow:hidden">
<div class="vl" style="left:10.2px;top:12.6px;height:430.4px"></div>
<div class="vl" style="left:25.8px;top:25.7px;height:417.3px"></div>
<div class="vl" style="left:41.3px;top:38.8px;height:404.2px"></div>
<div class="vl" style="left:56.9px;top:51.9px;height:153.3px"></div>
<div class="vl" style="left:72.4px;top:65.0px;height:127.1px"></div>
<div class="vl" style="left:72.4px;top:78.1px;height:114.0px"></div>
<div class="vl" style="left:72.4px;top:91.3px;height:100.9px"></div>
<div class="vl" style="left:72.4px;top:104.4px;height:87.8px"></div>
<div class="vl" style="left:72.4px;top:117.5px;height:74.7px"></div>
<div class="vl" style="left:88.0px;top:130.6px;height:22.2px"></div>
<div class="vl" style="left:88.0px;top:143.7px;height:9.1px"></div>
<div class="vl" style="left:72.4px;top:169.9px;height:22.2px"></div>
<div class="vl" style="left:72.4px;top:183.0px;height:9.1px"></div>
<div class="vl" style="left:72.4px;top:222.4px;height:61.5px"></div>
<div class="vl" style="left:72.4px;top:235.5px;height:48.4px"></div>
<div class="vl" style="left:72.4px;top:248.6px;height:35.3px"></div>
<div class="vl" style="left:88.0px;top:261.7px;height:9.1px"></div>
<div class="vl" style="left:41.3px;top:301.0px;height:142.0px"></div>
<div class="vl" style="left:56.9px;top:314.1px;height:35.3px"></div>
<div class="vl" style="left:56.9px;top:327.2px;height:22.2px"></div>
<div class="vl" style="left:56.9px;top:340.4px;height:9.1px"></div>
<div class="vl" style="left:72.4px;top:366.6px;height:9.1px"></div>
<div class="vl" style="left:41.3px;top:392.8px;height:50.2px"></div>
<div class="vl" style="left:41.3px;top:405.9px;height:37.1px"></div>
<div class="vl" style="left:56.9px;top:419.0px;height:24.0px"></div>
<div class="vl" style="left:72.4px;top:432.1px;height:10.9px"></div>
<div class="vl" style="left:25.8px;top:12.6px;height:5.1px"></div>
<div class="vl" style="left:41.3px;top:25.7px;height:5.1px"></div>
<div class="vl" style="left:56.9px;top:38.8px;height:5.1px"></div>
<div class="vl" style="left:72.4px;top:51.9px;height:5.1px"></div>
<div class="vl" style="left:72.4px;top:54.0px;height:14px"></div>
<div class="vl" style="left:72.4px;top:67.1px;height:14px"></div>
<div class="vl" style="left:88.0px;top:117.5px;height:5.1px"></div>
<div class="vl" style="left:72.4px;top:209.2px;height:5.1px"></div>
<div class="vl" style="left:88.0px;top:248.6px;height:5.1px"></div>
<div class="vl" style="left:56.9px;top:301.0px;height:5.1px"></div>
<div class="vl" style="left:72.4px;top:353.5px;height:5.1px"></div>
<div class="vl" style="left:56.9px;top:405.9px;height:5.1px"></div>
<div class="vl" style="left:72.4px;top:419.0px;height:5.1px"></div>
<div class="ex " style="left:6.9px;top:4.0px"></div>
<div class="hl" style="left:15.2px;top:8.6px;width:3.8px"></div>
<div class="t" style="left:19.5px;top:3.5999999999999943px;">Brain (Br)</div>
<div class="sw" style="left:235px;top:3.6px;background:#a0a0a0"></div>
<div class="cb" style="left:256px;top:3.1px"></div>
<div class="cb" style="left:278px;top:3.1px"><svg width="9" height="9" style="left:0;top:0"><path d="M1.6 4.2 L3.6 6.6 L7.6 1.8" stroke="#1a9a1a" stroke-width="1.9" fill="none"/></svg></div>
<div class="ex " style="left:22.4px;top:17.1px"></div>
<div class="hl" style="left:30.8px;top:21.7px;width:3.8px"></div>
<div class="t" style="left:35.049999999999955px;top:16.709999999999994px;">Grey Matter (GM)</div>
<div class="sw" style="left:235px;top:16.7px;background:#707070"></div>
<div class="cb" style="left:256px;top:16.2px"></div>
<div class="cb" style="left:278px;top:16.2px"><svg width="9" height="9" style="left:0;top:0"><path d="M1.6 4.2 L3.6 6.6 L7.6 1.8" stroke="#1a9a1a" stroke-width="1.9" fill="none"/></svg></div>
<div class="ex " style="left:38.0px;top:30.2px"></div>
<div class="hl" style="left:46.3px;top:34.8px;width:3.8px"></div>
<div class="t" style="left:50.60000000000002px;top:29.819999999999993px;">Telencephalon (Tel)</div>
<div class="sw" style="left:235px;top:29.8px;background:#d878a0"></div>
<div class="cb" style="left:256px;top:29.3px"></div>
<div class="cb" style="left:278px;top:29.3px"><svg width="9" height="9" style="left:0;top:0"><path d="M1.6 4.2 L3.6 6.6 L7.6 1.8" stroke="#1a9a1a" stroke-width="1.9" fill="none"/></svg></div>
<div class="ex " style="left:53.6px;top:43.3px"></div>
<div class="hl" style="left:61.9px;top:47.9px;width:3.8px"></div>
<div class="t" style="left:66.14999999999998px;top:42.92999999999999px;">Cerebral Cortex (Cx)</div>
<div class="sw" style="left:235px;top:42.9px;background:#f0a050"></div>
<div class="cb" style="left:256px;top:42.4px"></div>
<div class="cb" style="left:278px;top:42.4px"><svg width="9" height="9" style="left:0;top:0"><path d="M1.6 4.2 L3.6 6.6 L7.6 1.8" stroke="#1a9a1a" stroke-width="1.9" fill="none"/></svg></div>
<div class="hl" style="left:72.9px;top:61.0px;width:8.3px"></div>
<div class="t" style="left:81.70000000000005px;top:56.03999999999999px;">Pial Surface, Left (lh.pial)</div>
<div class="sw" style="left:235px;top:56.0px;background:#7c7c7c"></div>
<div class="cb" style="left:256px;top:55.5px"></div>
<div class="cb" style="left:278px;top:55.5px"><svg width="9" height="9" style="left:0;top:0"><path d="M1.6 4.2 L3.6 6.6 L7.6 1.8" stroke="#1a9a1a" stroke-width="1.9" fill="none"/></svg></div>
<div class="hl" style="left:72.9px;top:74.1px;width:8.3px"></div>
<div class="t" style="left:81.70000000000005px;top:69.14999999999998px;">Pial Surface, Right (rh.pial)</div>
<div class="sw" style="left:235px;top:69.1px;background:#7c7c7c"></div>
<div class="cb" style="left:256px;top:68.6px"></div>
<div class="cb" style="left:278px;top:68.6px"><svg width="9" height="9" style="left:0;top:0"><path d="M1.6 4.2 L3.6 6.6 L7.6 1.8" stroke="#1a9a1a" stroke-width="1.9" fill="none"/></svg></div>
<div class="ex p" style="left:69.1px;top:82.7px"></div>
<div class="hl" style="left:77.4px;top:87.3px;width:3.8px"></div>
<div class="t" style="left:81.70000000000005px;top:82.25999999999999px;">Frontal Lobe (FL)</div>
<div class="sw" style="left:235px;top:82.3px;background:#e8c450"></div>
<div class="cbf" style="left:256px;top:81.8px"></div>
<div class="cb" style="left:278px;top:81.8px"><svg width="9" height="9" style="left:0;top:0"><path d="M1.6 4.2 L3.6 6.6 L7.6 1.8" stroke="#1a9a1a" stroke-width="1.9" fill="none"/></svg></div>
<div class="ex p" style="left:69.1px;top:95.8px"></div>
<div class="hl" style="left:77.4px;top:100.4px;width:3.8px"></div>
<div class="t" style="left:81.70000000000005px;top:95.37px;">Insula (Ins)</div>
<div class="sw" style="left:235px;top:95.4px;background:#f8f850"></div>
<div class="cbf" style="left:256px;top:94.9px"></div>
<div class="cb" style="left:278px;top:94.9px"><svg width="9" height="9" style="left:0;top:0"><path d="M1.6 4.2 L3.6 6.6 L7.6 1.8" stroke="#1a9a1a" stroke-width="1.9" fill="none"/></svg></div>
<div class="ex " style="left:69.1px;top:108.9px"></div>
<div class="hl" style="left:77.4px;top:113.5px;width:3.8px"></div>
<div class="t" style="left:81.70000000000005px;top:108.47999999999999px;">Limbic Lobe (LL)</div>
<div class="sw" style="left:235px;top:108.5px;background:#b88838"></div>
<div class="cb" style="left:256px;top:108.0px"></div>
<div class="cb" style="left:278px;top:108.0px"><svg width="9" height="9" style="left:0;top:0"><path d="M1.6 4.2 L3.6 6.6 L7.6 1.8" stroke="#1a9a1a" stroke-width="1.9" fill="none"/></svg></div>
<div class="ex p" style="left:84.7px;top:122.0px"></div>
<div class="hl" style="left:93.0px;top:126.6px;width:3.8px"></div>
<div class="t" style="left:97.25px;top:121.58999999999997px;">Cingulate gyrus (CgG)</div>
<div class="sw" style="left:235px;top:121.6px;background:#7a5020"></div>
<div class="cbf" style="left:256px;top:121.1px"></div>
<div class="cb" style="left:278px;top:121.1px"><svg width="9" height="9" style="left:0;top:0"><path d="M1.6 4.2 L3.6 6.6 L7.6 1.8" stroke="#1a9a1a" stroke-width="1.9" fill="none"/></svg></div>
<div class="ex p" style="left:84.7px;top:135.1px"></div>
<div class="hl" style="left:93.0px;top:139.7px;width:3.8px"></div>
<div class="t" style="left:97.25px;top:134.7px;">hippocampal formation (HiF)</div>
<div class="sw" style="left:235px;top:134.7px;background:#f8c060"></div>
<div class="cb" style="left:256px;top:134.2px"></div>
<div class="cb" style="left:278px;top:134.2px"><svg width="9" height="9" style="left:0;top:0"><path d="M1.6 4.2 L3.6 6.6 L7.6 1.8" stroke="#1a9a1a" stroke-width="1.9" fill="none"/></svg></div>
<div class="ex p" style="left:84.7px;top:148.2px"></div>
<div class="hl" style="left:93.0px;top:152.8px;width:3.8px"></div>
<div class="t" style="left:97.25px;top:147.80999999999997px;">parahippocampal gyrus (PHG)</div>
<div class="sw" style="left:235px;top:147.8px;background:#b88838"></div>
<div class="cbf" style="left:256px;top:147.3px"></div>
<div class="cb" style="left:278px;top:147.3px"><svg width="9" height="9" style="left:0;top:0"><path d="M1.6 4.2 L3.6 6.6 L7.6 1.8" stroke="#1a9a1a" stroke-width="1.9" fill="none"/></svg></div>
<div class="ex p" style="left:69.1px;top:161.3px"></div>
<div class="hl" style="left:77.4px;top:165.9px;width:3.8px"></div>
<div class="t" style="left:81.70000000000005px;top:160.92px;">Occipital Lobe (OL)</div>
<div class="sw" style="left:235px;top:160.9px;background:#e88040"></div>
<div class="cbf" style="left:256px;top:160.4px"></div>
<div class="cb" style="left:278px;top:160.4px"><svg width="9" height="9" style="left:0;top:0"><path d="M1.6 4.2 L3.6 6.6 L7.6 1.8" stroke="#1a9a1a" stroke-width="1.9" fill="none"/></svg></div>
<div class="ex p" style="left:69.1px;top:174.4px"></div>
<div class="hl" style="left:77.4px;top:179.0px;width:3.8px"></div>
<div class="t" style="left:81.70000000000005px;top:174.03px;">Parietal Lobe (PL)</div>
<div class="sw" style="left:235px;top:174.0px;background:#f86060"></div>
<div class="cbf" style="left:256px;top:173.5px"></div>
<div class="cb" style="left:278px;top:173.5px"><svg width="9" height="9" style="left:0;top:0"><path d="M1.6 4.2 L3.6 6.6 L7.6 1.8" stroke="#1a9a1a" stroke-width="1.9" fill="none"/></svg></div>
<div class="ex p" style="left:69.1px;top:187.5px"></div>
<div class="hl" style="left:77.4px;top:192.1px;width:3.8px"></div>
<div class="t" style="left:81.70000000000005px;top:187.14px;">Temporal Lobe (TL)</div>
<div class="sw" style="left:235px;top:187.1px;background:#f89080"></div>
<div class="cbf" style="left:256px;top:186.6px"></div>
<div class="cb" style="left:278px;top:186.6px"><svg width="9" height="9" style="left:0;top:0"><path d="M1.6 4.2 L3.6 6.6 L7.6 1.8" stroke="#1a9a1a" stroke-width="1.9" fill="none"/></svg></div>
<div class="ex " style="left:53.6px;top:200.7px"></div>
<div class="hl" style="left:61.9px;top:205.2px;width:3.8px"></div>
<div class="t" style="left:66.14999999999998px;top:200.25px;">Cerebral Nuclei (CxN)</div>
<div class="sw" style="left:235px;top:200.2px;background:#c060e0"></div>
<div class="cb" style="left:256px;top:199.8px"></div>
<div class="cb" style="left:278px;top:199.8px"><svg width="9" height="9" style="left:0;top:0"><path d="M1.6 4.2 L3.6 6.6 L7.6 1.8" stroke="#1a9a1a" stroke-width="1.9" fill="none"/></svg></div>
<div class="ex p" style="left:69.1px;top:213.8px"></div>
<div class="hl" style="left:77.4px;top:218.4px;width:3.8px"></div>
<div class="t" style="left:81.70000000000005px;top:213.36px;">Amygdala (Amg)</div>
<div class="sw" style="left:235px;top:213.4px;background:#f850d8"></div>
<div class="cb" style="left:256px;top:212.9px"></div>
<div class="cb" style="left:278px;top:212.9px"><svg width="9" height="9" style="left:0;top:0"><path d="M1.6 4.2 L3.6 6.6 L7.6 1.8" stroke="#1a9a1a" stroke-width="1.9" fill="none"/></svg></div>
<div class="ex p" style="left:69.1px;top:226.9px"></div>
<div class="hl" style="left:77.4px;top:231.5px;width:3.8px"></div>
<div class="t" style="left:81.70000000000005px;top:226.47000000000003px;">Basal Forebrain (BF)</div>
<div class="sw" style="left:235px;top:226.5px;background:#d068f0"></div>
<div class="cbf" style="left:256px;top:226.0px"></div>
<div class="cb" style="left:278px;top:226.0px"><svg width="9" height="9" style="left:0;top:0"><path d="M1.6 4.2 L3.6 6.6 L7.6 1.8" stroke="#1a9a1a" stroke-width="1.9" fill="none"/></svg></div>
<div class="ex " style="left:69.1px;top:240.0px"></div>
<div class="hl" style="left:77.4px;top:244.6px;width:3.8px"></div>
<div class="t" style="left:81.70000000000005px;top:239.57999999999998px;">Basal Ganglia (BG)</div>
<div class="sw" style="left:235px;top:239.6px;background:#8050e8"></div>
<div class="cb" style="left:256px;top:239.1px"></div>
<div class="cb" style="left:278px;top:239.1px"><svg width="9" height="9" style="left:0;top:0"><path d="M1.6 4.2 L3.6 6.6 L7.6 1.8" stroke="#1a9a1a" stroke-width="1.9" fill="none"/></svg></div>
<div class="ex p" style="left:84.7px;top:253.1px"></div>
<div class="hl" style="left:93.0px;top:257.7px;width:3.8px"></div>
<div class="t" style="left:97.25px;top:252.68999999999994px;">Globus Pallidus (GP)</div>
<div class="sw" style="left:235px;top:252.7px;background:#9048e0"></div>
<div class="cb" style="left:256px;top:252.2px"></div>
<div class="cb" style="left:278px;top:252.2px"><svg width="9" height="9" style="left:0;top:0"><path d="M1.6 4.2 L3.6 6.6 L7.6 1.8" stroke="#1a9a1a" stroke-width="1.9" fill="none"/></svg></div>
<div class="ex p" style="left:84.7px;top:266.2px"></div>
<div class="hl" style="left:93.0px;top:270.8px;width:3.8px"></div>
<div class="t" style="left:97.25px;top:265.79999999999995px;">Striatum (Str)</div>
<div class="sw" style="left:235px;top:265.8px;background:#7850f0"></div>
<div class="cb" style="left:256px;top:265.3px"></div>
<div class="cb" style="left:278px;top:265.3px"><svg width="9" height="9" style="left:0;top:0"><path d="M1.6 4.2 L3.6 6.6 L7.6 1.8" stroke="#1a9a1a" stroke-width="1.9" fill="none"/></svg></div>
<div class="ex p" style="left:69.1px;top:279.3px"></div>
<div class="hl" style="left:77.4px;top:283.9px;width:3.8px"></div>
<div class="t" style="left:81.70000000000005px;top:278.90999999999997px;">Claustrum (Cl)</div>
<div class="sw" style="left:235px;top:278.9px;background:#c0a8f8"></div>
<div class="cbf" style="left:256px;top:278.4px"></div>
<div class="cb" style="left:278px;top:278.4px"><svg width="9" height="9" style="left:0;top:0"><path d="M1.6 4.2 L3.6 6.6 L7.6 1.8" stroke="#1a9a1a" stroke-width="1.9" fill="none"/></svg></div>
<div class="ex " style="left:38.0px;top:292.4px"></div>
<div class="hl" style="left:46.3px;top:297.0px;width:3.8px"></div>
<div class="t" style="left:50.60000000000002px;top:292.02px;">Diencephalon (DiE)</div>
<div class="sw" style="left:235px;top:292.0px;background:#80ee60"></div>
<div class="cb" style="left:256px;top:291.5px"></div>
<div class="cb" style="left:278px;top:291.5px"><svg width="9" height="9" style="left:0;top:0"><path d="M1.6 4.2 L3.6 6.6 L7.6 1.8" stroke="#1a9a1a" stroke-width="1.9" fill="none"/></svg></div>
<div class="ex p" style="left:53.6px;top:305.5px"></div>
<div class="hl" style="left:61.9px;top:310.1px;width:3.8px"></div>
<div class="t" style="left:66.14999999999998px;top:305.13px;">Epithalamus (ET)</div>
<div class="sw" style="left:235px;top:305.1px;background:#70e070"></div>
<div class="cbf" style="left:256px;top:304.6px"></div>
<div class="cb" style="left:278px;top:304.6px"><svg width="9" height="9" style="left:0;top:0"><path d="M1.6 4.2 L3.6 6.6 L7.6 1.8" stroke="#1a9a1a" stroke-width="1.9" fill="none"/></svg></div>
<div class="ex p" style="left:53.6px;top:318.6px"></div>
<div class="hl" style="left:61.9px;top:323.2px;width:3.8px"></div>
<div class="t" style="left:66.14999999999998px;top:318.24px;">Hypothalamus (Hy)</div>
<div class="sw" style="left:235px;top:318.2px;background:#80f090"></div>
<div class="cbf" style="left:256px;top:317.7px"></div>
<div class="cb" style="left:278px;top:317.7px"><svg width="9" height="9" style="left:0;top:0"><path d="M1.6 4.2 L3.6 6.6 L7.6 1.8" stroke="#1a9a1a" stroke-width="1.9" fill="none"/></svg></div>
<div class="ex p" style="left:53.6px;top:331.8px"></div>
<div class="hl" style="left:61.9px;top:336.4px;width:3.8px"></div>
<div class="t" style="left:66.14999999999998px;top:331.35px;">Subthalamus (SbT)</div>
<div class="sw" style="left:235px;top:331.4px;background:#80f060"></div>
<div class="cbf" style="left:256px;top:330.9px"></div>
<div class="cb" style="left:278px;top:330.9px"><svg width="9" height="9" style="left:0;top:0"><path d="M1.6 4.2 L3.6 6.6 L7.6 1.8" stroke="#1a9a1a" stroke-width="1.9" fill="none"/></svg></div>
<div class="ex " style="left:53.6px;top:344.9px"></div>
<div class="hl" style="left:61.9px;top:349.5px;width:3.8px"></div>
<div class="t" style="left:66.14999999999998px;top:344.46000000000004px;">Thalamus (TH)</div>
<div class="sw" style="left:235px;top:344.5px;background:#c0e850"></div>
<div class="cb" style="left:256px;top:344.0px"></div>
<div class="cb" style="left:278px;top:344.0px"><svg width="9" height="9" style="left:0;top:0"><path d="M1.6 4.2 L3.6 6.6 L7.6 1.8" stroke="#1a9a1a" stroke-width="1.9" fill="none"/></svg></div>
<div class="ex p" style="left:69.1px;top:358.0px"></div>
<div class="hl" style="left:77.4px;top:362.6px;width:3.8px"></div>
<div class="t" style="left:81.70000000000005px;top:357.56999999999994px;">Dorsal Thalamus (DT)</div>
<div class="sw" style="left:235px;top:357.6px;background:#a8e058"></div>
<div class="cbf" style="left:256px;top:357.1px"></div>
<div class="cb" style="left:278px;top:357.1px"><svg width="9" height="9" style="left:0;top:0"><path d="M1.6 4.2 L3.6 6.6 L7.6 1.8" stroke="#1a9a1a" stroke-width="1.9" fill="none"/></svg></div>
<div class="ex p" style="left:69.1px;top:371.1px"></div>
<div class="hl" style="left:77.4px;top:375.7px;width:3.8px"></div>
<div class="t" style="left:81.70000000000005px;top:370.67999999999995px;">Ventral Thalamus (VT)</div>
<div class="sw" style="left:235px;top:370.7px;background:#e0f060"></div>
<div class="cbf" style="left:256px;top:370.2px"></div>
<div class="cb" style="left:278px;top:370.2px"><svg width="9" height="9" style="left:0;top:0"><path d="M1.6 4.2 L3.6 6.6 L7.6 1.8" stroke="#1a9a1a" stroke-width="1.9" fill="none"/></svg></div>
<div class="ex p" style="left:38.0px;top:384.2px"></div>
<div class="hl" style="left:46.3px;top:388.8px;width:3.8px"></div>
<div class="t" style="left:50.60000000000002px;top:383.78999999999996px;">Mesencephalon (MES)</div>
<div class="sw" style="left:235px;top:383.8px;background:#0c7010"></div>
<div class="cbf" style="left:256px;top:383.3px"></div>
<div class="cb" style="left:278px;top:383.3px"><svg width="9" height="9" style="left:0;top:0"><path d="M1.6 4.2 L3.6 6.6 L7.6 1.8" stroke="#1a9a1a" stroke-width="1.9" fill="none"/></svg></div>
<div class="ex " style="left:38.0px;top:397.3px"></div>
<div class="hl" style="left:46.3px;top:401.9px;width:3.8px"></div>
<div class="t" style="left:50.60000000000002px;top:396.9px;">Metencephalon (Met)</div>
<div class="sw" style="left:235px;top:396.9px;background:#18d8d0"></div>
<div class="cb" style="left:256px;top:396.4px"></div>
<div class="cb" style="left:278px;top:396.4px"><svg width="9" height="9" style="left:0;top:0"><path d="M1.6 4.2 L3.6 6.6 L7.6 1.8" stroke="#1a9a1a" stroke-width="1.9" fill="none"/></svg></div>
<div class="ex " style="left:53.6px;top:410.4px"></div>
<div class="hl" style="left:61.9px;top:415.0px;width:3.8px"></div>
<div class="t" style="left:66.14999999999998px;top:410.01px;">Cerebellum (Cb)</div>
<div class="sw" style="left:235px;top:410.0px;background:#18c8f0"></div>
<div class="cb" style="left:256px;top:409.5px"></div>
<div class="cb" style="left:278px;top:409.5px"><svg width="9" height="9" style="left:0;top:0"><path d="M1.6 4.2 L3.6 6.6 L7.6 1.8" stroke="#1a9a1a" stroke-width="1.9" fill="none"/></svg></div>
<div class="ex p" style="left:69.1px;top:423.5px"></div>
<div class="hl" style="left:77.4px;top:428.1px;width:3.8px"></div>
<div class="t" style="left:81.70000000000005px;top:423.12px;">Cerebellar Cortex (CbCx)</div>
<div class="sw" style="left:235px;top:423.1px;background:#18c8e8"></div>
<div class="cb" style="left:256px;top:422.6px"></div>
<div class="cb" style="left:278px;top:422.6px"><svg width="9" height="9" style="left:0;top:0"><path d="M1.6 4.2 L3.6 6.6 L7.6 1.8" stroke="#1a9a1a" stroke-width="1.9" fill="none"/></svg></div>
</div>
<div class="ab" style="left:961px;top:57px;width:13px;height:432px;background:#f6f5f0"></div>
<div class="ab" style="left:962px;top:60px;width:11px;height:11px;background:linear-gradient(#d6e2fc,#bccff8);border-radius:2px"></div>
<svg width="11" height="11" style="left:962px;top:60px"><path d="M2.5 7 L5.5 4 L8.5 7" stroke="#4d6185" stroke-width="1.6" fill="none"/></svg>
<div class="ab" style="left:962px;top:73px;width:11px;height:312px;background:linear-gradient(90deg,#c8d7fb,#b9ccf7);border-radius:1px"></div>
<div class="ab" style="left:962px;top:477px;width:11px;height:11px;background:linear-gradient(#d6e2fc,#bccff8);border-radius:2px"></div>
<svg width="11" height="11" style="left:962px;top:477px"><path d="M2.5 4 L5.5 7 L8.5 4" stroke="#4d6185" stroke-width="1.6" fill="none"/></svg>
<div class="ab" style="left:668px;top:489px;width:307px;height:1px;background:#222"></div>
<div class="ab" style="left:668px;top:490px;width:307px;height:18px;background:#ece9d8"></div>
<div class="ab" style="left:670px;top:491px;width:62px;height:17px;border-right:1px solid #c8c5b4"></div>
<div class="t" style="left:674px;top:495.6px;">Alphabetical</div>
<div class="ab" style="left:734px;top:490.5px;width:56px;height:17px;background:#f6f5f0;border:1px solid #c8c5b4;border-left:1.5px solid #5a5a5a;border-bottom:none"></div>
<div class="t" style="left:740px;top:494.8px;">Hierarchical</div>
<div class="ab" style="left:794px;top:491px;width:60px;height:17px;border-right:1px solid #c8c5b4;border-left:1px solid #c8c5b4"></div>
<div class="t" style="left:802px;top:495.6px;">Bookmarks</div>
<div class="ab" style="left:668px;top:507.5px;width:307px;height:98.5px;background:#fff;border:1px solid #222"></div>
<div class="ab" style="left:670px;top:510px;width:291px;height:10px;background:#ebe8dc"></div>
<div class="t" style="left:673px;top:509.5px;letter-spacing:-0.25px">PDYN - CUST_653_PI417557136</div>
<div class="ab" style="left:3px;top:585px;width:664px;height:21px;background:#ece9d8"></div>
<div class="ab" style="left:3px;top:585px;width:664px;height:1px;background:#fff"></div>
<div class="t" style="left:474.5px;top:591.4px;">Zoom</div>
<div class="ab" style="left:506px;top:594px;width:150px;height:2.5px;background:#d6d4c8;border-top:1px solid #b8b6a8"></div>
<svg width="10" height="18" style="left:527px;top:587px"><path d="M1 1.5 h8 v11 l-4 4 l-4 -4 z" fill="#f6f6f0" stroke="#7f9a80" stroke-width="1"/><rect x="1.5" y="1.5" width="7" height="2" fill="#22a030"/></svg>
<div class="ab" style="left:2px;top:606px;width:973px;height:1.5px;background:#fff"></div>
<div class="ab" style="left:2px;top:607.5px;width:973px;height:1.5px;background:#b4b1a2"></div>
<div class="ab" style="left:2px;top:609px;width:973px;height:11px;background:#ece9d8"></div>
<div class="ab" style="left:2px;top:619px;width:973px;height:1px;background:#fff"></div>
<svg width="12" height="12" style="left:962px;top:608px"><g fill="#a09e94"><rect x="8" y="3" width="1.6" height="1.6"/><rect x="5" y="6" width="1.6" height="1.6"/><rect x="8" y="6" width="1.6" height="1.6"/><rect x="2" y="9" width="1.6" height="1.6"/><rect x="5" y="9" width="1.6" height="1.6"/><rect x="8" y="9" width="1.6" height="1.6"/></g></svg>
<div class="t" style="left:3px;top:611px;">Ready</div>
</body></html>
